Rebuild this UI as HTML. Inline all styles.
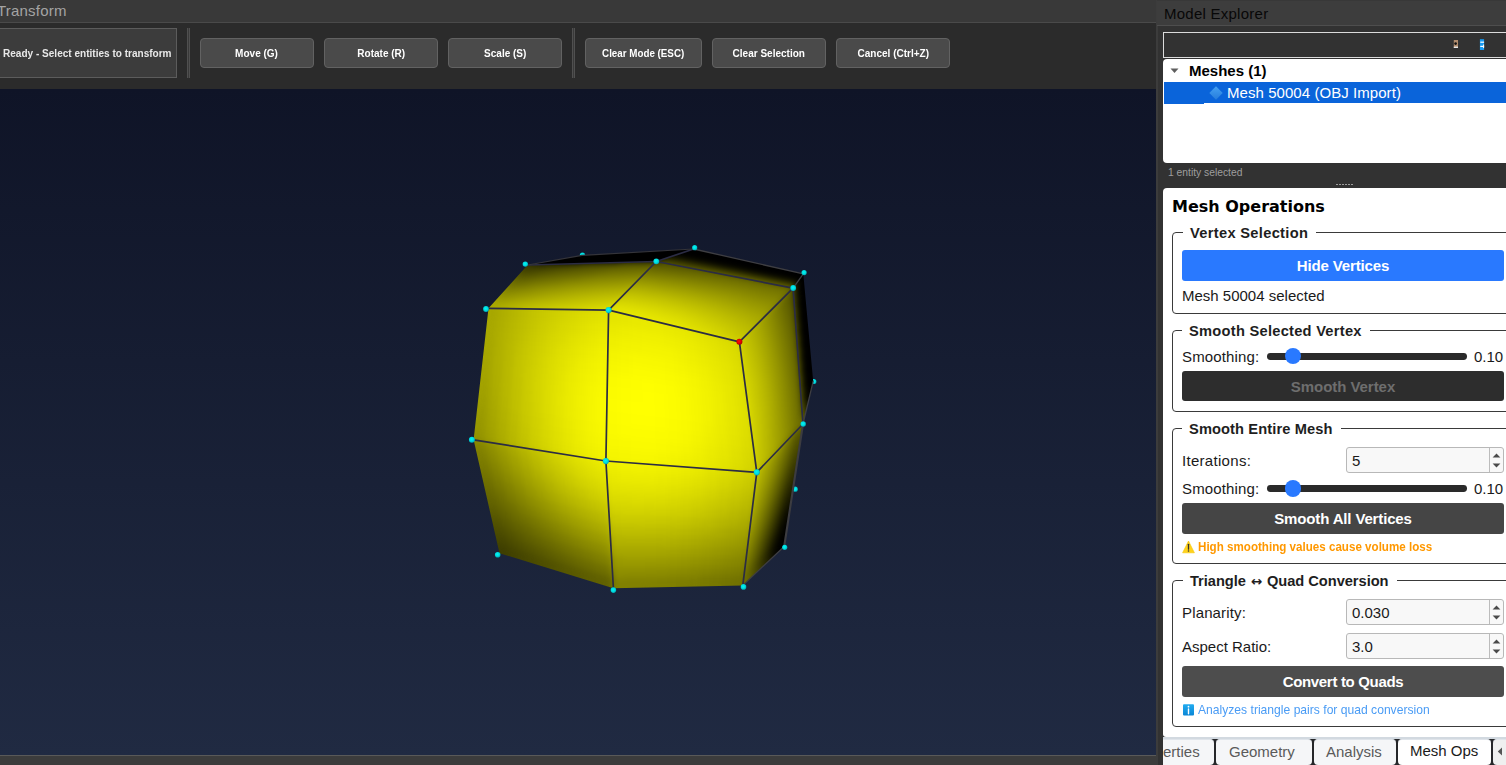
<!DOCTYPE html>
<html lang="en">
<head>
<meta charset="utf-8">
<title>Mesh Editor</title>
<style>
*{box-sizing:border-box;margin:0;padding:0}
html,body{width:1506px;height:765px;overflow:hidden;background:#3c3c3c;font-family:"Liberation Sans","DejaVu Sans",sans-serif}
.abs{position:absolute}
#app{position:relative;width:1506px;height:765px;overflow:hidden;background:#3c3c3c}
/* left title */
#ltitle{left:0;top:0;width:1156px;height:22px;background:#393939}
#ltitle span{position:absolute;left:-3px;top:2px;letter-spacing:.2px;font-size:15px;color:#a4a4a4;white-space:nowrap}
#lline{left:0;top:22px;width:1156px;height:1px;background:#4a4a4a}
#toolbar{left:0;top:23px;width:1156px;height:66px;background:#2b2b2b}
#status{left:-1px;top:28px;width:178px;height:50px;background:#3c3c3c;border:1px solid #5c5c5c}
#status span{position:absolute;left:3.3px;top:17px;font-size:11px;font-weight:bold;color:#e8e8e8;white-space:nowrap;transform:scaleX(.913);transform-origin:0 50%;line-height:14px}
.sep{top:28px;width:3px;height:50px;border:1px solid #505050;border-top:none;border-bottom:none;background:#3a3a3a}
.tbtn{top:38px;height:30px;background:#4a4a4a;border:1px solid #626262;border-radius:4px;color:#fff;font-size:11px;font-weight:bold;text-align:center;line-height:28px;white-space:nowrap}
.tbtn span{display:inline-block;transform:scaleX(.91)}
/* viewport */
#viewport{left:0;top:89px;width:1156px;height:666px;background:linear-gradient(#0f1427,#202a42)}
#bbar{left:0;top:755px;width:1156px;height:10px;background:#3c3c3c;border-top:1px solid #595959}
#vsplit{left:1156px;top:0;width:1.6px;height:765px;background:#3c3c3c}
/* dock */
#dock{left:1157.6px;top:0;width:349px;height:765px;background:#323232}
#dtitle{left:1157px;top:0;width:349px;height:26px;background:#3d3d3d;border-bottom:1px solid #4e4e4e;border-top:1px solid #383838}
#dtitle span{position:absolute;left:7px;top:4px;font-size:15px;letter-spacing:.25px;color:#080808;white-space:nowrap}
#hdr{left:1163px;top:32px;width:360px;height:26px;background:#323232;border:1px solid #dcdcdc}
#tree{left:1163px;top:59px;width:360px;height:104px;background:#fff;border-radius:4px 0 0 4px}
#row{left:1164px;top:82px;width:360px;height:20.8px;background:#0a64da}
#row2{left:1164px;top:102px;width:40px;height:1.8px;background:#0a64da}
#panel{left:1163px;top:187.6px;width:360px;height:549.6px;background:#fff;border-radius:4px 0 0 3px}
.grp{left:1172px;width:360px;border:1px solid #3a3a3a;border-radius:4px}
.gtitle{background:#fff;padding:0 8px 0 7px;font-weight:bold;font-size:14.67px;color:#1e1e1e;white-space:nowrap;line-height:18px;height:18px}
.lbl{font-size:15px;color:#1a1a1a;white-space:nowrap;line-height:18px}
.btn{left:1182px;width:322px;border-radius:3px;text-align:center;font-size:15px;font-weight:bold;color:#fff;white-space:nowrap;letter-spacing:-.15px}
.spin{left:1346px;width:158px;height:26px;background:#f8f8f8;border:1px solid #b8b8b8;border-radius:3px}
.spin span{position:absolute;left:5px;top:4px;font-size:15px;color:#1a1a1a;line-height:18px}
.spin i{position:absolute;left:142px;top:0;width:1px;height:24px;background:#bcbcbc}
.spin svg{position:absolute;left:145px;top:5px}
.track{left:1266.5px;width:200.5px;height:6.8px;border-radius:3.4px;background:#2a2a2a}
.knob{width:16.4px;height:16.4px;border-radius:8.2px;background:#2979ff}
#tabs{left:1163px;top:737px;width:343px;height:28px;background:#26272a;border-top:2px solid #d2d9e0}
.tabbg{top:738.5px;height:26.5px;background:#f5f6f8;border-radius:4px;border-top:1px solid #dfe4ea}
.tab{top:739px;height:26px;font-size:15px;color:#5a5a5a;white-space:nowrap;line-height:26px}
</style>
</head>
<body>
<div id="app">
  <div id="ltitle" class="abs"><span id="ttxt">Transform</span></div>
  <div id="lline" class="abs"></div>
  <div id="toolbar" class="abs"></div>
  <div id="status" class="abs"><span id="stxt">Ready - Select entities to transform</span></div>
  <div class="abs sep" style="left:187px"></div>
  <div class="abs tbtn" style="left:200px;width:114px" id="tb0"><span>Move (G)</span></div>
  <div class="abs tbtn" style="left:324px;width:114px" id="tb1"><span>Rotate (R)</span></div>
  <div class="abs tbtn" style="left:448px;width:114px" id="tb2"><span>Scale (S)</span></div>
  <div class="abs sep" style="left:572px"></div>
  <div class="abs tbtn" style="left:585px;width:117px" id="tb3"><span style="transform:scaleX(.89)">Clear Mode (ESC)</span></div>
  <div class="abs tbtn" style="left:712px;width:114px" id="tb4"><span>Clear Selection</span></div>
  <div class="abs tbtn" style="left:836px;width:114px" id="tb5"><span>Cancel (Ctrl+Z)</span></div>

  <div id="viewport" class="abs">
    <svg id="mesh" width="1156" height="666" viewBox="0 89 1156 666">
<defs><radialGradient id="cy" cx=".45" cy=".42" r=".6"><stop offset="0" stop-color="#00f6f6"/><stop offset=".55" stop-color="#00dde0"/><stop offset="1" stop-color="#00a4b0"/></radialGradient><radialGradient id="rd" cx=".45" cy=".42" r=".6"><stop offset="0" stop-color="#ff0a0a"/><stop offset=".6" stop-color="#e00000"/><stop offset="1" stop-color="#a00000"/></radialGradient><filter id="sm" filterUnits="userSpaceOnUse" x="440" y="220" width="420" height="400" color-interpolation-filters="sRGB"><feGaussianBlur stdDeviation="3"/><feComponentTransfer><feFuncA type="linear" slope="80"/></feComponentTransfer></filter>
<clipPath id="sil"><path d="M527.6 265.0L582.0 255.4L693.6 249.0L803.3 273.8L813.2 381.2L803.0 424.0L784.2 546.5L742.8 585.4L613.4 588.2L499.5 553.2L473.6 439.8L488.5 308.3z"/></clipPath></defs>
<g fill="url(#cy)"><circle cx="582.5" cy="255.3" r="2.7"/><circle cx="813.8" cy="381.5" r="2.6"/><circle cx="795.2" cy="489.2" r="2.6"/></g>
<g clip-path="url(#sil)"><g filter="url(#sm)" shape-rendering="crispEdges">
<path d="M527.6 265L532.1 264.2L542.7 263.9L538.3 264.7z" fill="#070700"/>
<path d="M538.3 264.7L542.7 263.9L553.3 263.6L549 264.4z" fill="#070700"/>
<path d="M549 264.4L553.3 263.6L564 263.3L559.8 264.1z" fill="#080800"/>
<path d="M559.8 264.1L564 263.3L574.6 263L570.5 263.8z" fill="#090900"/>
<path d="M570.5 263.8L574.6 263L585.2 262.6L581.2 263.5z" fill="#090900"/>
<path d="M581.2 263.5L585.2 262.6L595.8 262.3L592 263.2z" fill="#0a0a00"/>
<path d="M592 263.2L595.8 262.3L606.4 262L602.7 263z" fill="#0a0a00"/>
<path d="M602.7 263L606.4 262L617 261.7L613.4 262.7z" fill="#0a0a00"/>
<path d="M613.4 262.7L617 261.7L627.6 261.4L624.1 262.4z" fill="#0b0b00"/>
<path d="M624.1 262.4L627.6 261.4L638.2 261.1L634.8 262.1z" fill="#0b0b00"/>
<path d="M634.8 262.1L638.2 261.1L648.8 260.8L645.6 261.8z" fill="#0b0b00"/>
<path d="M645.6 261.8L648.8 260.8L659.4 260.5L656.3 261.5z" fill="#0b0b00"/>
<path d="M532.1 264.2L536.7 263.4L547.2 263.1L542.7 263.9z" fill="#000000"/>
<path d="M542.7 263.9L547.2 263.1L557.6 262.7L553.3 263.6z" fill="#000000"/>
<path d="M553.3 263.6L557.6 262.7L568.1 262.4L564 263.3z" fill="#000000"/>
<path d="M564 263.3L568.1 262.4L578.6 262.1L574.6 263z" fill="#010100"/>
<path d="M574.6 263L578.6 262.1L589.1 261.7L585.2 262.6z" fill="#010100"/>
<path d="M585.2 262.6L589.1 261.7L599.6 261.4L595.8 262.3z" fill="#020200"/>
<path d="M595.8 262.3L599.6 261.4L610.1 261.1L606.4 262z" fill="#020200"/>
<path d="M606.4 262L610.1 261.1L620.6 260.7L617 261.7z" fill="#020200"/>
<path d="M617 261.7L620.6 260.7L631.1 260.4L627.6 261.4z" fill="#030300"/>
<path d="M627.6 261.4L631.1 260.4L641.5 260.1L638.2 261.1z" fill="#030300"/>
<path d="M638.2 261.1L641.5 260.1L652 259.7L648.8 260.8z" fill="#030300"/>
<path d="M648.8 260.8L652 259.7L662.5 259.4L659.4 260.5z" fill="#040400"/>
<path d="M536.7 263.4L541.2 262.6L551.6 262.2L547.2 263.1z" fill="#000000"/>
<path d="M547.2 263.1L551.6 262.2L561.9 261.9L557.6 262.7z" fill="#000000"/>
<path d="M557.6 262.7L561.9 261.9L572.3 261.5L568.1 262.4z" fill="#000000"/>
<path d="M568.1 262.4L572.3 261.5L582.7 261.2L578.6 262.1z" fill="#000000"/>
<path d="M578.6 262.1L582.7 261.2L593 260.8L589.1 261.7z" fill="#000000"/>
<path d="M589.1 261.7L593 260.8L603.4 260.5L599.6 261.4z" fill="#000000"/>
<path d="M599.6 261.4L603.4 260.5L613.8 260.1L610.1 261.1z" fill="#000000"/>
<path d="M610.1 261.1L613.8 260.1L624.1 259.8L620.6 260.7z" fill="#000000"/>
<path d="M620.6 260.7L624.1 259.8L634.5 259.4L631.1 260.4z" fill="#000000"/>
<path d="M631.1 260.4L634.5 259.4L644.9 259.1L641.5 260.1z" fill="#000000"/>
<path d="M641.5 260.1L644.9 259.1L655.3 258.7L652 259.7z" fill="#000000"/>
<path d="M652 259.7L655.3 258.7L665.6 258.4L662.5 259.4z" fill="#000000"/>
<path d="M541.2 262.6L545.7 261.8L556 261.4L551.6 262.2z" fill="#000000"/>
<path d="M551.6 262.2L556 261.4L566.2 261.1L561.9 261.9z" fill="#000000"/>
<path d="M561.9 261.9L566.2 261.1L576.5 260.7L572.3 261.5z" fill="#000000"/>
<path d="M572.3 261.5L576.5 260.7L586.7 260.3L582.7 261.2z" fill="#000000"/>
<path d="M582.7 261.2L586.7 260.3L597 259.9L593 260.8z" fill="#000000"/>
<path d="M593 260.8L597 259.9L607.2 259.6L603.4 260.5z" fill="#000000"/>
<path d="M603.4 260.5L607.2 259.6L617.5 259.2L613.8 260.1z" fill="#000000"/>
<path d="M613.8 260.1L617.5 259.2L627.7 258.8L624.1 259.8z" fill="#000000"/>
<path d="M624.1 259.8L627.7 258.8L638 258.4L634.5 259.4z" fill="#000000"/>
<path d="M634.5 259.4L638 258.4L648.2 258.1L644.9 259.1z" fill="#000000"/>
<path d="M644.9 259.1L648.2 258.1L658.5 257.7L655.3 258.7z" fill="#000000"/>
<path d="M655.3 258.7L658.5 257.7L668.7 257.3L665.6 258.4z" fill="#000000"/>
<path d="M545.7 261.8L550.3 261L560.4 260.6L556 261.4z" fill="#000000"/>
<path d="M556 261.4L560.4 260.6L570.5 260.2L566.2 261.1z" fill="#000000"/>
<path d="M566.2 261.1L570.5 260.2L580.7 259.8L576.5 260.7z" fill="#000000"/>
<path d="M576.5 260.7L580.7 259.8L590.8 259.4L586.7 260.3z" fill="#000000"/>
<path d="M586.7 260.3L590.8 259.4L600.9 259L597 259.9z" fill="#000000"/>
<path d="M597 259.9L600.9 259L611.1 258.6L607.2 259.6z" fill="#000000"/>
<path d="M607.2 259.6L611.1 258.6L621.2 258.3L617.5 259.2z" fill="#000000"/>
<path d="M617.5 259.2L621.2 258.3L631.3 257.9L627.7 258.8z" fill="#000000"/>
<path d="M627.7 258.8L631.3 257.9L641.4 257.5L638 258.4z" fill="#000000"/>
<path d="M638 258.4L641.4 257.5L651.6 257.1L648.2 258.1z" fill="#000000"/>
<path d="M648.2 258.1L651.6 257.1L661.7 256.7L658.5 257.7z" fill="#000000"/>
<path d="M658.5 257.7L661.7 256.7L671.8 256.3L668.7 257.3z" fill="#000000"/>
<path d="M550.3 261L554.8 260.2L564.8 259.8L560.4 260.6z" fill="#000000"/>
<path d="M560.4 260.6L564.8 259.8L574.8 259.4L570.5 260.2z" fill="#000000"/>
<path d="M570.5 260.2L574.8 259.4L584.8 259L580.7 259.8z" fill="#000000"/>
<path d="M580.7 259.8L584.8 259L594.9 258.6L590.8 259.4z" fill="#000000"/>
<path d="M590.8 259.4L594.9 258.6L604.9 258.1L600.9 259z" fill="#000000"/>
<path d="M600.9 259L604.9 258.1L614.9 257.7L611.1 258.6z" fill="#000000"/>
<path d="M611.1 258.6L614.9 257.7L624.9 257.3L621.2 258.3z" fill="#000000"/>
<path d="M621.2 258.3L624.9 257.3L634.9 256.9L631.3 257.9z" fill="#000000"/>
<path d="M631.3 257.9L634.9 256.9L644.9 256.5L641.4 257.5z" fill="#000000"/>
<path d="M641.4 257.5L644.9 256.5L654.9 256.1L651.6 257.1z" fill="#000000"/>
<path d="M651.6 257.1L654.9 256.1L664.9 255.7L661.7 256.7z" fill="#000000"/>
<path d="M661.7 256.7L664.9 255.7L675 255.2L671.8 256.3z" fill="#000000"/>
<path d="M554.8 260.2L559.3 259.4L569.2 259L564.8 259.8z" fill="#000000"/>
<path d="M564.8 259.8L569.2 259L579.1 258.5L574.8 259.4z" fill="#000000"/>
<path d="M574.8 259.4L579.1 258.5L589 258.1L584.8 259z" fill="#000000"/>
<path d="M584.8 259L589 258.1L598.9 257.7L594.9 258.6z" fill="#000000"/>
<path d="M594.9 258.6L598.9 257.7L608.8 257.2L604.9 258.1z" fill="#000000"/>
<path d="M604.9 258.1L608.8 257.2L618.7 256.8L614.9 257.7z" fill="#000000"/>
<path d="M614.9 257.7L618.7 256.8L628.6 256.4L624.9 257.3z" fill="#000000"/>
<path d="M624.9 257.3L628.6 256.4L638.5 255.9L634.9 256.9z" fill="#000000"/>
<path d="M634.9 256.9L638.5 255.9L648.4 255.5L644.9 256.5z" fill="#000000"/>
<path d="M644.9 256.5L648.4 255.5L658.3 255.1L654.9 256.1z" fill="#000000"/>
<path d="M654.9 256.1L658.3 255.1L668.2 254.6L664.9 255.7z" fill="#000000"/>
<path d="M664.9 255.7L668.2 254.6L678.1 254.2L675 255.2z" fill="#000000"/>
<path d="M559.3 259.4L563.9 258.6L573.6 258.1L569.2 259z" fill="#000000"/>
<path d="M569.2 259L573.6 258.1L583.4 257.7L579.1 258.5z" fill="#000000"/>
<path d="M579.1 258.5L583.4 257.7L593.2 257.2L589 258.1z" fill="#000000"/>
<path d="M589 258.1L593.2 257.2L603 256.8L598.9 257.7z" fill="#000000"/>
<path d="M598.9 257.7L603 256.8L612.7 256.3L608.8 257.2z" fill="#000000"/>
<path d="M608.8 257.2L612.7 256.3L622.5 255.9L618.7 256.8z" fill="#000000"/>
<path d="M618.7 256.8L622.5 255.9L632.3 255.4L628.6 256.4z" fill="#000000"/>
<path d="M628.6 256.4L632.3 255.4L642.1 255L638.5 255.9z" fill="#000000"/>
<path d="M638.5 255.9L642.1 255L651.8 254.5L648.4 255.5z" fill="#000000"/>
<path d="M648.4 255.5L651.8 254.5L661.6 254.1L658.3 255.1z" fill="#000000"/>
<path d="M658.3 255.1L661.6 254.1L671.4 253.6L668.2 254.6z" fill="#000000"/>
<path d="M668.2 254.6L671.4 253.6L681.2 253.2L678.1 254.2z" fill="#000000"/>
<path d="M563.9 258.6L568.4 257.8L578.1 257.3L573.6 258.1z" fill="#000000"/>
<path d="M573.6 258.1L578.1 257.3L587.7 256.9L583.4 257.7z" fill="#000000"/>
<path d="M583.4 257.7L587.7 256.9L597.4 256.4L593.2 257.2z" fill="#000000"/>
<path d="M593.2 257.2L597.4 256.4L607 255.9L603 256.8z" fill="#000000"/>
<path d="M603 256.8L607 255.9L616.7 255.4L612.7 256.3z" fill="#000000"/>
<path d="M612.7 256.3L616.7 255.4L626.3 255L622.5 255.9z" fill="#000000"/>
<path d="M622.5 255.9L626.3 255L636 254.5L632.3 255.4z" fill="#000000"/>
<path d="M632.3 255.4L636 254.5L645.6 254L642.1 255z" fill="#000000"/>
<path d="M642.1 255L645.6 254L655.3 253.5L651.8 254.5z" fill="#000000"/>
<path d="M651.8 254.5L655.3 253.5L665 253.1L661.6 254.1z" fill="#000000"/>
<path d="M661.6 254.1L665 253.1L674.6 252.6L671.4 253.6z" fill="#000000"/>
<path d="M671.4 253.6L674.6 252.6L684.3 252.1L681.2 253.2z" fill="#000000"/>
<path d="M568.4 257.8L572.9 257L582.5 256.5L578.1 257.3z" fill="#000000"/>
<path d="M578.1 257.3L582.5 256.5L592 256L587.7 256.9z" fill="#000000"/>
<path d="M587.7 256.9L592 256L601.5 255.5L597.4 256.4z" fill="#000000"/>
<path d="M597.4 256.4L601.5 255.5L611.1 255L607 255.9z" fill="#000000"/>
<path d="M607 255.9L611.1 255L620.6 254.5L616.7 255.4z" fill="#000000"/>
<path d="M616.7 255.4L620.6 254.5L630.2 254L626.3 255z" fill="#000000"/>
<path d="M626.3 255L630.2 254L639.7 253.5L636 254.5z" fill="#000000"/>
<path d="M636 254.5L639.7 253.5L649.2 253.1L645.6 254z" fill="#000000"/>
<path d="M645.6 254L649.2 253.1L658.8 252.6L655.3 253.5z" fill="#000000"/>
<path d="M655.3 253.5L658.8 252.6L668.3 252.1L665 253.1z" fill="#000000"/>
<path d="M665 253.1L668.3 252.1L677.8 251.6L674.6 252.6z" fill="#000000"/>
<path d="M674.6 252.6L677.8 251.6L687.4 251.1L684.3 252.1z" fill="#000000"/>
<path d="M572.9 257L577.5 256.2L586.9 255.7L582.5 256.5z" fill="#000000"/>
<path d="M582.5 256.5L586.9 255.7L596.3 255.2L592 256z" fill="#000000"/>
<path d="M592 256L596.3 255.2L605.7 254.7L601.5 255.5z" fill="#000000"/>
<path d="M601.5 255.5L605.7 254.7L615.1 254.1L611.1 255z" fill="#000000"/>
<path d="M611.1 255L615.1 254.1L624.6 253.6L620.6 254.5z" fill="#000000"/>
<path d="M620.6 254.5L624.6 253.6L634 253.1L630.2 254z" fill="#000000"/>
<path d="M630.2 254L634 253.1L643.4 252.6L639.7 253.5z" fill="#000000"/>
<path d="M639.7 253.5L643.4 252.6L652.8 252.1L649.2 253.1z" fill="#000000"/>
<path d="M649.2 253.1L652.8 252.1L662.2 251.6L658.8 252.6z" fill="#000000"/>
<path d="M658.8 252.6L662.2 251.6L671.7 251.1L668.3 252.1z" fill="#000000"/>
<path d="M668.3 252.1L671.7 251.1L681.1 250.6L677.8 251.6z" fill="#000000"/>
<path d="M677.8 251.6L681.1 250.6L690.5 250L687.4 251.1z" fill="#000000"/>
<path d="M577.5 256.2L582 255.4L591.3 254.9L586.9 255.7z" fill="#000000"/>
<path d="M586.9 255.7L591.3 254.9L600.6 254.3L596.3 255.2z" fill="#000000"/>
<path d="M596.3 255.2L600.6 254.3L609.9 253.8L605.7 254.7z" fill="#000000"/>
<path d="M605.7 254.7L609.9 253.8L619.2 253.3L615.1 254.1z" fill="#000000"/>
<path d="M615.1 254.1L619.2 253.3L628.5 252.7L624.6 253.6z" fill="#000000"/>
<path d="M624.6 253.6L628.5 252.7L637.8 252.2L634 253.1z" fill="#000000"/>
<path d="M634 253.1L637.8 252.2L647.1 251.7L643.4 252.6z" fill="#000000"/>
<path d="M643.4 252.6L647.1 251.7L656.4 251.1L652.8 252.1z" fill="#000000"/>
<path d="M652.8 252.1L656.4 251.1L665.7 250.6L662.2 251.6z" fill="#000000"/>
<path d="M662.2 251.6L665.7 250.6L675 250.1L671.7 251.1z" fill="#000000"/>
<path d="M671.7 251.1L675 250.1L684.3 249.5L681.1 250.6z" fill="#000000"/>
<path d="M681.1 250.6L684.3 249.5L693.6 249L690.5 250z" fill="#000000"/>
<path d="M656.3 261.5L659.4 260.5L670.6 262.7L667.7 263.7z" fill="#4f4f00"/>
<path d="M667.7 263.7L670.6 262.7L681.8 264.9L679.1 265.9z" fill="#525200"/>
<path d="M679.1 265.9L681.8 264.9L693 267.1L690.5 268.1z" fill="#545400"/>
<path d="M690.5 268.1L693 267.1L704.3 269.3L701.9 270.4z" fill="#565600"/>
<path d="M701.9 270.4L704.3 269.3L715.5 271.5L713.3 272.6z" fill="#585800"/>
<path d="M713.3 272.6L715.5 271.5L726.7 273.7L724.7 274.8z" fill="#5a5a00"/>
<path d="M724.7 274.8L726.7 273.7L737.9 275.9L736.1 277z" fill="#5b5b00"/>
<path d="M736.1 277L737.9 275.9L749.1 278.1L747.5 279.2z" fill="#5c5c00"/>
<path d="M747.5 279.2L749.1 278.1L760.3 280.3L758.9 281.5z" fill="#5c5c00"/>
<path d="M758.9 281.5L760.3 280.3L771.5 282.5L770.3 283.7z" fill="#5c5c00"/>
<path d="M770.3 283.7L771.5 282.5L782.7 284.7L781.7 285.9z" fill="#5b5b00"/>
<path d="M781.7 285.9L782.7 284.7L794 286.9L793.1 288.1z" fill="#5b5b00"/>
<path d="M659.4 260.5L662.5 259.4L673.5 261.6L670.6 262.7z" fill="#414100"/>
<path d="M670.6 262.7L673.5 261.6L684.6 263.8L681.8 264.9z" fill="#444400"/>
<path d="M681.8 264.9L684.6 263.8L695.6 266L693 267.1z" fill="#464600"/>
<path d="M693 267.1L695.6 266L706.6 268.2L704.3 269.3z" fill="#484800"/>
<path d="M704.3 269.3L706.6 268.2L717.6 270.4L715.5 271.5z" fill="#4a4a00"/>
<path d="M715.5 271.5L717.6 270.4L728.7 272.6L726.7 273.7z" fill="#4b4b00"/>
<path d="M726.7 273.7L728.7 272.6L739.7 274.8L737.9 275.9z" fill="#4c4c00"/>
<path d="M737.9 275.9L739.7 274.8L750.7 277L749.1 278.1z" fill="#4d4d00"/>
<path d="M749.1 278.1L750.7 277L761.7 279.1L760.3 280.3z" fill="#4d4d00"/>
<path d="M760.3 280.3L761.7 279.1L772.8 281.3L771.5 282.5z" fill="#4d4d00"/>
<path d="M771.5 282.5L772.8 281.3L783.8 283.5L782.7 284.7z" fill="#4d4d00"/>
<path d="M782.7 284.7L783.8 283.5L794.8 285.7L794 286.9z" fill="#4c4c00"/>
<path d="M662.5 259.4L665.6 258.4L676.5 260.6L673.5 261.6z" fill="#333300"/>
<path d="M673.5 261.6L676.5 260.6L687.3 262.7L684.6 263.8z" fill="#353500"/>
<path d="M684.6 263.8L687.3 262.7L698.1 264.9L695.6 266z" fill="#373700"/>
<path d="M695.6 266L698.1 264.9L709 267.1L706.6 268.2z" fill="#393900"/>
<path d="M706.6 268.2L709 267.1L719.8 269.3L717.6 270.4z" fill="#3a3a00"/>
<path d="M717.6 270.4L719.8 269.3L730.6 271.5L728.7 272.6z" fill="#3b3b00"/>
<path d="M728.7 272.6L730.6 271.5L741.5 273.6L739.7 274.8z" fill="#3c3c00"/>
<path d="M739.7 274.8L741.5 273.6L752.3 275.8L750.7 277z" fill="#3d3d00"/>
<path d="M750.7 277L752.3 275.8L763.1 278L761.7 279.1z" fill="#3d3d00"/>
<path d="M761.7 279.1L763.1 278L774 280.2L772.8 281.3z" fill="#3d3d00"/>
<path d="M772.8 281.3L774 280.2L784.8 282.3L783.8 283.5z" fill="#3d3d00"/>
<path d="M783.8 283.5L784.8 282.3L795.6 284.5L794.8 285.7z" fill="#3d3d00"/>
<path d="M665.6 258.4L668.7 257.3L679.4 259.5L676.5 260.6z" fill="#242400"/>
<path d="M676.5 260.6L679.4 259.5L690 261.7L687.3 262.7z" fill="#262600"/>
<path d="M687.3 262.7L690 261.7L700.7 263.8L698.1 264.9z" fill="#272700"/>
<path d="M698.1 264.9L700.7 263.8L711.3 266L709 267.1z" fill="#292900"/>
<path d="M709 267.1L711.3 266L722 268.2L719.8 269.3z" fill="#2a2a00"/>
<path d="M719.8 269.3L722 268.2L732.6 270.3L730.6 271.5z" fill="#2b2b00"/>
<path d="M730.6 271.5L732.6 270.3L743.3 272.5L741.5 273.6z" fill="#2c2c00"/>
<path d="M741.5 273.6L743.3 272.5L753.9 274.7L752.3 275.8z" fill="#2c2c00"/>
<path d="M752.3 275.8L753.9 274.7L764.6 276.8L763.1 278z" fill="#2d2d00"/>
<path d="M763.1 278L764.6 276.8L775.2 279L774 280.2z" fill="#2d2d00"/>
<path d="M774 280.2L775.2 279L785.9 281.2L784.8 282.3z" fill="#2d2d00"/>
<path d="M784.8 282.3L785.9 281.2L796.5 283.3L795.6 284.5z" fill="#2d2d00"/>
<path d="M668.7 257.3L671.8 256.3L682.3 258.4L679.4 259.5z" fill="#151500"/>
<path d="M679.4 259.5L682.3 258.4L692.8 260.6L690 261.7z" fill="#161600"/>
<path d="M690 261.7L692.8 260.6L703.2 262.8L700.7 263.8z" fill="#171700"/>
<path d="M700.7 263.8L703.2 262.8L713.7 264.9L711.3 266z" fill="#181800"/>
<path d="M711.3 266L713.7 264.9L724.1 267.1L722 268.2z" fill="#191900"/>
<path d="M722 268.2L724.1 267.1L734.6 269.2L732.6 270.3z" fill="#1a1a00"/>
<path d="M732.6 270.3L734.6 269.2L745.1 271.4L743.3 272.5z" fill="#1b1b00"/>
<path d="M743.3 272.5L745.1 271.4L755.5 273.5L753.9 274.7z" fill="#1b1b00"/>
<path d="M753.9 274.7L755.5 273.5L766 275.7L764.6 276.8z" fill="#1c1c00"/>
<path d="M764.6 276.8L766 275.7L776.4 277.8L775.2 279z" fill="#1c1c00"/>
<path d="M775.2 279L776.4 277.8L786.9 280L785.9 281.2z" fill="#1d1d00"/>
<path d="M785.9 281.2L786.9 280L797.4 282.1L796.5 283.3z" fill="#1d1d00"/>
<path d="M671.8 256.3L675 255.2L685.2 257.4L682.3 258.4z" fill="#050500"/>
<path d="M682.3 258.4L685.2 257.4L695.5 259.5L692.8 260.6z" fill="#060600"/>
<path d="M692.8 260.6L695.5 259.5L705.8 261.7L703.2 262.8z" fill="#070700"/>
<path d="M703.2 262.8L705.8 261.7L716 263.8L713.7 264.9z" fill="#080800"/>
<path d="M713.7 264.9L716 263.8L726.3 266L724.1 267.1z" fill="#080800"/>
<path d="M724.1 267.1L726.3 266L736.6 268.1L734.6 269.2z" fill="#090900"/>
<path d="M734.6 269.2L736.6 268.1L746.8 270.2L745.1 271.4z" fill="#0a0a00"/>
<path d="M745.1 271.4L746.8 270.2L757.1 272.4L755.5 273.5z" fill="#0a0a00"/>
<path d="M755.5 273.5L757.1 272.4L767.4 274.5L766 275.7z" fill="#0b0b00"/>
<path d="M766 275.7L767.4 274.5L777.7 276.7L776.4 277.8z" fill="#0b0b00"/>
<path d="M776.4 277.8L777.7 276.7L787.9 278.8L786.9 280z" fill="#0c0c00"/>
<path d="M786.9 280L787.9 278.8L798.2 281L797.4 282.1z" fill="#0c0c00"/>
<path d="M675 255.2L678.1 254.2L688.1 256.3L685.2 257.4z" fill="#000000"/>
<path d="M685.2 257.4L688.1 256.3L698.2 258.5L695.5 259.5z" fill="#000000"/>
<path d="M695.5 259.5L698.2 258.5L708.3 260.6L705.8 261.7z" fill="#000000"/>
<path d="M705.8 261.7L708.3 260.6L718.4 262.7L716 263.8z" fill="#000000"/>
<path d="M716 263.8L718.4 262.7L728.5 264.9L726.3 266z" fill="#000000"/>
<path d="M726.3 266L728.5 264.9L738.6 267L736.6 268.1z" fill="#000000"/>
<path d="M736.6 268.1L738.6 267L748.6 269.1L746.8 270.2z" fill="#000000"/>
<path d="M746.8 270.2L748.6 269.1L758.7 271.2L757.1 272.4z" fill="#000000"/>
<path d="M757.1 272.4L758.7 271.2L768.8 273.4L767.4 274.5z" fill="#000000"/>
<path d="M767.4 274.5L768.8 273.4L778.9 275.5L777.7 276.7z" fill="#000000"/>
<path d="M777.7 276.7L778.9 275.5L789 277.6L787.9 278.8z" fill="#000000"/>
<path d="M787.9 278.8L789 277.6L799 279.8L798.2 281z" fill="#000000"/>
<path d="M678.1 254.2L681.2 253.2L691.1 255.3L688.1 256.3z" fill="#000000"/>
<path d="M688.1 256.3L691.1 255.3L701 257.4L698.2 258.5z" fill="#000000"/>
<path d="M698.2 258.5L701 257.4L710.8 259.5L708.3 260.6z" fill="#000000"/>
<path d="M708.3 260.6L710.8 259.5L720.7 261.6L718.4 262.7z" fill="#000000"/>
<path d="M718.4 262.7L720.7 261.6L730.6 263.8L728.5 264.9z" fill="#000000"/>
<path d="M728.5 264.9L730.6 263.8L740.5 265.9L738.6 267z" fill="#000000"/>
<path d="M738.6 267L740.5 265.9L750.4 268L748.6 269.1z" fill="#000000"/>
<path d="M748.6 269.1L750.4 268L760.3 270.1L758.7 271.2z" fill="#000000"/>
<path d="M758.7 271.2L760.3 270.1L770.2 272.2L768.8 273.4z" fill="#000000"/>
<path d="M768.8 273.4L770.2 272.2L780.1 274.3L778.9 275.5z" fill="#000000"/>
<path d="M778.9 275.5L780.1 274.3L790 276.4L789 277.6z" fill="#000000"/>
<path d="M789 277.6L790 276.4L799.9 278.6L799 279.8z" fill="#000000"/>
<path d="M681.2 253.2L684.3 252.1L694 254.2L691.1 255.3z" fill="#000000"/>
<path d="M691.1 255.3L694 254.2L703.7 256.3L701 257.4z" fill="#000000"/>
<path d="M701 257.4L703.7 256.3L713.4 258.4L710.8 259.5z" fill="#000000"/>
<path d="M710.8 259.5L713.4 258.4L723.1 260.5L720.7 261.6z" fill="#000000"/>
<path d="M720.7 261.6L723.1 260.5L732.8 262.6L730.6 263.8z" fill="#000000"/>
<path d="M730.6 263.8L732.8 262.6L742.5 264.8L740.5 265.9z" fill="#000000"/>
<path d="M740.5 265.9L742.5 264.8L752.2 266.9L750.4 268z" fill="#000000"/>
<path d="M750.4 268L752.2 266.9L761.9 269L760.3 270.1z" fill="#000000"/>
<path d="M760.3 270.1L761.9 269L771.6 271.1L770.2 272.2z" fill="#000000"/>
<path d="M770.2 272.2L771.6 271.1L781.3 273.2L780.1 274.3z" fill="#000000"/>
<path d="M780.1 274.3L781.3 273.2L791 275.3L790 276.4z" fill="#000000"/>
<path d="M790 276.4L791 275.3L800.8 277.4L799.9 278.6z" fill="#000000"/>
<path d="M684.3 252.1L687.4 251.1L696.9 253.2L694 254.2z" fill="#000000"/>
<path d="M694 254.2L696.9 253.2L706.4 255.3L703.7 256.3z" fill="#000000"/>
<path d="M703.7 256.3L706.4 255.3L715.9 257.4L713.4 258.4z" fill="#000000"/>
<path d="M713.4 258.4L715.9 257.4L725.5 259.4L723.1 260.5z" fill="#000000"/>
<path d="M723.1 260.5L725.5 259.4L735 261.5L732.8 262.6z" fill="#000000"/>
<path d="M732.8 262.6L735 261.5L744.5 263.6L742.5 264.8z" fill="#000000"/>
<path d="M742.5 264.8L744.5 263.6L754 265.7L752.2 266.9z" fill="#000000"/>
<path d="M752.2 266.9L754 265.7L763.5 267.8L761.9 269z" fill="#000000"/>
<path d="M761.9 269L763.5 267.8L773 269.9L771.6 271.1z" fill="#000000"/>
<path d="M771.6 271.1L773 269.9L782.6 272L781.3 273.2z" fill="#000000"/>
<path d="M781.3 273.2L782.6 272L792.1 274.1L791 275.3z" fill="#000000"/>
<path d="M791 275.3L792.1 274.1L801.6 276.2L800.8 277.4z" fill="#000000"/>
<path d="M687.4 251.1L690.5 250L699.8 252.1L696.9 253.2z" fill="#000000"/>
<path d="M696.9 253.2L699.8 252.1L709.2 254.2L706.4 255.3z" fill="#000000"/>
<path d="M706.4 255.3L709.2 254.2L718.5 256.3L715.9 257.4z" fill="#000000"/>
<path d="M715.9 257.4L718.5 256.3L727.8 258.4L725.5 259.4z" fill="#000000"/>
<path d="M725.5 259.4L727.8 258.4L737.1 260.4L735 261.5z" fill="#000000"/>
<path d="M735 261.5L737.1 260.4L746.5 262.5L744.5 263.6z" fill="#000000"/>
<path d="M744.5 263.6L746.5 262.5L755.8 264.6L754 265.7z" fill="#000000"/>
<path d="M754 265.7L755.8 264.6L765.1 266.7L763.5 267.8z" fill="#000000"/>
<path d="M763.5 267.8L765.1 266.7L774.5 268.8L773 269.9z" fill="#000000"/>
<path d="M773 269.9L774.5 268.8L783.8 270.8L782.6 272z" fill="#000000"/>
<path d="M782.6 272L783.8 270.8L793.1 272.9L792.1 274.1z" fill="#000000"/>
<path d="M792.1 274.1L793.1 272.9L802.4 275L801.6 276.2z" fill="#000000"/>
<path d="M690.5 250L693.6 249L702.7 251.1L699.8 252.1z" fill="#000000"/>
<path d="M699.8 252.1L702.7 251.1L711.9 253.1L709.2 254.2z" fill="#000000"/>
<path d="M709.2 254.2L711.9 253.1L721 255.2L718.5 256.3z" fill="#000000"/>
<path d="M718.5 256.3L721 255.2L730.2 257.3L727.8 258.4z" fill="#000000"/>
<path d="M727.8 258.4L730.2 257.3L739.3 259.3L737.1 260.4z" fill="#000000"/>
<path d="M737.1 260.4L739.3 259.3L748.5 261.4L746.5 262.5z" fill="#000000"/>
<path d="M746.5 262.5L748.5 261.4L757.6 263.5L755.8 264.6z" fill="#000000"/>
<path d="M755.8 264.6L757.6 263.5L766.7 265.5L765.1 266.7z" fill="#000000"/>
<path d="M765.1 266.7L766.7 265.5L775.9 267.6L774.5 268.8z" fill="#000000"/>
<path d="M774.5 268.8L775.9 267.6L785 269.7L783.8 270.8z" fill="#000000"/>
<path d="M783.8 270.8L785 269.7L794.2 271.7L793.1 272.9z" fill="#000000"/>
<path d="M793.1 272.9L794.2 271.7L803.3 273.8L802.4 275z" fill="#000000"/>
<path d="M793.1 288.1L794 286.9L794.8 298L793.9 299.4z" fill="#464600"/>
<path d="M793.9 299.4L794.8 298L795.6 309.2L794.8 310.8z" fill="#474700"/>
<path d="M794.8 310.8L795.6 309.2L796.4 320.3L795.6 322.1z" fill="#484800"/>
<path d="M795.6 322.1L796.4 320.3L797.2 331.4L796.4 333.4z" fill="#494900"/>
<path d="M796.4 333.4L797.2 331.4L798.1 342.5L797.2 344.7z" fill="#494900"/>
<path d="M797.2 344.7L798.1 342.5L798.9 353.7L798 356.1z" fill="#4a4a00"/>
<path d="M798 356.1L798.9 353.7L799.7 364.8L798.9 367.4z" fill="#4a4a00"/>
<path d="M798.9 367.4L799.7 364.8L800.6 375.9L799.7 378.7z" fill="#494900"/>
<path d="M799.7 378.7L800.6 375.9L801.4 387.1L800.5 390z" fill="#494900"/>
<path d="M800.5 390L801.4 387.1L802.2 398.2L801.4 401.4z" fill="#484800"/>
<path d="M801.4 401.4L802.2 398.2L803 409.3L802.2 412.7z" fill="#464600"/>
<path d="M802.2 412.7L803 409.3L803.9 420.4L803 424z" fill="#454500"/>
<path d="M794 286.9L794.8 285.7L795.6 296.6L794.8 298z" fill="#353500"/>
<path d="M794.8 298L795.6 296.6L796.4 307.6L795.6 309.2z" fill="#363600"/>
<path d="M795.6 309.2L796.4 307.6L797.3 318.5L796.4 320.3z" fill="#373700"/>
<path d="M796.4 320.3L797.3 318.5L798.1 329.4L797.2 331.4z" fill="#373700"/>
<path d="M797.2 331.4L798.1 329.4L798.9 340.4L798.1 342.5z" fill="#383800"/>
<path d="M798.1 342.5L798.9 340.4L799.8 351.3L798.9 353.7z" fill="#383800"/>
<path d="M798.9 353.7L799.8 351.3L800.6 362.2L799.7 364.8z" fill="#373700"/>
<path d="M799.7 364.8L800.6 362.2L801.4 373.1L800.6 375.9z" fill="#373700"/>
<path d="M800.6 375.9L801.4 373.1L802.2 384.1L801.4 387.1z" fill="#363600"/>
<path d="M801.4 387.1L802.2 384.1L803.1 395L802.2 398.2z" fill="#353500"/>
<path d="M802.2 398.2L803.1 395L803.9 405.9L803 409.3z" fill="#343400"/>
<path d="M803 409.3L803.9 405.9L804.7 416.9L803.9 420.4z" fill="#333300"/>
<path d="M794.8 285.7L795.6 284.5L796.5 295.3L795.6 296.6z" fill="#242400"/>
<path d="M795.6 296.6L796.5 295.3L797.3 306L796.4 307.6z" fill="#242400"/>
<path d="M796.4 307.6L797.3 306L798.1 316.7L797.3 318.5z" fill="#252500"/>
<path d="M797.3 318.5L798.1 316.7L798.9 327.5L798.1 329.4z" fill="#252500"/>
<path d="M798.1 329.4L798.9 327.5L799.8 338.2L798.9 340.4z" fill="#242400"/>
<path d="M798.9 340.4L799.8 338.2L800.6 348.9L799.8 351.3z" fill="#242400"/>
<path d="M799.8 351.3L800.6 348.9L801.4 359.6L800.6 362.2z" fill="#242400"/>
<path d="M800.6 362.2L801.4 359.6L802.2 370.4L801.4 373.1z" fill="#232300"/>
<path d="M801.4 373.1L802.2 370.4L803.1 381.1L802.2 384.1z" fill="#222200"/>
<path d="M802.2 384.1L803.1 381.1L803.9 391.8L803.1 395z" fill="#222200"/>
<path d="M803.1 395L803.9 391.8L804.7 402.6L803.9 405.9z" fill="#212100"/>
<path d="M803.9 405.9L804.7 402.6L805.5 413.3L804.7 416.9z" fill="#202000"/>
<path d="M795.6 284.5L796.5 283.3L797.3 293.9L796.5 295.3z" fill="#121200"/>
<path d="M796.5 295.3L797.3 293.9L798.1 304.4L797.3 306z" fill="#121200"/>
<path d="M797.3 306L798.1 304.4L799 314.9L798.1 316.7z" fill="#111100"/>
<path d="M798.1 316.7L799 314.9L799.8 325.5L798.9 327.5z" fill="#111100"/>
<path d="M798.9 327.5L799.8 325.5L800.6 336L799.8 338.2z" fill="#101000"/>
<path d="M799.8 338.2L800.6 336L801.5 346.5L800.6 348.9z" fill="#101000"/>
<path d="M800.6 348.9L801.5 346.5L802.3 357.1L801.4 359.6z" fill="#0f0f00"/>
<path d="M801.4 359.6L802.3 357.1L803.1 367.6L802.2 370.4z" fill="#0e0e00"/>
<path d="M802.2 370.4L803.1 367.6L803.9 378.1L803.1 381.1z" fill="#0e0e00"/>
<path d="M803.1 381.1L803.9 378.1L804.8 388.7L803.9 391.8z" fill="#0d0d00"/>
<path d="M803.9 391.8L804.8 388.7L805.6 399.2L804.7 402.6z" fill="#0c0c00"/>
<path d="M804.7 402.6L805.6 399.2L806.4 409.7L805.5 413.3z" fill="#0b0b00"/>
<path d="M796.5 283.3L797.4 282.1L798.2 292.5L797.3 293.9z" fill="#000000"/>
<path d="M797.3 293.9L798.2 292.5L799 302.8L798.1 304.4z" fill="#000000"/>
<path d="M798.1 304.4L799 302.8L799.8 313.1L799 314.9z" fill="#000000"/>
<path d="M799 314.9L799.8 313.1L800.6 323.5L799.8 325.5z" fill="#000000"/>
<path d="M799.8 325.5L800.6 323.5L801.5 333.8L800.6 336z" fill="#000000"/>
<path d="M800.6 336L801.5 333.8L802.3 344.2L801.5 346.5z" fill="#000000"/>
<path d="M801.5 346.5L802.3 344.2L803.1 354.5L802.3 357.1z" fill="#000000"/>
<path d="M802.3 357.1L803.1 354.5L804 364.8L803.1 367.6z" fill="#000000"/>
<path d="M803.1 367.6L804 364.8L804.8 375.2L803.9 378.1z" fill="#000000"/>
<path d="M803.9 378.1L804.8 375.2L805.6 385.5L804.8 388.7z" fill="#000000"/>
<path d="M804.8 388.7L805.6 385.5L806.4 395.8L805.6 399.2z" fill="#000000"/>
<path d="M805.6 399.2L806.4 395.8L807.2 406.2L806.4 409.7z" fill="#000000"/>
<path d="M797.4 282.1L798.2 281L799 291.1L798.2 292.5z" fill="#000000"/>
<path d="M798.2 292.5L799 291.1L799.9 301.2L799 302.8z" fill="#000000"/>
<path d="M799 302.8L799.9 301.2L800.7 311.4L799.8 313.1z" fill="#000000"/>
<path d="M799.8 313.1L800.7 311.4L801.5 321.5L800.6 323.5z" fill="#000000"/>
<path d="M800.6 323.5L801.5 321.5L802.3 331.6L801.5 333.8z" fill="#000000"/>
<path d="M801.5 333.8L802.3 331.6L803.2 341.8L802.3 344.2z" fill="#000000"/>
<path d="M802.3 344.2L803.2 341.8L804 351.9L803.1 354.5z" fill="#000000"/>
<path d="M803.1 354.5L804 351.9L804.8 362.1L804 364.8z" fill="#000000"/>
<path d="M804 364.8L804.8 362.1L805.6 372.2L804.8 375.2z" fill="#000000"/>
<path d="M804.8 375.2L805.6 372.2L806.5 382.3L805.6 385.5z" fill="#000000"/>
<path d="M805.6 385.5L806.5 382.3L807.3 392.5L806.4 395.8z" fill="#000000"/>
<path d="M806.4 395.8L807.3 392.5L808.1 402.6L807.2 406.2z" fill="#000000"/>
<path d="M798.2 281L799 279.8L799.9 289.7L799 291.1z" fill="#000000"/>
<path d="M799 291.1L799.9 289.7L800.7 299.6L799.9 301.2z" fill="#000000"/>
<path d="M799.9 301.2L800.7 299.6L801.5 309.6L800.7 311.4z" fill="#000000"/>
<path d="M800.7 311.4L801.5 309.6L802.4 319.5L801.5 321.5z" fill="#000000"/>
<path d="M801.5 321.5L802.4 319.5L803.2 329.5L802.3 331.6z" fill="#000000"/>
<path d="M802.3 331.6L803.2 329.5L804 339.4L803.2 341.8z" fill="#000000"/>
<path d="M803.2 341.8L804 339.4L804.8 349.3L804 351.9z" fill="#000000"/>
<path d="M804 351.9L804.8 349.3L805.6 359.3L804.8 362.1z" fill="#000000"/>
<path d="M804.8 362.1L805.6 359.3L806.5 369.2L805.6 372.2z" fill="#000000"/>
<path d="M805.6 372.2L806.5 369.2L807.3 379.2L806.5 382.3z" fill="#000000"/>
<path d="M806.5 382.3L807.3 379.2L808.1 389.1L807.3 392.5z" fill="#000000"/>
<path d="M807.3 392.5L808.1 389.1L809 399L808.1 402.6z" fill="#000000"/>
<path d="M799 279.8L799.9 278.6L800.7 288.3L799.9 289.7z" fill="#000000"/>
<path d="M799.9 289.7L800.7 288.3L801.5 298.1L800.7 299.6z" fill="#000000"/>
<path d="M800.7 299.6L801.5 298.1L802.4 307.8L801.5 309.6z" fill="#000000"/>
<path d="M801.5 309.6L802.4 307.8L803.2 317.5L802.4 319.5z" fill="#000000"/>
<path d="M802.4 319.5L803.2 317.5L804 327.3L803.2 329.5z" fill="#000000"/>
<path d="M803.2 329.5L804 327.3L804.9 337L804 339.4z" fill="#000000"/>
<path d="M804 339.4L804.9 337L805.7 346.8L804.8 349.3z" fill="#000000"/>
<path d="M804.8 349.3L805.7 346.8L806.5 356.5L805.6 359.3z" fill="#000000"/>
<path d="M805.6 359.3L806.5 356.5L807.3 366.2L806.5 369.2z" fill="#000000"/>
<path d="M806.5 369.2L807.3 366.2L808.2 376L807.3 379.2z" fill="#000000"/>
<path d="M807.3 379.2L808.2 376L809 385.7L808.1 389.1z" fill="#000000"/>
<path d="M808.1 389.1L809 385.7L809.8 395.5L809 399z" fill="#000000"/>
<path d="M799.9 278.6L800.8 277.4L801.6 286.9L800.7 288.3z" fill="#000000"/>
<path d="M800.7 288.3L801.6 286.9L802.4 296.5L801.5 298.1z" fill="#000000"/>
<path d="M801.5 298.1L802.4 296.5L803.2 306L802.4 307.8z" fill="#000000"/>
<path d="M802.4 307.8L803.2 306L804.1 315.6L803.2 317.5z" fill="#000000"/>
<path d="M803.2 317.5L804.1 315.6L804.9 325.1L804 327.3z" fill="#000000"/>
<path d="M804 327.3L804.9 325.1L805.7 334.6L804.9 337z" fill="#000000"/>
<path d="M804.9 337L805.7 334.6L806.5 344.2L805.7 346.8z" fill="#000000"/>
<path d="M805.7 346.8L806.5 344.2L807.4 353.7L806.5 356.5z" fill="#000000"/>
<path d="M806.5 356.5L807.4 353.7L808.2 363.3L807.3 366.2z" fill="#000000"/>
<path d="M807.3 366.2L808.2 363.3L809 372.8L808.2 376z" fill="#000000"/>
<path d="M808.2 376L809 372.8L809.8 382.4L809 385.7z" fill="#000000"/>
<path d="M809 385.7L809.8 382.4L810.7 391.9L809.8 395.5z" fill="#000000"/>
<path d="M800.8 277.4L801.6 276.2L802.4 285.5L801.6 286.9z" fill="#000000"/>
<path d="M801.6 286.9L802.4 285.5L803.2 294.9L802.4 296.5z" fill="#000000"/>
<path d="M802.4 296.5L803.2 294.9L804.1 304.2L803.2 306z" fill="#000000"/>
<path d="M803.2 306L804.1 304.2L804.9 313.6L804.1 315.6z" fill="#000000"/>
<path d="M804.1 315.6L804.9 313.6L805.7 322.9L804.9 325.1z" fill="#000000"/>
<path d="M804.9 325.1L805.7 322.9L806.5 332.3L805.7 334.6z" fill="#000000"/>
<path d="M805.7 334.6L806.5 332.3L807.4 341.6L806.5 344.2z" fill="#000000"/>
<path d="M806.5 344.2L807.4 341.6L808.2 350.9L807.4 353.7z" fill="#000000"/>
<path d="M807.4 353.7L808.2 350.9L809 360.3L808.2 363.3z" fill="#000000"/>
<path d="M808.2 363.3L809 360.3L809.9 369.6L809 372.8z" fill="#000000"/>
<path d="M809 372.8L809.9 369.6L810.7 379L809.8 382.4z" fill="#000000"/>
<path d="M809.8 382.4L810.7 379L811.5 388.3L810.7 391.9z" fill="#000000"/>
<path d="M801.6 276.2L802.4 275L803.3 284.1L802.4 285.5z" fill="#000000"/>
<path d="M802.4 285.5L803.3 284.1L804.1 293.3L803.2 294.9z" fill="#000000"/>
<path d="M803.2 294.9L804.1 293.3L804.9 302.4L804.1 304.2z" fill="#000000"/>
<path d="M804.1 304.2L804.9 302.4L805.8 311.6L804.9 313.6z" fill="#000000"/>
<path d="M804.9 313.6L805.8 311.6L806.6 320.7L805.7 322.9z" fill="#000000"/>
<path d="M805.7 322.9L806.6 320.7L807.4 329.9L806.5 332.3z" fill="#000000"/>
<path d="M806.5 332.3L807.4 329.9L808.2 339L807.4 341.6z" fill="#000000"/>
<path d="M807.4 341.6L808.2 339L809 348.2L808.2 350.9z" fill="#000000"/>
<path d="M808.2 350.9L809 348.2L809.9 357.3L809 360.3z" fill="#000000"/>
<path d="M809 360.3L809.9 357.3L810.7 366.5L809.9 369.6z" fill="#000000"/>
<path d="M809.9 369.6L810.7 366.5L811.5 375.6L810.7 379z" fill="#000000"/>
<path d="M810.7 379L811.5 375.6L812.4 384.8L811.5 388.3z" fill="#000000"/>
<path d="M802.4 275L803.3 273.8L804.1 282.8L803.3 284.1z" fill="#000000"/>
<path d="M803.3 284.1L804.1 282.8L804.9 291.7L804.1 293.3z" fill="#000000"/>
<path d="M804.1 293.3L804.9 291.7L805.8 300.6L804.9 302.4z" fill="#000000"/>
<path d="M804.9 302.4L805.8 300.6L806.6 309.6L805.8 311.6z" fill="#000000"/>
<path d="M805.8 311.6L806.6 309.6L807.4 318.6L806.6 320.7z" fill="#000000"/>
<path d="M806.6 320.7L807.4 318.6L808.2 327.5L807.4 329.9z" fill="#000000"/>
<path d="M807.4 329.9L808.2 327.5L809.1 336.4L808.2 339z" fill="#000000"/>
<path d="M808.2 339L809.1 336.4L809.9 345.4L809 348.2z" fill="#000000"/>
<path d="M809 348.2L809.9 345.4L810.7 354.4L809.9 357.3z" fill="#000000"/>
<path d="M809.9 357.3L810.7 354.4L811.6 363.3L810.7 366.5z" fill="#000000"/>
<path d="M810.7 366.5L811.6 363.3L812.4 372.2L811.5 375.6z" fill="#000000"/>
<path d="M811.5 375.6L812.4 372.2L813.2 381.2L812.4 384.8z" fill="#000000"/>
<path d="M527.6 265L538.3 264.7L535 268.4L524.3 268.6z" fill="#363600"/>
<path d="M524.3 268.6L535 268.4L531.7 272L521.1 272.2z" fill="#414100"/>
<path d="M521.1 272.2L531.7 272L528.4 275.6L517.8 275.8z" fill="#4d4d00"/>
<path d="M517.8 275.8L528.4 275.6L525.1 279.3L514.6 279.4z" fill="#595900"/>
<path d="M514.6 279.4L525.1 279.3L521.7 282.9L511.3 283z" fill="#656500"/>
<path d="M511.3 283L521.7 282.9L518.4 286.6L508.1 286.6z" fill="#717100"/>
<path d="M508.1 286.6L518.4 286.6L515.1 290.2L504.8 290.3z" fill="#7c7c00"/>
<path d="M504.8 290.3L515.1 290.2L511.8 293.9L501.5 293.9z" fill="#878700"/>
<path d="M501.5 293.9L511.8 293.9L508.5 297.5L498.3 297.5z" fill="#919100"/>
<path d="M498.3 297.5L508.5 297.5L505.1 301.2L495 301.1z" fill="#9b9b00"/>
<path d="M495 301.1L505.1 301.2L501.8 304.8L491.8 304.7z" fill="#a4a400"/>
<path d="M491.8 304.7L501.8 304.8L498.5 308.4L488.5 308.3z" fill="#acac00"/>
<path d="M538.3 264.7L549 264.4L545.7 268.1L535 268.4z" fill="#3a3a00"/>
<path d="M535 268.4L545.7 268.1L542.3 271.8L531.7 272z" fill="#464600"/>
<path d="M531.7 272L542.3 271.8L538.9 275.5L528.4 275.6z" fill="#525200"/>
<path d="M528.4 275.6L538.9 275.5L535.5 279.1L525.1 279.3z" fill="#5e5e00"/>
<path d="M525.1 279.3L535.5 279.1L532.2 282.8L521.7 282.9z" fill="#6a6a00"/>
<path d="M521.7 282.9L532.2 282.8L528.8 286.5L518.4 286.6z" fill="#767600"/>
<path d="M518.4 286.6L528.8 286.5L525.4 290.2L515.1 290.2z" fill="#828200"/>
<path d="M515.1 290.2L525.4 290.2L522 293.9L511.8 293.9z" fill="#8d8d00"/>
<path d="M511.8 293.9L522 293.9L518.6 297.6L508.5 297.5z" fill="#979700"/>
<path d="M508.5 297.5L518.6 297.6L515.3 301.2L505.1 301.2z" fill="#a0a000"/>
<path d="M505.1 301.2L515.3 301.2L511.9 304.9L501.8 304.8z" fill="#a9a900"/>
<path d="M501.8 304.8L511.9 304.9L508.5 308.6L498.5 308.4z" fill="#b2b200"/>
<path d="M549 264.4L559.8 264.1L556.3 267.8L545.7 268.1z" fill="#3e3e00"/>
<path d="M545.7 268.1L556.3 267.8L552.9 271.6L542.3 271.8z" fill="#4b4b00"/>
<path d="M542.3 271.8L552.9 271.6L549.5 275.3L538.9 275.5z" fill="#575700"/>
<path d="M538.9 275.5L549.5 275.3L546 279L535.5 279.1z" fill="#646400"/>
<path d="M535.5 279.1L546 279L542.6 282.7L532.2 282.8z" fill="#707000"/>
<path d="M532.2 282.8L542.6 282.7L539.1 286.4L528.8 286.5z" fill="#7c7c00"/>
<path d="M528.8 286.5L539.1 286.4L535.7 290.2L525.4 290.2z" fill="#878700"/>
<path d="M525.4 290.2L535.7 290.2L532.3 293.9L522 293.9z" fill="#929200"/>
<path d="M522 293.9L532.3 293.9L528.8 297.6L518.6 297.6z" fill="#9c9c00"/>
<path d="M518.6 297.6L528.8 297.6L525.4 301.3L515.3 301.2z" fill="#a6a600"/>
<path d="M515.3 301.2L525.4 301.3L522 305L511.9 304.9z" fill="#afaf00"/>
<path d="M511.9 304.9L522 305L518.5 308.8L508.5 308.6z" fill="#b7b700"/>
<path d="M559.8 264.1L570.5 263.8L567 267.6L556.3 267.8z" fill="#424200"/>
<path d="M556.3 267.8L567 267.6L563.5 271.3L552.9 271.6z" fill="#4f4f00"/>
<path d="M552.9 271.6L563.5 271.3L560 275.1L549.5 275.3z" fill="#5c5c00"/>
<path d="M549.5 275.3L560 275.1L556.5 278.9L546 279z" fill="#686800"/>
<path d="M546 279L556.5 278.9L553 282.6L542.6 282.7z" fill="#757500"/>
<path d="M542.6 282.7L553 282.6L549.5 286.4L539.1 286.4z" fill="#818100"/>
<path d="M539.1 286.4L549.5 286.4L546 290.1L535.7 290.2z" fill="#8d8d00"/>
<path d="M535.7 290.2L546 290.1L542.5 293.9L532.3 293.9z" fill="#989800"/>
<path d="M532.3 293.9L542.5 293.9L539 297.6L528.8 297.6z" fill="#a2a200"/>
<path d="M528.8 297.6L539 297.6L535.5 301.4L525.4 301.3z" fill="#abab00"/>
<path d="M525.4 301.3L535.5 301.4L532 305.1L522 305z" fill="#b4b400"/>
<path d="M522 305L532 305.1L528.5 308.9L518.5 308.8z" fill="#bcbc00"/>
<path d="M570.5 263.8L581.2 263.5L577.7 267.3L567 267.6z" fill="#464600"/>
<path d="M567 267.6L577.7 267.3L574.1 271.1L563.5 271.3z" fill="#535300"/>
<path d="M563.5 271.3L574.1 271.1L570.6 274.9L560 275.1z" fill="#606000"/>
<path d="M560 275.1L570.6 274.9L567 278.7L556.5 278.9z" fill="#6d6d00"/>
<path d="M556.5 278.9L567 278.7L563.4 282.5L553 282.6z" fill="#7a7a00"/>
<path d="M553 282.6L563.4 282.5L559.9 286.3L549.5 286.4z" fill="#868600"/>
<path d="M549.5 286.4L559.9 286.3L556.3 290.1L546 290.1z" fill="#929200"/>
<path d="M546 290.1L556.3 290.1L552.8 293.9L542.5 293.9z" fill="#9d9d00"/>
<path d="M542.5 293.9L552.8 293.9L549.2 297.7L539 297.6z" fill="#a7a700"/>
<path d="M539 297.6L549.2 297.7L545.7 301.5L535.5 301.4z" fill="#b0b000"/>
<path d="M535.5 301.4L545.7 301.5L542.1 305.3L532 305.1z" fill="#b9b900"/>
<path d="M532 305.1L542.1 305.3L538.5 309.1L528.5 308.9z" fill="#c1c100"/>
<path d="M581.2 263.5L592 263.2L588.3 267.1L577.7 267.3z" fill="#4a4a00"/>
<path d="M577.7 267.3L588.3 267.1L584.7 270.9L574.1 271.1z" fill="#575700"/>
<path d="M574.1 271.1L584.7 270.9L581.1 274.7L570.6 274.9z" fill="#646400"/>
<path d="M570.6 274.9L581.1 274.7L577.5 278.6L567 278.7z" fill="#717100"/>
<path d="M567 278.7L577.5 278.6L573.9 282.4L563.4 282.5z" fill="#7e7e00"/>
<path d="M563.4 282.5L573.9 282.4L570.2 286.2L559.9 286.3z" fill="#8b8b00"/>
<path d="M559.9 286.3L570.2 286.2L566.6 290.1L556.3 290.1z" fill="#969600"/>
<path d="M556.3 290.1L566.6 290.1L563 293.9L552.8 293.9z" fill="#a1a100"/>
<path d="M552.8 293.9L563 293.9L559.4 297.7L549.2 297.7z" fill="#acac00"/>
<path d="M549.2 297.7L559.4 297.7L555.8 301.5L545.7 301.5z" fill="#b5b500"/>
<path d="M545.7 301.5L555.8 301.5L552.2 305.4L542.1 305.3z" fill="#bdbd00"/>
<path d="M542.1 305.3L552.2 305.4L548.5 309.2L538.5 309.1z" fill="#c5c500"/>
<path d="M592 263.2L602.7 263L599 266.8L588.3 267.1z" fill="#4d4d00"/>
<path d="M588.3 267.1L599 266.8L595.3 270.7L584.7 270.9z" fill="#5a5a00"/>
<path d="M584.7 270.9L595.3 270.7L591.6 274.6L581.1 274.7z" fill="#686800"/>
<path d="M581.1 274.7L591.6 274.6L588 278.4L577.5 278.6z" fill="#757500"/>
<path d="M577.5 278.6L588 278.4L584.3 282.3L573.9 282.4z" fill="#828200"/>
<path d="M573.9 282.4L584.3 282.3L580.6 286.2L570.2 286.2z" fill="#8f8f00"/>
<path d="M570.2 286.2L580.6 286.2L576.9 290L566.6 290.1z" fill="#9b9b00"/>
<path d="M566.6 290.1L576.9 290L573.3 293.9L563 293.9z" fill="#a6a600"/>
<path d="M563 293.9L573.3 293.9L569.6 297.8L559.4 297.7z" fill="#b0b000"/>
<path d="M559.4 297.7L569.6 297.8L565.9 301.6L555.8 301.5z" fill="#b9b900"/>
<path d="M555.8 301.5L565.9 301.6L562.2 305.5L552.2 305.4z" fill="#c2c200"/>
<path d="M552.2 305.4L562.2 305.5L558.6 309.4L548.5 309.2z" fill="#c9c900"/>
<path d="M602.7 263L613.4 262.7L609.7 266.6L599 266.8z" fill="#505000"/>
<path d="M599 266.8L609.7 266.6L605.9 270.5L595.3 270.7z" fill="#5d5d00"/>
<path d="M595.3 270.7L605.9 270.5L602.2 274.4L591.6 274.6z" fill="#6b6b00"/>
<path d="M591.6 274.6L602.2 274.4L598.5 278.3L588 278.4z" fill="#797900"/>
<path d="M588 278.4L598.5 278.3L594.7 282.2L584.3 282.3z" fill="#868600"/>
<path d="M584.3 282.3L594.7 282.2L591 286.1L580.6 286.2z" fill="#929200"/>
<path d="M580.6 286.2L591 286.1L587.2 290L576.9 290z" fill="#9e9e00"/>
<path d="M576.9 290L587.2 290L583.5 293.9L573.3 293.9z" fill="#aaaa00"/>
<path d="M573.3 293.9L583.5 293.9L579.8 297.8L569.6 297.8z" fill="#b4b400"/>
<path d="M569.6 297.8L579.8 297.8L576 301.7L565.9 301.6z" fill="#bdbd00"/>
<path d="M565.9 301.6L576 301.7L572.3 305.6L562.2 305.5z" fill="#c5c500"/>
<path d="M562.2 305.5L572.3 305.6L568.6 309.5L558.6 309.4z" fill="#cdcd00"/>
<path d="M613.4 262.7L624.1 262.4L620.3 266.3L609.7 266.6z" fill="#525200"/>
<path d="M609.7 266.6L620.3 266.3L616.5 270.3L605.9 270.5z" fill="#606000"/>
<path d="M605.9 270.5L616.5 270.3L612.7 274.2L602.2 274.4z" fill="#6e6e00"/>
<path d="M602.2 274.4L612.7 274.2L608.9 278.1L598.5 278.3z" fill="#7b7b00"/>
<path d="M598.5 278.3L608.9 278.1L605.1 282.1L594.7 282.2z" fill="#898900"/>
<path d="M594.7 282.2L605.1 282.1L601.4 286L591 286.1z" fill="#969600"/>
<path d="M591 286.1L601.4 286L597.6 290L587.2 290z" fill="#a2a200"/>
<path d="M587.2 290L597.6 290L593.8 293.9L583.5 293.9z" fill="#adad00"/>
<path d="M583.5 293.9L593.8 293.9L590 297.8L579.8 297.8z" fill="#b7b700"/>
<path d="M579.8 297.8L590 297.8L586.2 301.8L576 301.7z" fill="#c0c000"/>
<path d="M576 301.7L586.2 301.8L582.4 305.7L572.3 305.6z" fill="#c9c900"/>
<path d="M572.3 305.6L582.4 305.7L578.6 309.7L568.6 309.5z" fill="#d0d000"/>
<path d="M624.1 262.4L634.8 262.1L631 266.1L620.3 266.3z" fill="#555500"/>
<path d="M620.3 266.3L631 266.1L627.1 270L616.5 270.3z" fill="#626200"/>
<path d="M616.5 270.3L627.1 270L623.3 274L612.7 274.2z" fill="#707000"/>
<path d="M612.7 274.2L623.3 274L619.4 278L608.9 278.1z" fill="#7e7e00"/>
<path d="M608.9 278.1L619.4 278L615.6 282L605.1 282.1z" fill="#8b8b00"/>
<path d="M605.1 282.1L615.6 282L611.7 285.9L601.4 286z" fill="#989800"/>
<path d="M601.4 286L611.7 285.9L607.9 289.9L597.6 290z" fill="#a4a400"/>
<path d="M597.6 290L607.9 289.9L604 293.9L593.8 293.9z" fill="#b0b000"/>
<path d="M593.8 293.9L604 293.9L600.1 297.9L590 297.8z" fill="#baba00"/>
<path d="M590 297.8L600.1 297.9L596.3 301.8L586.2 301.8z" fill="#c3c300"/>
<path d="M586.2 301.8L596.3 301.8L592.4 305.8L582.4 305.7z" fill="#cccc00"/>
<path d="M582.4 305.7L592.4 305.8L588.6 309.8L578.6 309.7z" fill="#d3d300"/>
<path d="M634.8 262.1L645.6 261.8L641.7 265.8L631 266.1z" fill="#565600"/>
<path d="M631 266.1L641.7 265.8L637.7 269.8L627.1 270z" fill="#646400"/>
<path d="M627.1 270L637.7 269.8L633.8 273.8L623.3 274z" fill="#727200"/>
<path d="M623.3 274L633.8 273.8L629.9 277.8L619.4 278z" fill="#808000"/>
<path d="M619.4 278L629.9 277.8L626 281.9L615.6 282z" fill="#8d8d00"/>
<path d="M615.6 282L626 281.9L622.1 285.9L611.7 285.9z" fill="#9a9a00"/>
<path d="M611.7 285.9L622.1 285.9L618.2 289.9L607.9 289.9z" fill="#a6a600"/>
<path d="M607.9 289.9L618.2 289.9L614.3 293.9L604 293.9z" fill="#b2b200"/>
<path d="M604 293.9L614.3 293.9L610.3 297.9L600.1 297.9z" fill="#bcbc00"/>
<path d="M600.1 297.9L610.3 297.9L606.4 301.9L596.3 301.8z" fill="#c6c600"/>
<path d="M596.3 301.8L606.4 301.9L602.5 305.9L592.4 305.8z" fill="#cece00"/>
<path d="M592.4 305.8L602.5 305.9L598.6 310L588.6 309.8z" fill="#d5d500"/>
<path d="M645.6 261.8L656.3 261.5L652.3 265.6L641.7 265.8z" fill="#585800"/>
<path d="M641.7 265.8L652.3 265.6L648.3 269.6L637.7 269.8z" fill="#666600"/>
<path d="M637.7 269.8L648.3 269.6L644.4 273.6L633.8 273.8z" fill="#737300"/>
<path d="M633.8 273.8L644.4 273.6L640.4 277.7L629.9 277.8z" fill="#818100"/>
<path d="M629.9 277.8L640.4 277.7L636.4 281.8L626 281.9z" fill="#8f8f00"/>
<path d="M626 281.9L636.4 281.8L632.5 285.8L622.1 285.9z" fill="#9c9c00"/>
<path d="M622.1 285.9L632.5 285.8L628.5 289.9L618.2 289.9z" fill="#a8a800"/>
<path d="M618.2 289.9L628.5 289.9L624.5 293.9L614.3 293.9z" fill="#b4b400"/>
<path d="M614.3 293.9L624.5 293.9L620.5 298L610.3 297.9z" fill="#bebe00"/>
<path d="M610.3 297.9L620.5 298L616.5 302L606.4 301.9z" fill="#c8c800"/>
<path d="M606.4 301.9L616.5 302L612.6 306.1L602.5 305.9z" fill="#d0d000"/>
<path d="M602.5 305.9L612.6 306.1L608.6 310.1L598.6 310z" fill="#d7d700"/>
<path d="M656.3 261.5L667.7 263.7L663.7 267.8L652.3 265.6z" fill="#565600"/>
<path d="M652.3 265.6L663.7 267.8L659.7 271.9L648.3 269.6z" fill="#666600"/>
<path d="M648.3 269.6L659.7 271.9L655.6 276L644.4 273.6z" fill="#757500"/>
<path d="M644.4 273.6L655.6 276L651.6 280.1L640.4 277.7z" fill="#858500"/>
<path d="M640.4 277.7L651.6 280.1L647.6 284.1L636.4 281.8z" fill="#949400"/>
<path d="M636.4 281.8L647.6 284.1L643.6 288.2L632.5 285.8z" fill="#a3a300"/>
<path d="M632.5 285.8L643.6 288.2L639.6 292.3L628.5 289.9z" fill="#b1b100"/>
<path d="M628.5 289.9L639.6 292.3L635.6 296.4L624.5 293.9z" fill="#bebe00"/>
<path d="M624.5 293.9L635.6 296.4L631.5 300.5L620.5 298z" fill="#c9c900"/>
<path d="M620.5 298L631.5 300.5L627.5 304.6L616.5 302z" fill="#d3d300"/>
<path d="M616.5 302L627.5 304.6L623.5 308.7L612.6 306.1z" fill="#dcdc00"/>
<path d="M612.6 306.1L623.5 308.7L619.5 312.7L608.6 310.1z" fill="#e3e300"/>
<path d="M667.7 263.7L679.1 265.9L675 270.1L663.7 267.8z" fill="#5a5a00"/>
<path d="M663.7 267.8L675 270.1L671 274.2L659.7 271.9z" fill="#6a6a00"/>
<path d="M659.7 271.9L671 274.2L666.9 278.3L655.6 276z" fill="#797900"/>
<path d="M655.6 276L666.9 278.3L662.9 282.4L651.6 280.1z" fill="#898900"/>
<path d="M651.6 280.1L662.9 282.4L658.8 286.5L647.6 284.1z" fill="#989800"/>
<path d="M647.6 284.1L658.8 286.5L654.8 290.7L643.6 288.2z" fill="#a6a600"/>
<path d="M643.6 288.2L654.8 290.7L650.7 294.8L639.6 292.3z" fill="#b4b400"/>
<path d="M639.6 292.3L650.7 294.8L646.6 298.9L635.6 296.4z" fill="#c0c000"/>
<path d="M635.6 296.4L646.6 298.9L642.6 303L631.5 300.5z" fill="#cbcb00"/>
<path d="M631.5 300.5L642.6 303L638.5 307.1L627.5 304.6z" fill="#d5d500"/>
<path d="M627.5 304.6L638.5 307.1L634.5 311.3L623.5 308.7z" fill="#dede00"/>
<path d="M623.5 308.7L634.5 311.3L630.4 315.4L619.5 312.7z" fill="#e5e500"/>
<path d="M679.1 265.9L690.5 268.1L686.4 272.3L675 270.1z" fill="#5e5e00"/>
<path d="M675 270.1L686.4 272.3L682.3 276.5L671 274.2z" fill="#6d6d00"/>
<path d="M671 274.2L682.3 276.5L678.2 280.6L666.9 278.3z" fill="#7d7d00"/>
<path d="M666.9 278.3L678.2 280.6L674.1 284.8L662.9 282.4z" fill="#8c8c00"/>
<path d="M662.9 282.4L674.1 284.8L670 288.9L658.8 286.5z" fill="#9a9a00"/>
<path d="M658.8 286.5L670 288.9L665.9 293.1L654.8 290.7z" fill="#a8a800"/>
<path d="M654.8 290.7L665.9 293.1L661.8 297.2L650.7 294.8z" fill="#b6b600"/>
<path d="M650.7 294.8L661.8 297.2L657.7 301.4L646.6 298.9z" fill="#c2c200"/>
<path d="M646.6 298.9L657.7 301.4L653.6 305.6L642.6 303z" fill="#cdcd00"/>
<path d="M642.6 303L653.6 305.6L649.5 309.7L638.5 307.1z" fill="#d6d600"/>
<path d="M638.5 307.1L649.5 309.7L645.4 313.9L634.5 311.3z" fill="#dfdf00"/>
<path d="M634.5 311.3L645.4 313.9L641.3 318L630.4 315.4z" fill="#e6e600"/>
<path d="M690.5 268.1L701.9 270.4L697.8 274.6L686.4 272.3z" fill="#626200"/>
<path d="M686.4 272.3L697.8 274.6L693.6 278.8L682.3 276.5z" fill="#717100"/>
<path d="M682.3 276.5L693.6 278.8L689.5 282.9L678.2 280.6z" fill="#808000"/>
<path d="M678.2 280.6L689.5 282.9L685.3 287.1L674.1 284.8z" fill="#8e8e00"/>
<path d="M674.1 284.8L685.3 287.1L681.2 291.3L670 288.9z" fill="#9c9c00"/>
<path d="M670 288.9L681.2 291.3L677 295.5L665.9 293.1z" fill="#aaaa00"/>
<path d="M665.9 293.1L677 295.5L672.9 299.7L661.8 297.2z" fill="#b7b700"/>
<path d="M661.8 297.2L672.9 299.7L668.8 303.9L657.7 301.4z" fill="#c3c300"/>
<path d="M657.7 301.4L668.8 303.9L664.6 308.1L653.6 305.6z" fill="#cdcd00"/>
<path d="M653.6 305.6L664.6 308.1L660.5 312.3L649.5 309.7z" fill="#d7d700"/>
<path d="M649.5 309.7L660.5 312.3L656.3 316.5L645.4 313.9z" fill="#dfdf00"/>
<path d="M645.4 313.9L656.3 316.5L652.2 320.7L641.3 318z" fill="#e6e600"/>
<path d="M701.9 270.4L713.3 272.6L709.1 276.8L697.8 274.6z" fill="#666600"/>
<path d="M697.8 274.6L709.1 276.8L704.9 281L693.6 278.8z" fill="#747400"/>
<path d="M693.6 278.8L704.9 281L700.8 285.3L689.5 282.9z" fill="#828200"/>
<path d="M689.5 282.9L700.8 285.3L696.6 289.5L685.3 287.1z" fill="#909000"/>
<path d="M685.3 287.1L696.6 289.5L692.4 293.7L681.2 291.3z" fill="#9e9e00"/>
<path d="M681.2 291.3L692.4 293.7L688.2 297.9L677 295.5z" fill="#abab00"/>
<path d="M677 295.5L688.2 297.9L684 302.2L672.9 299.7z" fill="#b7b700"/>
<path d="M672.9 299.7L684 302.2L679.8 306.4L668.8 303.9z" fill="#c3c300"/>
<path d="M668.8 303.9L679.8 306.4L675.6 310.6L664.6 308.1z" fill="#cdcd00"/>
<path d="M664.6 308.1L675.6 310.6L671.5 314.9L660.5 312.3z" fill="#d6d600"/>
<path d="M660.5 312.3L671.5 314.9L667.3 319.1L656.3 316.5z" fill="#dede00"/>
<path d="M656.3 316.5L667.3 319.1L663.1 323.3L652.2 320.7z" fill="#e5e500"/>
<path d="M713.3 272.6L724.7 274.8L720.5 279.1L709.1 276.8z" fill="#686800"/>
<path d="M709.1 276.8L720.5 279.1L716.2 283.3L704.9 281z" fill="#767600"/>
<path d="M704.9 281L716.2 283.3L712 287.6L700.8 285.3z" fill="#848400"/>
<path d="M700.8 285.3L712 287.6L707.8 291.9L696.6 289.5z" fill="#919100"/>
<path d="M696.6 289.5L707.8 291.9L703.6 296.1L692.4 293.7z" fill="#9e9e00"/>
<path d="M692.4 293.7L703.6 296.1L699.4 300.4L688.2 297.9z" fill="#abab00"/>
<path d="M688.2 297.9L699.4 300.4L695.1 304.6L684 302.2z" fill="#b7b700"/>
<path d="M684 302.2L695.1 304.6L690.9 308.9L679.8 306.4z" fill="#c2c200"/>
<path d="M679.8 306.4L690.9 308.9L686.7 313.2L675.6 310.6z" fill="#cccc00"/>
<path d="M675.6 310.6L686.7 313.2L682.5 317.4L671.5 314.9z" fill="#d5d500"/>
<path d="M671.5 314.9L682.5 317.4L678.2 321.7L667.3 319.1z" fill="#dddd00"/>
<path d="M667.3 319.1L678.2 321.7L674 326L663.1 323.3z" fill="#e4e400"/>
<path d="M724.7 274.8L736.1 277L731.8 281.3L720.5 279.1z" fill="#6b6b00"/>
<path d="M720.5 279.1L731.8 281.3L727.6 285.6L716.2 283.3z" fill="#787800"/>
<path d="M716.2 283.3L727.6 285.6L723.3 289.9L712 287.6z" fill="#858500"/>
<path d="M712 287.6L723.3 289.9L719 294.2L707.8 291.9z" fill="#929200"/>
<path d="M707.8 291.9L719 294.2L714.8 298.5L703.6 296.1z" fill="#9e9e00"/>
<path d="M703.6 296.1L714.8 298.5L710.5 302.8L699.4 300.4z" fill="#aaaa00"/>
<path d="M699.4 300.4L710.5 302.8L706.2 307.1L695.1 304.6z" fill="#b6b600"/>
<path d="M695.1 304.6L706.2 307.1L702 311.4L690.9 308.9z" fill="#c0c000"/>
<path d="M690.9 308.9L702 311.4L697.7 315.7L686.7 313.2z" fill="#caca00"/>
<path d="M686.7 313.2L697.7 315.7L693.4 320L682.5 317.4z" fill="#d3d300"/>
<path d="M682.5 317.4L693.4 320L689.2 324.3L678.2 321.7z" fill="#dbdb00"/>
<path d="M678.2 321.7L689.2 324.3L684.9 328.6L674 326z" fill="#e2e200"/>
<path d="M736.1 277L747.5 279.2L743.2 283.6L731.8 281.3z" fill="#6d6d00"/>
<path d="M731.8 281.3L743.2 283.6L738.9 287.9L727.6 285.6z" fill="#797900"/>
<path d="M727.6 285.6L738.9 287.9L734.6 292.2L723.3 289.9z" fill="#868600"/>
<path d="M723.3 289.9L734.6 292.2L730.3 296.6L719 294.2z" fill="#929200"/>
<path d="M719 294.2L730.3 296.6L726 300.9L714.8 298.5z" fill="#9e9e00"/>
<path d="M714.8 298.5L726 300.9L721.6 305.2L710.5 302.8z" fill="#a9a900"/>
<path d="M710.5 302.8L721.6 305.2L717.3 309.6L706.2 307.1z" fill="#b4b400"/>
<path d="M706.2 307.1L717.3 309.6L713 313.9L702 311.4z" fill="#bebe00"/>
<path d="M702 311.4L713 313.9L708.7 318.2L697.7 315.7z" fill="#c7c700"/>
<path d="M697.7 315.7L708.7 318.2L704.4 322.6L693.4 320z" fill="#d0d000"/>
<path d="M693.4 320L704.4 322.6L700.1 326.9L689.2 324.3z" fill="#d8d800"/>
<path d="M689.2 324.3L700.1 326.9L695.8 331.2L684.9 328.6z" fill="#dede00"/>
<path d="M747.5 279.2L758.9 281.5L754.5 285.8L743.2 283.6z" fill="#6e6e00"/>
<path d="M743.2 283.6L754.5 285.8L750.2 290.2L738.9 287.9z" fill="#7a7a00"/>
<path d="M738.9 287.9L750.2 290.2L745.9 294.6L734.6 292.2z" fill="#868600"/>
<path d="M734.6 292.2L745.9 294.6L741.5 298.9L730.3 296.6z" fill="#919100"/>
<path d="M730.3 296.6L741.5 298.9L737.1 303.3L726 300.9z" fill="#9c9c00"/>
<path d="M726 300.9L737.1 303.3L732.8 307.7L721.6 305.2z" fill="#a7a700"/>
<path d="M721.6 305.2L732.8 307.7L728.5 312L717.3 309.6z" fill="#b1b100"/>
<path d="M717.3 309.6L728.5 312L724.1 316.4L713 313.9z" fill="#bbbb00"/>
<path d="M713 313.9L724.1 316.4L719.8 320.8L708.7 318.2z" fill="#c4c400"/>
<path d="M708.7 318.2L719.8 320.8L715.4 325.1L704.4 322.6z" fill="#cccc00"/>
<path d="M704.4 322.6L715.4 325.1L711.1 329.5L700.1 326.9z" fill="#d4d400"/>
<path d="M700.1 326.9L711.1 329.5L706.7 333.9L695.8 331.2z" fill="#dbdb00"/>
<path d="M758.9 281.5L770.3 283.7L765.9 288.1L754.5 285.8z" fill="#6f6f00"/>
<path d="M754.5 285.8L765.9 288.1L761.5 292.5L750.2 290.2z" fill="#7a7a00"/>
<path d="M750.2 290.2L761.5 292.5L757.1 296.9L745.9 294.6z" fill="#858500"/>
<path d="M745.9 294.6L757.1 296.9L752.7 301.3L741.5 298.9z" fill="#909000"/>
<path d="M741.5 298.9L752.7 301.3L748.3 305.7L737.1 303.3z" fill="#9a9a00"/>
<path d="M737.1 303.3L748.3 305.7L744 310.1L732.8 307.7z" fill="#a4a400"/>
<path d="M732.8 307.7L744 310.1L739.6 314.5L728.5 312z" fill="#aeae00"/>
<path d="M728.5 312L739.6 314.5L735.2 318.9L724.1 316.4z" fill="#b7b700"/>
<path d="M724.1 316.4L735.2 318.9L730.8 323.3L719.8 320.8z" fill="#c0c000"/>
<path d="M719.8 320.8L730.8 323.3L726.4 327.7L715.4 325.1z" fill="#c8c800"/>
<path d="M715.4 325.1L726.4 327.7L722 332.1L711.1 329.5z" fill="#d0d000"/>
<path d="M711.1 329.5L722 332.1L717.6 336.5L706.7 333.9z" fill="#d6d600"/>
<path d="M770.3 283.7L781.7 285.9L777.3 290.3L765.9 288.1z" fill="#707000"/>
<path d="M765.9 288.1L777.3 290.3L772.8 294.8L761.5 292.5z" fill="#7a7a00"/>
<path d="M761.5 292.5L772.8 294.8L768.4 299.2L757.1 296.9z" fill="#848400"/>
<path d="M757.1 296.9L768.4 299.2L764 303.6L752.7 301.3z" fill="#8e8e00"/>
<path d="M752.7 301.3L764 303.6L759.5 308.1L748.3 305.7z" fill="#989800"/>
<path d="M748.3 305.7L759.5 308.1L755.1 312.5L744 310.1z" fill="#a1a100"/>
<path d="M744 310.1L755.1 312.5L750.7 317L739.6 314.5z" fill="#abab00"/>
<path d="M739.6 314.5L750.7 317L746.2 321.4L735.2 318.9z" fill="#b3b300"/>
<path d="M735.2 318.9L746.2 321.4L741.8 325.8L730.8 323.3z" fill="#bcbc00"/>
<path d="M730.8 323.3L741.8 325.8L737.4 330.3L726.4 327.7z" fill="#c3c300"/>
<path d="M726.4 327.7L737.4 330.3L732.9 334.7L722 332.1z" fill="#cbcb00"/>
<path d="M722 332.1L732.9 334.7L728.5 339.2L717.6 336.5z" fill="#d1d100"/>
<path d="M781.7 285.9L793.1 288.1L788.6 292.6L777.3 290.3z" fill="#707000"/>
<path d="M777.3 290.3L788.6 292.6L784.1 297.1L772.8 294.8z" fill="#797900"/>
<path d="M772.8 294.8L784.1 297.1L779.7 301.5L768.4 299.2z" fill="#838300"/>
<path d="M768.4 299.2L779.7 301.5L775.2 306L764 303.6z" fill="#8c8c00"/>
<path d="M764 303.6L775.2 306L770.7 310.5L759.5 308.1z" fill="#959500"/>
<path d="M759.5 308.1L770.7 310.5L766.2 315L755.1 312.5z" fill="#9e9e00"/>
<path d="M755.1 312.5L766.2 315L761.8 319.4L750.7 317z" fill="#a7a700"/>
<path d="M750.7 317L761.8 319.4L757.3 323.9L746.2 321.4z" fill="#afaf00"/>
<path d="M746.2 321.4L757.3 323.9L752.8 328.4L741.8 325.8z" fill="#b7b700"/>
<path d="M741.8 325.8L752.8 328.4L748.4 332.9L737.4 330.3z" fill="#bebe00"/>
<path d="M737.4 330.3L748.4 332.9L743.9 337.3L732.9 334.7z" fill="#c5c500"/>
<path d="M732.9 334.7L743.9 337.3L739.4 341.8L728.5 339.2z" fill="#cccc00"/>
<path d="M488.5 308.3L498.5 308.4L497.4 319.5L487.3 319.3z" fill="#a7a700"/>
<path d="M487.3 319.3L497.4 319.5L496.2 330.6L486 330.2z" fill="#a8a800"/>
<path d="M486 330.2L496.2 330.6L495 341.7L484.8 341.2z" fill="#a8a800"/>
<path d="M484.8 341.2L495 341.7L493.9 352.8L483.5 352.1z" fill="#a7a700"/>
<path d="M483.5 352.1L493.9 352.8L492.7 363.9L482.3 363.1z" fill="#a6a600"/>
<path d="M482.3 363.1L492.7 363.9L491.6 375L481.1 374.1z" fill="#a5a500"/>
<path d="M481.1 374.1L491.6 375L490.4 386.1L479.8 385z" fill="#a3a300"/>
<path d="M479.8 385L490.4 386.1L489.3 397.2L478.6 396z" fill="#a1a100"/>
<path d="M478.6 396L489.3 397.2L488.1 408.3L477.3 406.9z" fill="#9e9e00"/>
<path d="M477.3 406.9L488.1 408.3L486.9 419.4L476.1 417.9z" fill="#9b9b00"/>
<path d="M476.1 417.9L486.9 419.4L485.8 430.5L474.8 428.8z" fill="#989800"/>
<path d="M474.8 428.8L485.8 430.5L484.6 441.6L473.6 439.8z" fill="#949400"/>
<path d="M498.5 308.4L508.5 308.6L507.4 319.8L497.4 319.5z" fill="#aeae00"/>
<path d="M497.4 319.5L507.4 319.8L506.4 331.1L496.2 330.6z" fill="#afaf00"/>
<path d="M496.2 330.6L506.4 331.1L505.3 342.3L495 341.7z" fill="#b0b000"/>
<path d="M495 341.7L505.3 342.3L504.2 353.5L493.9 352.8z" fill="#b0b000"/>
<path d="M493.9 352.8L504.2 353.5L503.2 364.7L492.7 363.9z" fill="#b0b000"/>
<path d="M492.7 363.9L503.2 364.7L502.1 376L491.6 375z" fill="#afaf00"/>
<path d="M491.6 375L502.1 376L501 387.2L490.4 386.1z" fill="#aeae00"/>
<path d="M490.4 386.1L501 387.2L499.9 398.4L489.3 397.2z" fill="#acac00"/>
<path d="M489.3 397.2L499.9 398.4L498.9 409.7L488.1 408.3z" fill="#aaaa00"/>
<path d="M488.1 408.3L498.9 409.7L497.8 420.9L486.9 419.4z" fill="#a7a700"/>
<path d="M486.9 419.4L497.8 420.9L496.7 432.1L485.8 430.5z" fill="#a4a400"/>
<path d="M485.8 430.5L496.7 432.1L495.7 443.3L484.6 441.6z" fill="#a0a000"/>
<path d="M508.5 308.6L518.5 308.8L517.5 320.1L507.4 319.8z" fill="#b5b500"/>
<path d="M507.4 319.8L517.5 320.1L516.5 331.5L506.4 331.1z" fill="#b7b700"/>
<path d="M506.4 331.1L516.5 331.5L515.6 342.8L505.3 342.3z" fill="#b8b800"/>
<path d="M505.3 342.3L515.6 342.8L514.6 354.2L504.2 353.5z" fill="#b9b900"/>
<path d="M504.2 353.5L514.6 354.2L513.6 365.6L503.2 364.7z" fill="#b9b900"/>
<path d="M503.2 364.7L513.6 365.6L512.6 376.9L502.1 376z" fill="#b9b900"/>
<path d="M502.1 376L512.6 376.9L511.6 388.3L501 387.2z" fill="#b8b800"/>
<path d="M501 387.2L511.6 388.3L510.6 399.6L499.9 398.4z" fill="#b7b700"/>
<path d="M499.9 398.4L510.6 399.6L509.6 411L498.9 409.7z" fill="#b5b500"/>
<path d="M498.9 409.7L509.6 411L508.6 422.4L497.8 420.9z" fill="#b2b200"/>
<path d="M497.8 420.9L508.6 422.4L507.7 433.7L496.7 432.1z" fill="#afaf00"/>
<path d="M496.7 432.1L507.7 433.7L506.7 445.1L495.7 443.3z" fill="#acac00"/>
<path d="M518.5 308.8L528.5 308.9L527.6 320.4L517.5 320.1z" fill="#bcbc00"/>
<path d="M517.5 320.1L527.6 320.4L526.7 331.9L516.5 331.5z" fill="#bebe00"/>
<path d="M516.5 331.5L526.7 331.9L525.8 343.4L515.6 342.8z" fill="#c0c000"/>
<path d="M515.6 342.8L525.8 343.4L524.9 354.9L514.6 354.2z" fill="#c2c200"/>
<path d="M514.6 354.2L524.9 354.9L524 366.4L513.6 365.6z" fill="#c3c300"/>
<path d="M513.6 365.6L524 366.4L523.1 377.9L512.6 376.9z" fill="#c3c300"/>
<path d="M512.6 376.9L523.1 377.9L522.2 389.4L511.6 388.3z" fill="#c2c200"/>
<path d="M511.6 388.3L522.2 389.4L521.3 400.9L510.6 399.6z" fill="#c1c100"/>
<path d="M510.6 399.6L521.3 400.9L520.4 412.4L509.6 411z" fill="#c0c000"/>
<path d="M509.6 411L520.4 412.4L519.5 423.9L508.6 422.4z" fill="#bdbd00"/>
<path d="M508.6 422.4L519.5 423.9L518.6 435.4L507.7 433.7z" fill="#baba00"/>
<path d="M507.7 433.7L518.6 435.4L517.7 446.9L506.7 445.1z" fill="#b7b700"/>
<path d="M528.5 308.9L538.5 309.1L537.7 320.7L527.6 320.4z" fill="#c3c300"/>
<path d="M527.6 320.4L537.7 320.7L536.9 332.3L526.7 331.9z" fill="#c5c500"/>
<path d="M526.7 331.9L536.9 332.3L536.1 343.9L525.8 343.4z" fill="#c8c800"/>
<path d="M525.8 343.4L536.1 343.9L535.3 355.6L524.9 354.9z" fill="#caca00"/>
<path d="M524.9 354.9L535.3 355.6L534.5 367.2L524 366.4z" fill="#cbcb00"/>
<path d="M524 366.4L534.5 367.2L533.6 378.8L523.1 377.9z" fill="#cccc00"/>
<path d="M523.1 377.9L533.6 378.8L532.8 390.5L522.2 389.4z" fill="#cccc00"/>
<path d="M522.2 389.4L532.8 390.5L532 402.1L521.3 400.9z" fill="#cbcb00"/>
<path d="M521.3 400.9L532 402.1L531.2 413.7L520.4 412.4z" fill="#caca00"/>
<path d="M520.4 412.4L531.2 413.7L530.4 425.4L519.5 423.9z" fill="#c8c800"/>
<path d="M519.5 423.9L530.4 425.4L529.5 437L518.6 435.4z" fill="#c5c500"/>
<path d="M518.6 435.4L529.5 437L528.7 448.6L517.7 446.9z" fill="#c2c200"/>
<path d="M538.5 309.1L548.5 309.2L547.8 321L537.7 320.7z" fill="#c9c900"/>
<path d="M537.7 320.7L547.8 321L547.1 332.7L536.9 332.3z" fill="#cccc00"/>
<path d="M536.9 332.3L547.1 332.7L546.3 344.5L536.1 343.9z" fill="#cfcf00"/>
<path d="M536.1 343.9L546.3 344.5L545.6 356.3L535.3 355.6z" fill="#d1d100"/>
<path d="M535.3 355.6L545.6 356.3L544.9 368L534.5 367.2z" fill="#d3d300"/>
<path d="M534.5 367.2L544.9 368L544.1 379.8L533.6 378.8z" fill="#d4d400"/>
<path d="M533.6 378.8L544.1 379.8L543.4 391.6L532.8 390.5z" fill="#d5d500"/>
<path d="M532.8 390.5L543.4 391.6L542.7 403.3L532 402.1z" fill="#d4d400"/>
<path d="M532 402.1L542.7 403.3L542 415.1L531.2 413.7z" fill="#d3d300"/>
<path d="M531.2 413.7L542 415.1L541.2 426.9L530.4 425.4z" fill="#d1d100"/>
<path d="M530.4 425.4L541.2 426.9L540.5 438.6L529.5 437z" fill="#cfcf00"/>
<path d="M529.5 437L540.5 438.6L539.8 450.4L528.7 448.6z" fill="#cccc00"/>
<path d="M548.5 309.2L558.6 309.4L557.9 321.3L547.8 321z" fill="#cece00"/>
<path d="M547.8 321L557.9 321.3L557.3 333.2L547.1 332.7z" fill="#d2d200"/>
<path d="M547.1 332.7L557.3 333.2L556.6 345.1L546.3 344.5z" fill="#d6d600"/>
<path d="M546.3 344.5L556.6 345.1L556 357L545.6 356.3z" fill="#d8d800"/>
<path d="M545.6 356.3L556 357L555.3 368.9L544.9 368z" fill="#dbdb00"/>
<path d="M544.9 368L555.3 368.9L554.7 380.8L544.1 379.8z" fill="#dcdc00"/>
<path d="M544.1 379.8L554.7 380.8L554 392.7L543.4 391.6z" fill="#dddd00"/>
<path d="M543.4 391.6L554 392.7L553.4 404.6L542.7 403.3z" fill="#dddd00"/>
<path d="M542.7 403.3L553.4 404.6L552.7 416.5L542 415.1z" fill="#dcdc00"/>
<path d="M542 415.1L552.7 416.5L552.1 428.4L541.2 426.9z" fill="#dada00"/>
<path d="M541.2 426.9L552.1 428.4L551.4 440.3L540.5 438.6z" fill="#d8d800"/>
<path d="M540.5 438.6L551.4 440.3L550.8 452.2L539.8 450.4z" fill="#d5d500"/>
<path d="M558.6 309.4L568.6 309.5L568 321.5L557.9 321.3z" fill="#d3d300"/>
<path d="M557.9 321.3L568 321.5L567.4 333.6L557.3 333.2z" fill="#d8d800"/>
<path d="M557.3 333.2L567.4 333.6L566.9 345.6L556.6 345.1z" fill="#dbdb00"/>
<path d="M556.6 345.1L566.9 345.6L566.3 357.6L556 357z" fill="#dfdf00"/>
<path d="M556 357L566.3 357.6L565.7 369.7L555.3 368.9z" fill="#e1e100"/>
<path d="M555.3 368.9L565.7 369.7L565.2 381.7L554.7 380.8z" fill="#e3e300"/>
<path d="M554.7 380.8L565.2 381.7L564.6 393.8L554 392.7z" fill="#e4e400"/>
<path d="M554 392.7L564.6 393.8L564.1 405.8L553.4 404.6z" fill="#e5e500"/>
<path d="M553.4 404.6L564.1 405.8L563.5 417.8L552.7 416.5z" fill="#e4e400"/>
<path d="M552.7 416.5L563.5 417.8L562.9 429.9L552.1 428.4z" fill="#e2e200"/>
<path d="M552.1 428.4L562.9 429.9L562.4 441.9L551.4 440.3z" fill="#e0e000"/>
<path d="M551.4 440.3L562.4 441.9L561.8 453.9L550.8 452.2z" fill="#dddd00"/>
<path d="M568.6 309.5L578.6 309.7L578.1 321.8L568 321.5z" fill="#d8d800"/>
<path d="M568 321.5L578.1 321.8L577.6 334L567.4 333.6z" fill="#dcdc00"/>
<path d="M567.4 333.6L577.6 334L577.1 346.2L566.9 345.6z" fill="#e1e100"/>
<path d="M566.9 345.6L577.1 346.2L576.7 358.3L566.3 357.6z" fill="#e4e400"/>
<path d="M566.3 357.6L576.7 358.3L576.2 370.5L565.7 369.7z" fill="#e7e700"/>
<path d="M565.7 369.7L576.2 370.5L575.7 382.7L565.2 381.7z" fill="#eaea00"/>
<path d="M565.2 381.7L575.7 382.7L575.2 394.8L564.6 393.8z" fill="#ebeb00"/>
<path d="M564.6 393.8L575.2 394.8L574.7 407L564.1 405.8z" fill="#ebeb00"/>
<path d="M564.1 405.8L574.7 407L574.3 419.2L563.5 417.8z" fill="#ebeb00"/>
<path d="M563.5 417.8L574.3 419.2L573.8 431.4L562.9 429.9z" fill="#e9e900"/>
<path d="M562.9 429.9L573.8 431.4L573.3 443.5L562.4 441.9z" fill="#e7e700"/>
<path d="M562.4 441.9L573.3 443.5L572.8 455.7L561.8 453.9z" fill="#e4e400"/>
<path d="M578.6 309.7L588.6 309.8L588.2 322.1L578.1 321.8z" fill="#dcdc00"/>
<path d="M578.1 321.8L588.2 322.1L587.8 334.4L577.6 334z" fill="#e1e100"/>
<path d="M577.6 334L587.8 334.4L587.4 346.7L577.1 346.2z" fill="#e5e500"/>
<path d="M577.1 346.2L587.4 346.7L587 359L576.7 358.3z" fill="#e9e900"/>
<path d="M576.7 358.3L587 359L586.6 371.3L576.2 370.5z" fill="#eded00"/>
<path d="M576.2 370.5L586.6 371.3L586.2 383.6L575.7 382.7z" fill="#efef00"/>
<path d="M575.7 382.7L586.2 383.6L585.8 395.9L575.2 394.8z" fill="#f0f000"/>
<path d="M575.2 394.8L585.8 395.9L585.4 408.2L574.7 407z" fill="#f1f100"/>
<path d="M574.7 407L585.4 408.2L585 420.6L574.3 419.2z" fill="#f0f000"/>
<path d="M574.3 419.2L585 420.6L584.6 432.9L573.8 431.4z" fill="#efef00"/>
<path d="M573.8 431.4L584.6 432.9L584.2 445.2L573.3 443.5z" fill="#eded00"/>
<path d="M573.3 443.5L584.2 445.2L583.9 457.5L572.8 455.7z" fill="#eaea00"/>
<path d="M588.6 309.8L598.6 310L598.3 322.4L588.2 322.1z" fill="#dfdf00"/>
<path d="M588.2 322.1L598.3 322.4L598 334.8L587.8 334.4z" fill="#e5e500"/>
<path d="M587.8 334.4L598 334.8L597.7 347.3L587.4 346.7z" fill="#e9e900"/>
<path d="M587.4 346.7L597.7 347.3L597.4 359.7L587 359z" fill="#eded00"/>
<path d="M587 359L597.4 359.7L597 372.2L586.6 371.3z" fill="#f1f100"/>
<path d="M586.6 371.3L597 372.2L596.7 384.6L586.2 383.6z" fill="#f3f300"/>
<path d="M586.2 383.6L596.7 384.6L596.4 397L585.8 395.9z" fill="#f5f500"/>
<path d="M585.8 395.9L596.4 397L596.1 409.5L585.4 408.2z" fill="#f5f500"/>
<path d="M585.4 408.2L596.1 409.5L595.8 421.9L585 420.6z" fill="#f5f500"/>
<path d="M585 420.6L595.8 421.9L595.5 434.4L584.6 432.9z" fill="#f4f400"/>
<path d="M584.6 432.9L595.5 434.4L595.2 446.8L584.2 445.2z" fill="#f2f200"/>
<path d="M584.2 445.2L595.2 446.8L594.9 459.2L583.9 457.5z" fill="#efef00"/>
<path d="M598.6 310L608.6 310.1L608.4 322.7L598.3 322.4z" fill="#e2e200"/>
<path d="M598.3 322.4L608.4 322.7L608.1 335.2L598 334.8z" fill="#e8e800"/>
<path d="M598 334.8L608.1 335.2L607.9 347.8L597.7 347.3z" fill="#eded00"/>
<path d="M597.7 347.3L607.9 347.8L607.7 360.4L597.4 359.7z" fill="#f1f100"/>
<path d="M597.4 359.7L607.7 360.4L607.5 373L597 372.2z" fill="#f4f400"/>
<path d="M597 372.2L607.5 373L607.2 385.6L596.7 384.6z" fill="#f7f700"/>
<path d="M596.7 384.6L607.2 385.6L607 398.1L596.4 397z" fill="#f8f800"/>
<path d="M596.4 397L607 398.1L606.8 410.7L596.1 409.5z" fill="#f9f900"/>
<path d="M596.1 409.5L606.8 410.7L606.6 423.3L595.8 421.9z" fill="#f9f900"/>
<path d="M595.8 421.9L606.6 423.3L606.4 435.9L595.5 434.4z" fill="#f7f700"/>
<path d="M595.5 434.4L606.4 435.9L606.1 448.4L595.2 446.8z" fill="#f5f500"/>
<path d="M595.2 446.8L606.1 448.4L605.9 461L594.9 459.2z" fill="#f2f200"/>
<path d="M608.6 310.1L619.5 312.7L619.4 325.2L608.4 322.7z" fill="#e5e500"/>
<path d="M608.4 322.7L619.4 325.2L619.3 337.6L608.1 335.2z" fill="#eaea00"/>
<path d="M608.1 335.2L619.3 337.6L619.2 350L607.9 347.8z" fill="#efef00"/>
<path d="M607.9 347.8L619.2 350L619.2 362.5L607.7 360.4z" fill="#f4f400"/>
<path d="M607.7 360.4L619.2 362.5L619.1 374.9L607.5 373z" fill="#f7f700"/>
<path d="M607.5 373L619.1 374.9L619 387.3L607.2 385.6z" fill="#fafa00"/>
<path d="M607.2 385.6L619 387.3L618.9 399.8L607 398.1z" fill="#fbfb00"/>
<path d="M607 398.1L618.9 399.8L618.8 412.2L606.8 410.7z" fill="#fcfc00"/>
<path d="M606.8 410.7L618.8 412.2L618.7 424.6L606.6 423.3z" fill="#fbfb00"/>
<path d="M606.6 423.3L618.7 424.6L618.6 437.1L606.4 435.9z" fill="#fafa00"/>
<path d="M606.4 435.9L618.6 437.1L618.6 449.5L606.1 448.4z" fill="#f8f800"/>
<path d="M606.1 448.4L618.6 449.5L618.5 461.9L605.9 461z" fill="#f5f500"/>
<path d="M619.5 312.7L630.4 315.4L630.5 327.7L619.4 325.2z" fill="#e7e700"/>
<path d="M619.4 325.2L630.5 327.7L630.5 340L619.3 337.6z" fill="#eded00"/>
<path d="M619.3 337.6L630.5 340L630.6 352.3L619.2 350z" fill="#f2f200"/>
<path d="M619.2 350L630.6 352.3L630.6 364.6L619.2 362.5z" fill="#f6f600"/>
<path d="M619.2 362.5L630.6 364.6L630.7 376.8L619.1 374.9z" fill="#f9f900"/>
<path d="M619.1 374.9L630.7 376.8L630.7 389.1L619 387.3z" fill="#fcfc00"/>
<path d="M619 387.3L630.7 389.1L630.8 401.4L618.9 399.8z" fill="#fdfd00"/>
<path d="M618.9 399.8L630.8 401.4L630.8 413.7L618.8 412.2z" fill="#fefe00"/>
<path d="M618.8 412.2L630.8 413.7L630.9 426L618.7 424.6z" fill="#fdfd00"/>
<path d="M618.7 424.6L630.9 426L630.9 438.3L618.6 437.1z" fill="#fcfc00"/>
<path d="M618.6 437.1L630.9 438.3L631 450.6L618.6 449.5z" fill="#f9f900"/>
<path d="M618.6 449.5L631 450.6L631 462.9L618.5 461.9z" fill="#f6f600"/>
<path d="M630.4 315.4L641.3 318L641.5 330.2L630.5 327.7z" fill="#e9e900"/>
<path d="M630.5 327.7L641.5 330.2L641.7 342.3L630.5 340z" fill="#efef00"/>
<path d="M630.5 340L641.7 342.3L641.9 354.5L630.6 352.3z" fill="#f3f300"/>
<path d="M630.6 352.3L641.9 354.5L642.1 366.6L630.6 364.6z" fill="#f8f800"/>
<path d="M630.6 364.6L642.1 366.6L642.3 378.8L630.7 376.8z" fill="#fbfb00"/>
<path d="M630.7 376.8L642.3 378.8L642.5 390.9L630.7 389.1z" fill="#fdfd00"/>
<path d="M630.7 389.1L642.5 390.9L642.7 403.1L630.8 401.4z" fill="#fefe00"/>
<path d="M630.8 401.4L642.7 403.1L642.9 415.2L630.8 413.7z" fill="#ffff00"/>
<path d="M630.8 413.7L642.9 415.2L643 427.4L630.9 426z" fill="#fefe00"/>
<path d="M630.9 426L643 427.4L643.2 439.5L630.9 438.3z" fill="#fcfc00"/>
<path d="M630.9 438.3L643.2 439.5L643.4 451.7L631 450.6z" fill="#fafa00"/>
<path d="M631 450.6L643.4 451.7L643.6 463.8L631 462.9z" fill="#f7f700"/>
<path d="M641.3 318L652.2 320.7L652.5 332.7L641.5 330.2z" fill="#eaea00"/>
<path d="M641.5 330.2L652.5 332.7L652.9 344.7L641.7 342.3z" fill="#f0f000"/>
<path d="M641.7 342.3L652.9 344.7L653.2 356.7L641.9 354.5z" fill="#f4f400"/>
<path d="M641.9 354.5L653.2 356.7L653.5 368.7L642.1 366.6z" fill="#f8f800"/>
<path d="M642.1 366.6L653.5 368.7L653.9 380.7L642.3 378.8z" fill="#fbfb00"/>
<path d="M642.3 378.8L653.9 380.7L654.2 392.7L642.5 390.9z" fill="#fefe00"/>
<path d="M642.5 390.9L654.2 392.7L654.5 404.7L642.7 403.1z" fill="#ffff00"/>
<path d="M642.7 403.1L654.5 404.7L654.9 416.7L642.9 415.2z" fill="#ffff00"/>
<path d="M642.9 415.2L654.9 416.7L655.2 428.7L643 427.4z" fill="#fefe00"/>
<path d="M643 427.4L655.2 428.7L655.5 440.8L643.2 439.5z" fill="#fcfc00"/>
<path d="M643.2 439.5L655.5 440.8L655.9 452.8L643.4 451.7z" fill="#fafa00"/>
<path d="M643.4 451.7L655.9 452.8L656.2 464.8L643.6 463.8z" fill="#f7f700"/>
<path d="M652.2 320.7L663.1 323.3L663.6 335.2L652.5 332.7z" fill="#ebeb00"/>
<path d="M652.5 332.7L663.6 335.2L664 347L652.9 344.7z" fill="#f0f000"/>
<path d="M652.9 344.7L664 347L664.5 358.9L653.2 356.7z" fill="#f4f400"/>
<path d="M653.2 356.7L664.5 358.9L665 370.8L653.5 368.7z" fill="#f8f800"/>
<path d="M653.5 368.7L665 370.8L665.5 382.6L653.9 380.7z" fill="#fbfb00"/>
<path d="M653.9 380.7L665.5 382.6L665.9 394.5L654.2 392.7z" fill="#fdfd00"/>
<path d="M654.2 392.7L665.9 394.5L666.4 406.4L654.5 404.7z" fill="#fefe00"/>
<path d="M654.5 404.7L666.4 406.4L666.9 418.2L654.9 416.7z" fill="#fefe00"/>
<path d="M654.9 416.7L666.9 418.2L667.4 430.1L655.2 428.7z" fill="#fdfd00"/>
<path d="M655.2 428.7L667.4 430.1L667.8 442L655.5 440.8z" fill="#fbfb00"/>
<path d="M655.5 440.8L667.8 442L668.3 453.8L655.9 452.8z" fill="#f9f900"/>
<path d="M655.9 452.8L668.3 453.8L668.8 465.7L656.2 464.8z" fill="#f5f500"/>
<path d="M663.1 323.3L674 326L674.6 337.7L663.6 335.2z" fill="#eaea00"/>
<path d="M663.6 335.2L674.6 337.7L675.2 349.4L664 347z" fill="#efef00"/>
<path d="M664 347L675.2 349.4L675.8 361.1L664.5 358.9z" fill="#f4f400"/>
<path d="M664.5 358.9L675.8 361.1L676.4 372.9L665 370.8z" fill="#f7f700"/>
<path d="M665 370.8L676.4 372.9L677.1 384.6L665.5 382.6z" fill="#fafa00"/>
<path d="M665.5 382.6L677.1 384.6L677.7 396.3L665.9 394.5z" fill="#fcfc00"/>
<path d="M665.9 394.5L677.7 396.3L678.3 408L666.4 406.4z" fill="#fcfc00"/>
<path d="M666.4 406.4L678.3 408L678.9 419.8L666.9 418.2z" fill="#fcfc00"/>
<path d="M666.9 418.2L678.9 419.8L679.5 431.5L667.4 430.1z" fill="#fbfb00"/>
<path d="M667.4 430.1L679.5 431.5L680.1 443.2L667.8 442z" fill="#fafa00"/>
<path d="M667.8 442L680.1 443.2L680.7 454.9L668.3 453.8z" fill="#f7f700"/>
<path d="M668.3 453.8L680.7 454.9L681.3 466.6L668.8 465.7z" fill="#f3f300"/>
<path d="M674 326L684.9 328.6L685.7 340.2L674.6 337.7z" fill="#e9e900"/>
<path d="M674.6 337.7L685.7 340.2L686.4 351.8L675.2 349.4z" fill="#eeee00"/>
<path d="M675.2 349.4L686.4 351.8L687.2 363.3L675.8 361.1z" fill="#f2f200"/>
<path d="M675.8 361.1L687.2 363.3L687.9 374.9L676.4 372.9z" fill="#f5f500"/>
<path d="M676.4 372.9L687.9 374.9L688.7 386.5L677.1 384.6z" fill="#f8f800"/>
<path d="M677.1 384.6L688.7 386.5L689.4 398.1L677.7 396.3z" fill="#f9f900"/>
<path d="M677.7 396.3L689.4 398.1L690.2 409.7L678.3 408z" fill="#fafa00"/>
<path d="M678.3 408L690.2 409.7L690.9 421.3L678.9 419.8z" fill="#fafa00"/>
<path d="M678.9 419.8L690.9 421.3L691.7 432.8L679.5 431.5z" fill="#f9f900"/>
<path d="M679.5 431.5L691.7 432.8L692.4 444.4L680.1 443.2z" fill="#f7f700"/>
<path d="M680.1 443.2L692.4 444.4L693.2 456L680.7 454.9z" fill="#f4f400"/>
<path d="M680.7 454.9L693.2 456L693.9 467.6L681.3 466.6z" fill="#f0f000"/>
<path d="M684.9 328.6L695.8 331.2L696.7 342.7L685.7 340.2z" fill="#e8e800"/>
<path d="M685.7 340.2L696.7 342.7L697.6 354.1L686.4 351.8z" fill="#ecec00"/>
<path d="M686.4 351.8L697.6 354.1L698.5 365.6L687.2 363.3z" fill="#efef00"/>
<path d="M687.2 363.3L698.5 365.6L699.4 377L687.9 374.9z" fill="#f2f200"/>
<path d="M687.9 374.9L699.4 377L700.3 388.4L688.7 386.5z" fill="#f5f500"/>
<path d="M688.7 386.5L700.3 388.4L701.1 399.9L689.4 398.1z" fill="#f6f600"/>
<path d="M689.4 398.1L701.1 399.9L702 411.3L690.2 409.7z" fill="#f6f600"/>
<path d="M690.2 409.7L702 411.3L702.9 422.8L690.9 421.3z" fill="#f6f600"/>
<path d="M690.9 421.3L702.9 422.8L703.8 434.2L691.7 432.8z" fill="#f5f500"/>
<path d="M691.7 432.8L703.8 434.2L704.7 445.7L692.4 444.4z" fill="#f3f300"/>
<path d="M692.4 444.4L704.7 445.7L705.6 457.1L693.2 456z" fill="#f0f000"/>
<path d="M693.2 456L705.6 457.1L706.5 468.5L693.9 467.6z" fill="#eded00"/>
<path d="M695.8 331.2L706.7 333.9L707.7 345.2L696.7 342.7z" fill="#e5e500"/>
<path d="M696.7 342.7L707.7 345.2L708.8 356.5L697.6 354.1z" fill="#e9e900"/>
<path d="M697.6 354.1L708.8 356.5L709.8 367.8L698.5 365.6z" fill="#ecec00"/>
<path d="M698.5 365.6L709.8 367.8L710.8 379.1L699.4 377z" fill="#efef00"/>
<path d="M699.4 377L710.8 379.1L711.9 390.4L700.3 388.4z" fill="#f1f100"/>
<path d="M700.3 388.4L711.9 390.4L712.9 401.7L701.1 399.9z" fill="#f2f200"/>
<path d="M701.1 399.9L712.9 401.7L713.9 413L702 411.3z" fill="#f2f200"/>
<path d="M702 411.3L713.9 413L714.9 424.3L702.9 422.8z" fill="#f2f200"/>
<path d="M702.9 422.8L714.9 424.3L716 435.6L703.8 434.2z" fill="#f0f000"/>
<path d="M703.8 434.2L716 435.6L717 446.9L704.7 445.7z" fill="#eeee00"/>
<path d="M704.7 445.7L717 446.9L718 458.2L705.6 457.1z" fill="#ebeb00"/>
<path d="M705.6 457.1L718 458.2L719.1 469.5L706.5 468.5z" fill="#e8e800"/>
<path d="M706.7 333.9L717.6 336.5L718.8 347.7L707.7 345.2z" fill="#e2e200"/>
<path d="M707.7 345.2L718.8 347.7L719.9 358.8L708.8 356.5z" fill="#e5e500"/>
<path d="M708.8 356.5L719.9 358.8L721.1 370L709.8 367.8z" fill="#e8e800"/>
<path d="M709.8 367.8L721.1 370L722.3 381.1L710.8 379.1z" fill="#eaea00"/>
<path d="M710.8 379.1L722.3 381.1L723.5 392.3L711.9 390.4z" fill="#ecec00"/>
<path d="M711.9 390.4L723.5 392.3L724.6 403.5L712.9 401.7z" fill="#eded00"/>
<path d="M712.9 401.7L724.6 403.5L725.8 414.6L713.9 413z" fill="#eded00"/>
<path d="M713.9 413L725.8 414.6L727 425.8L714.9 424.3z" fill="#ecec00"/>
<path d="M714.9 424.3L727 425.8L728.1 436.9L716 435.6z" fill="#ebeb00"/>
<path d="M716 435.6L728.1 436.9L729.3 448.1L717 446.9z" fill="#e9e900"/>
<path d="M717 446.9L729.3 448.1L730.5 459.3L718 458.2z" fill="#e6e600"/>
<path d="M718 458.2L730.5 459.3L731.6 470.4L719.1 469.5z" fill="#e3e300"/>
<path d="M717.6 336.5L728.5 339.2L729.8 350.2L718.8 347.7z" fill="#dede00"/>
<path d="M718.8 347.7L729.8 350.2L731.1 361.2L719.9 358.8z" fill="#e1e100"/>
<path d="M719.9 358.8L731.1 361.2L732.4 372.2L721.1 370z" fill="#e4e400"/>
<path d="M721.1 370L732.4 372.2L733.7 383.2L722.3 381.1z" fill="#e5e500"/>
<path d="M722.3 381.1L733.7 383.2L735.1 394.2L723.5 392.3z" fill="#e7e700"/>
<path d="M723.5 392.3L735.1 394.2L736.4 405.3L724.6 403.5z" fill="#e7e700"/>
<path d="M724.6 403.5L736.4 405.3L737.7 416.3L725.8 414.6z" fill="#e7e700"/>
<path d="M725.8 414.6L737.7 416.3L739 427.3L727 425.8z" fill="#e6e600"/>
<path d="M727 425.8L739 427.3L740.3 438.3L728.1 436.9z" fill="#e5e500"/>
<path d="M728.1 436.9L740.3 438.3L741.6 449.3L729.3 448.1z" fill="#e3e300"/>
<path d="M729.3 448.1L741.6 449.3L742.9 460.3L730.5 459.3z" fill="#e0e000"/>
<path d="M730.5 459.3L742.9 460.3L744.2 471.4L731.6 470.4z" fill="#dddd00"/>
<path d="M728.5 339.2L739.4 341.8L740.9 352.7L729.8 350.2z" fill="#dada00"/>
<path d="M729.8 350.2L740.9 352.7L742.3 363.6L731.1 361.2z" fill="#dcdc00"/>
<path d="M731.1 361.2L742.3 363.6L743.8 374.4L732.4 372.2z" fill="#dede00"/>
<path d="M732.4 372.2L743.8 374.4L745.2 385.3L733.7 383.2z" fill="#e0e000"/>
<path d="M733.7 383.2L745.2 385.3L746.6 396.2L735.1 394.2z" fill="#e1e100"/>
<path d="M735.1 394.2L746.6 396.2L748.1 407.1L736.4 405.3z" fill="#e1e100"/>
<path d="M736.4 405.3L748.1 407.1L749.5 417.9L737.7 416.3z" fill="#e1e100"/>
<path d="M737.7 416.3L749.5 417.9L751 428.8L739 427.3z" fill="#e0e000"/>
<path d="M739 427.3L751 428.8L752.4 439.7L740.3 438.3z" fill="#dede00"/>
<path d="M740.3 438.3L752.4 439.7L753.9 450.6L741.6 449.3z" fill="#dcdc00"/>
<path d="M741.6 449.3L753.9 450.6L755.3 461.4L742.9 460.3z" fill="#d9d900"/>
<path d="M742.9 460.3L755.3 461.4L756.8 472.3L744.2 471.4z" fill="#d6d600"/>
<path d="M739.4 341.8L743.9 337.3L745.3 348.2L740.9 352.7z" fill="#caca00"/>
<path d="M740.9 352.7L745.3 348.2L746.7 359.1L742.3 363.6z" fill="#cdcd00"/>
<path d="M742.3 363.6L746.7 359.1L748.1 370.1L743.8 374.4z" fill="#cfcf00"/>
<path d="M743.8 374.4L748.1 370.1L749.5 381L745.2 385.3z" fill="#d1d100"/>
<path d="M745.2 385.3L749.5 381L750.9 391.9L746.6 396.2z" fill="#d2d200"/>
<path d="M746.6 396.2L750.9 391.9L752.3 402.8L748.1 407.1z" fill="#d2d200"/>
<path d="M748.1 407.1L752.3 402.8L753.7 413.7L749.5 417.9z" fill="#d2d200"/>
<path d="M749.5 417.9L753.7 413.7L755.1 424.6L751 428.8z" fill="#d1d100"/>
<path d="M751 428.8L755.1 424.6L756.5 435.5L752.4 439.7z" fill="#cfcf00"/>
<path d="M752.4 439.7L756.5 435.5L757.9 446.5L753.9 450.6z" fill="#cdcd00"/>
<path d="M753.9 450.6L757.9 446.5L759.3 457.4L755.3 461.4z" fill="#caca00"/>
<path d="M755.3 461.4L759.3 457.4L760.6 468.3L756.8 472.3z" fill="#c6c600"/>
<path d="M743.9 337.3L748.4 332.9L749.7 343.8L745.3 348.2z" fill="#c2c200"/>
<path d="M745.3 348.2L749.7 343.8L751 354.8L746.7 359.1z" fill="#c5c500"/>
<path d="M746.7 359.1L751 354.8L752.4 365.7L748.1 370.1z" fill="#c7c700"/>
<path d="M748.1 370.1L752.4 365.7L753.7 376.7L749.5 381z" fill="#c9c900"/>
<path d="M749.5 381L753.7 376.7L755.1 387.6L750.9 391.9z" fill="#cbcb00"/>
<path d="M750.9 391.9L755.1 387.6L756.4 398.6L752.3 402.8z" fill="#cbcb00"/>
<path d="M752.3 402.8L756.4 398.6L757.8 409.5L753.7 413.7z" fill="#cbcb00"/>
<path d="M753.7 413.7L757.8 409.5L759.1 420.4L755.1 424.6z" fill="#caca00"/>
<path d="M755.1 424.6L759.1 420.4L760.5 431.4L756.5 435.5z" fill="#c9c900"/>
<path d="M756.5 435.5L760.5 431.4L761.8 442.4L757.9 446.5z" fill="#c6c600"/>
<path d="M757.9 446.5L761.8 442.4L763.2 453.3L759.3 457.4z" fill="#c3c300"/>
<path d="M759.3 457.4L763.2 453.3L764.5 464.2L760.6 468.3z" fill="#c0c000"/>
<path d="M748.4 332.9L752.8 328.4L754.1 339.4L749.7 343.8z" fill="#b9b900"/>
<path d="M749.7 343.8L754.1 339.4L755.4 350.4L751 354.8z" fill="#bcbc00"/>
<path d="M751 354.8L755.4 350.4L756.7 361.3L752.4 365.7z" fill="#bfbf00"/>
<path d="M752.4 365.7L756.7 361.3L758 372.3L753.7 376.7z" fill="#c1c100"/>
<path d="M753.7 376.7L758 372.3L759.3 383.3L755.1 387.6z" fill="#c3c300"/>
<path d="M755.1 387.6L759.3 383.3L760.6 394.3L756.4 398.6z" fill="#c3c300"/>
<path d="M756.4 398.6L760.6 394.3L761.9 405.3L757.8 409.5z" fill="#c3c300"/>
<path d="M757.8 409.5L761.9 405.3L763.2 416.3L759.1 420.4z" fill="#c3c300"/>
<path d="M759.1 420.4L763.2 416.3L764.5 427.3L760.5 431.4z" fill="#c1c100"/>
<path d="M760.5 431.4L764.5 427.3L765.8 438.2L761.8 442.4z" fill="#bfbf00"/>
<path d="M761.8 442.4L765.8 438.2L767.1 449.2L763.2 453.3z" fill="#bdbd00"/>
<path d="M763.2 453.3L767.1 449.2L768.3 460.2L764.5 464.2z" fill="#baba00"/>
<path d="M752.8 328.4L757.3 323.9L758.5 334.9L754.1 339.4z" fill="#b0b000"/>
<path d="M754.1 339.4L758.5 334.9L759.8 346L755.4 350.4z" fill="#b3b300"/>
<path d="M755.4 350.4L759.8 346L761 357L756.7 361.3z" fill="#b6b600"/>
<path d="M756.7 361.3L761 357L762.3 368L758 372.3z" fill="#b8b800"/>
<path d="M758 372.3L762.3 368L763.5 379L759.3 383.3z" fill="#baba00"/>
<path d="M759.3 383.3L763.5 379L764.8 390.1L760.6 394.3z" fill="#bbbb00"/>
<path d="M760.6 394.3L764.8 390.1L766 401.1L761.9 405.3z" fill="#bbbb00"/>
<path d="M761.9 405.3L766 401.1L767.2 412.1L763.2 416.3z" fill="#bbbb00"/>
<path d="M763.2 416.3L767.2 412.1L768.5 423.1L764.5 427.3z" fill="#b9b900"/>
<path d="M764.5 427.3L768.5 423.1L769.7 434.1L765.8 438.2z" fill="#b8b800"/>
<path d="M765.8 438.2L769.7 434.1L771 445.2L767.1 449.2z" fill="#b5b500"/>
<path d="M767.1 449.2L771 445.2L772.2 456.2L768.3 460.2z" fill="#b2b200"/>
<path d="M757.3 323.9L761.8 319.4L763 330.5L758.5 334.9z" fill="#a6a600"/>
<path d="M758.5 334.9L763 330.5L764.2 341.6L759.8 346z" fill="#a9a900"/>
<path d="M759.8 346L764.2 341.6L765.3 352.6L761 357z" fill="#acac00"/>
<path d="M761 357L765.3 352.6L766.5 363.7L762.3 368z" fill="#afaf00"/>
<path d="M762.3 368L766.5 363.7L767.7 374.7L763.5 379z" fill="#b0b000"/>
<path d="M763.5 379L767.7 374.7L768.9 385.8L764.8 390.1z" fill="#b2b200"/>
<path d="M764.8 390.1L768.9 385.8L770.1 396.9L766 401.1z" fill="#b2b200"/>
<path d="M766 401.1L770.1 396.9L771.3 407.9L767.2 412.1z" fill="#b2b200"/>
<path d="M767.2 412.1L771.3 407.9L772.5 419L768.5 423.1z" fill="#b1b100"/>
<path d="M768.5 423.1L772.5 419L773.7 430.1L769.7 434.1z" fill="#afaf00"/>
<path d="M769.7 434.1L773.7 430.1L774.9 441.1L771 445.2z" fill="#adad00"/>
<path d="M771 445.2L774.9 441.1L776 452.2L772.2 456.2z" fill="#abab00"/>
<path d="M761.8 319.4L766.2 315L767.4 326.1L763 330.5z" fill="#9b9b00"/>
<path d="M763 330.5L767.4 326.1L768.5 337.2L764.2 341.6z" fill="#9f9f00"/>
<path d="M764.2 341.6L768.5 337.2L769.7 348.2L765.3 352.6z" fill="#a2a200"/>
<path d="M765.3 352.6L769.7 348.2L770.8 359.4L766.5 363.7z" fill="#a4a400"/>
<path d="M766.5 363.7L770.8 359.4L771.9 370.5L767.7 374.7z" fill="#a6a600"/>
<path d="M767.7 374.7L771.9 370.5L773.1 381.6L768.9 385.8z" fill="#a8a800"/>
<path d="M768.9 385.8L773.1 381.6L774.2 392.6L770.1 396.9z" fill="#a9a900"/>
<path d="M770.1 396.9L774.2 392.6L775.4 403.8L771.3 407.9z" fill="#a9a900"/>
<path d="M771.3 407.9L775.4 403.8L776.5 414.9L772.5 419z" fill="#a8a800"/>
<path d="M772.5 419L776.5 414.9L777.6 425.9L773.7 430.1z" fill="#a7a700"/>
<path d="M773.7 430.1L777.6 425.9L778.8 437L774.9 441.1z" fill="#a5a500"/>
<path d="M774.9 441.1L778.8 437L779.9 448.1L776 452.2z" fill="#a3a300"/>
<path d="M766.2 315L770.7 310.5L771.8 321.6L767.4 326.1z" fill="#909000"/>
<path d="M767.4 326.1L771.8 321.6L772.9 332.8L768.5 337.2z" fill="#939300"/>
<path d="M768.5 337.2L772.9 332.8L774 343.9L769.7 348.2z" fill="#979700"/>
<path d="M769.7 348.2L774 343.9L775.1 355L770.8 359.4z" fill="#9a9a00"/>
<path d="M770.8 359.4L775.1 355L776.2 366.2L771.9 370.5z" fill="#9c9c00"/>
<path d="M771.9 370.5L776.2 366.2L777.2 377.3L773.1 381.6z" fill="#9d9d00"/>
<path d="M773.1 381.6L777.2 377.3L778.3 388.4L774.2 392.6z" fill="#9e9e00"/>
<path d="M774.2 392.6L778.3 388.4L779.4 399.6L775.4 403.8z" fill="#9f9f00"/>
<path d="M775.4 403.8L779.4 399.6L780.5 410.7L776.5 414.9z" fill="#9e9e00"/>
<path d="M776.5 414.9L780.5 410.7L781.6 421.9L777.6 425.9z" fill="#9d9d00"/>
<path d="M777.6 425.9L781.6 421.9L782.7 433L778.8 437z" fill="#9c9c00"/>
<path d="M778.8 437L782.7 433L783.8 444.1L779.9 448.1z" fill="#9a9a00"/>
<path d="M770.7 310.5L775.2 306L776.2 317.2L771.8 321.6z" fill="#848400"/>
<path d="M771.8 321.6L776.2 317.2L777.3 328.4L772.9 332.8z" fill="#888800"/>
<path d="M772.9 332.8L777.3 328.4L778.3 339.5L774 343.9z" fill="#8b8b00"/>
<path d="M774 343.9L778.3 339.5L779.3 350.7L775.1 355z" fill="#8e8e00"/>
<path d="M775.1 355L779.3 350.7L780.4 361.9L776.2 366.2z" fill="#919100"/>
<path d="M776.2 366.2L780.4 361.9L781.4 373.1L777.2 377.3z" fill="#939300"/>
<path d="M777.2 377.3L781.4 373.1L782.4 384.2L778.3 388.4z" fill="#949400"/>
<path d="M778.3 388.4L782.4 384.2L783.5 395.4L779.4 399.6z" fill="#949400"/>
<path d="M779.4 399.6L783.5 395.4L784.5 406.6L780.5 410.7z" fill="#949400"/>
<path d="M780.5 410.7L784.5 406.6L785.5 417.8L781.6 421.9z" fill="#949400"/>
<path d="M781.6 421.9L785.5 417.8L786.6 428.9L782.7 433z" fill="#939300"/>
<path d="M782.7 433L786.6 428.9L787.6 440.1L783.8 444.1z" fill="#919100"/>
<path d="M775.2 306L779.7 301.5L780.7 312.7L776.2 317.2z" fill="#787800"/>
<path d="M776.2 317.2L780.7 312.7L781.6 324L777.3 328.4z" fill="#7c7c00"/>
<path d="M777.3 328.4L781.6 324L782.6 335.2L778.3 339.5z" fill="#808000"/>
<path d="M778.3 339.5L782.6 335.2L783.6 346.4L779.3 350.7z" fill="#838300"/>
<path d="M779.3 350.7L783.6 346.4L784.6 357.6L780.4 361.9z" fill="#858500"/>
<path d="M780.4 361.9L784.6 357.6L785.6 368.8L781.4 373.1z" fill="#878700"/>
<path d="M781.4 373.1L785.6 368.8L786.5 380L782.4 384.2z" fill="#898900"/>
<path d="M782.4 384.2L786.5 380L787.5 391.2L783.5 395.4z" fill="#8a8a00"/>
<path d="M783.5 395.4L787.5 391.2L788.5 402.4L784.5 406.6z" fill="#8a8a00"/>
<path d="M784.5 406.6L788.5 402.4L789.5 413.6L785.5 417.8z" fill="#8a8a00"/>
<path d="M785.5 417.8L789.5 413.6L790.5 424.9L786.6 428.9z" fill="#898900"/>
<path d="M786.6 428.9L790.5 424.9L791.5 436.1L787.6 440.1z" fill="#888800"/>
<path d="M779.7 301.5L784.1 297.1L785.1 308.3L780.7 312.7z" fill="#6c6c00"/>
<path d="M780.7 312.7L785.1 308.3L786 319.6L781.6 324z" fill="#707000"/>
<path d="M781.6 324L786 319.6L786.9 330.8L782.6 335.2z" fill="#747400"/>
<path d="M782.6 335.2L786.9 330.8L787.9 342.1L783.6 346.4z" fill="#777700"/>
<path d="M783.6 346.4L787.9 342.1L788.8 353.3L784.6 357.6z" fill="#7a7a00"/>
<path d="M784.6 357.6L788.8 353.3L789.7 364.6L785.6 368.8z" fill="#7c7c00"/>
<path d="M785.6 368.8L789.7 364.6L790.7 375.8L786.5 380z" fill="#7d7d00"/>
<path d="M786.5 380L790.7 375.8L791.6 387.1L787.5 391.2z" fill="#7f7f00"/>
<path d="M787.5 391.2L791.6 387.1L792.5 398.3L788.5 402.4z" fill="#7f7f00"/>
<path d="M788.5 402.4L792.5 398.3L793.4 409.6L789.5 413.6z" fill="#7f7f00"/>
<path d="M789.5 413.6L793.4 409.6L794.4 420.8L790.5 424.9z" fill="#7f7f00"/>
<path d="M790.5 424.9L794.4 420.8L795.3 432.1L791.5 436.1z" fill="#7e7e00"/>
<path d="M784.1 297.1L788.6 292.6L789.5 303.9L785.1 308.3z" fill="#606000"/>
<path d="M785.1 308.3L789.5 303.9L790.4 315.2L786 319.6z" fill="#646400"/>
<path d="M786 319.6L790.4 315.2L791.3 326.4L786.9 330.8z" fill="#686800"/>
<path d="M786.9 330.8L791.3 326.4L792.1 337.7L787.9 342.1z" fill="#6b6b00"/>
<path d="M787.9 342.1L792.1 337.7L793 349L788.8 353.3z" fill="#6e6e00"/>
<path d="M788.8 353.3L793 349L793.9 360.3L789.7 364.6z" fill="#707000"/>
<path d="M789.7 364.6L793.9 360.3L794.8 371.6L790.7 375.8z" fill="#727200"/>
<path d="M790.7 375.8L794.8 371.6L795.6 382.9L791.6 387.1z" fill="#737300"/>
<path d="M791.6 387.1L795.6 382.9L796.5 394.2L792.5 398.3z" fill="#747400"/>
<path d="M792.5 398.3L796.5 394.2L797.4 405.4L793.4 409.6z" fill="#757500"/>
<path d="M793.4 409.6L797.4 405.4L798.3 416.7L794.4 420.8z" fill="#757500"/>
<path d="M794.4 420.8L798.3 416.7L799.1 428L795.3 432.1z" fill="#757500"/>
<path d="M788.6 292.6L793.1 288.1L793.9 299.4L789.5 303.9z" fill="#545400"/>
<path d="M789.5 303.9L793.9 299.4L794.8 310.8L790.4 315.2z" fill="#585800"/>
<path d="M790.4 315.2L794.8 310.8L795.6 322.1L791.3 326.4z" fill="#5c5c00"/>
<path d="M791.3 326.4L795.6 322.1L796.4 333.4L792.1 337.7z" fill="#5f5f00"/>
<path d="M792.1 337.7L796.4 333.4L797.2 344.7L793 349z" fill="#626200"/>
<path d="M793 349L797.2 344.7L798 356.1L793.9 360.3z" fill="#646400"/>
<path d="M793.9 360.3L798 356.1L798.9 367.4L794.8 371.6z" fill="#676700"/>
<path d="M794.8 371.6L798.9 367.4L799.7 378.7L795.6 382.9z" fill="#686800"/>
<path d="M795.6 382.9L799.7 378.7L800.5 390L796.5 394.2z" fill="#6a6a00"/>
<path d="M796.5 394.2L800.5 390L801.4 401.4L797.4 405.4z" fill="#6a6a00"/>
<path d="M797.4 405.4L801.4 401.4L802.2 412.7L798.3 416.7z" fill="#6b6b00"/>
<path d="M798.3 416.7L802.2 412.7L803 424L799.1 428z" fill="#6b6b00"/>
<path d="M473.6 439.8L484.6 441.6L486.7 451.1L475.8 449.2z" fill="#848400"/>
<path d="M475.8 449.2L486.7 451.1L488.7 460.7L477.9 458.7z" fill="#7f7f00"/>
<path d="M477.9 458.7L488.7 460.7L490.7 470.2L480.1 468.2z" fill="#7a7a00"/>
<path d="M480.1 468.2L490.7 470.2L492.7 479.8L482.2 477.6z" fill="#747400"/>
<path d="M482.2 477.6L492.7 479.8L494.8 489.3L484.4 487.1z" fill="#6e6e00"/>
<path d="M484.4 487.1L494.8 489.3L496.8 498.8L486.6 496.5z" fill="#686800"/>
<path d="M486.6 496.5L496.8 498.8L498.8 508.4L488.7 506z" fill="#626200"/>
<path d="M488.7 506L498.8 508.4L500.9 517.9L490.9 515.4z" fill="#5b5b00"/>
<path d="M490.9 515.4L500.9 517.9L502.9 527.5L493 524.9z" fill="#535300"/>
<path d="M493 524.9L502.9 527.5L504.9 537L495.2 534.3z" fill="#4c4c00"/>
<path d="M495.2 534.3L504.9 537L507 546.6L497.3 543.8z" fill="#454500"/>
<path d="M497.3 543.8L507 546.6L509 556.1L499.5 553.2z" fill="#3e3e00"/>
<path d="M484.6 441.6L495.7 443.3L497.6 453L486.7 451.1z" fill="#909000"/>
<path d="M486.7 451.1L497.6 453L499.5 462.6L488.7 460.7z" fill="#8b8b00"/>
<path d="M488.7 460.7L499.5 462.6L501.4 472.3L490.7 470.2z" fill="#858500"/>
<path d="M490.7 470.2L501.4 472.3L503.3 481.9L492.7 479.8z" fill="#7f7f00"/>
<path d="M492.7 479.8L503.3 481.9L505.2 491.5L494.8 489.3z" fill="#787800"/>
<path d="M494.8 489.3L505.2 491.5L507.1 501.2L496.8 498.8z" fill="#717100"/>
<path d="M496.8 498.8L507.1 501.2L509 510.8L498.8 508.4z" fill="#6a6a00"/>
<path d="M498.8 508.4L509 510.8L510.9 520.5L500.9 517.9z" fill="#626200"/>
<path d="M500.9 517.9L510.9 520.5L512.8 530.1L502.9 527.5z" fill="#5a5a00"/>
<path d="M502.9 527.5L512.8 530.1L514.7 539.8L504.9 537z" fill="#525200"/>
<path d="M504.9 537L514.7 539.8L516.6 549.4L507 546.6z" fill="#4a4a00"/>
<path d="M507 546.6L516.6 549.4L518.5 559L509 556.1z" fill="#424200"/>
<path d="M495.7 443.3L506.7 445.1L508.4 454.8L497.6 453z" fill="#9c9c00"/>
<path d="M497.6 453L508.4 454.8L510.2 464.6L499.5 462.6z" fill="#979700"/>
<path d="M499.5 462.6L510.2 464.6L512 474.3L501.4 472.3z" fill="#919100"/>
<path d="M501.4 472.3L512 474.3L513.8 484.1L503.3 481.9z" fill="#8a8a00"/>
<path d="M503.3 481.9L513.8 484.1L515.6 493.8L505.2 491.5z" fill="#828200"/>
<path d="M505.2 491.5L515.6 493.8L517.3 503.5L507.1 501.2z" fill="#7b7b00"/>
<path d="M507.1 501.2L517.3 503.5L519.1 513.3L509 510.8z" fill="#727200"/>
<path d="M509 510.8L519.1 513.3L520.9 523L510.9 520.5z" fill="#6a6a00"/>
<path d="M510.9 520.5L520.9 523L522.6 532.7L512.8 530.1z" fill="#616100"/>
<path d="M512.8 530.1L522.6 532.7L524.4 542.5L514.7 539.8z" fill="#585800"/>
<path d="M514.7 539.8L524.4 542.5L526.2 552.2L516.6 549.4z" fill="#4f4f00"/>
<path d="M516.6 549.4L526.2 552.2L528 562L518.5 559z" fill="#464600"/>
<path d="M506.7 445.1L517.7 446.9L519.3 456.7L508.4 454.8z" fill="#a8a800"/>
<path d="M508.4 454.8L519.3 456.7L521 466.5L510.2 464.6z" fill="#a2a200"/>
<path d="M510.2 464.6L521 466.5L522.6 476.4L512 474.3z" fill="#9c9c00"/>
<path d="M512 474.3L522.6 476.4L524.3 486.2L513.8 484.1z" fill="#949400"/>
<path d="M513.8 484.1L524.3 486.2L525.9 496L515.6 493.8z" fill="#8c8c00"/>
<path d="M515.6 493.8L525.9 496L527.6 505.9L517.3 503.5z" fill="#848400"/>
<path d="M517.3 503.5L527.6 505.9L529.2 515.7L519.1 513.3z" fill="#7b7b00"/>
<path d="M519.1 513.3L529.2 515.7L530.9 525.5L520.9 523z" fill="#717100"/>
<path d="M520.9 523L530.9 525.5L532.5 535.4L522.6 532.7z" fill="#676700"/>
<path d="M522.6 532.7L532.5 535.4L534.2 545.2L524.4 542.5z" fill="#5e5e00"/>
<path d="M524.4 542.5L534.2 545.2L535.8 555L526.2 552.2z" fill="#545400"/>
<path d="M526.2 552.2L535.8 555L537.5 564.9L528 562z" fill="#4a4a00"/>
<path d="M517.7 446.9L528.7 448.6L530.2 458.6L519.3 456.7z" fill="#b3b300"/>
<path d="M519.3 456.7L530.2 458.6L531.8 468.5L521 466.5z" fill="#adad00"/>
<path d="M521 466.5L531.8 468.5L533.3 478.4L522.6 476.4z" fill="#a6a600"/>
<path d="M522.6 476.4L533.3 478.4L534.8 488.4L524.3 486.2z" fill="#9f9f00"/>
<path d="M524.3 486.2L534.8 488.4L536.3 498.3L525.9 496z" fill="#969600"/>
<path d="M525.9 496L536.3 498.3L537.8 508.2L527.6 505.9z" fill="#8d8d00"/>
<path d="M527.6 505.9L537.8 508.2L539.4 518.1L529.2 515.7z" fill="#838300"/>
<path d="M529.2 515.7L539.4 518.1L540.9 528.1L530.9 525.5z" fill="#787800"/>
<path d="M530.9 525.5L540.9 528.1L542.4 538L532.5 535.4z" fill="#6e6e00"/>
<path d="M532.5 535.4L542.4 538L543.9 547.9L534.2 545.2z" fill="#636300"/>
<path d="M534.2 545.2L543.9 547.9L545.4 557.9L535.8 555z" fill="#585800"/>
<path d="M535.8 555L545.4 557.9L547 567.8L537.5 564.9z" fill="#4e4e00"/>
<path d="M528.7 448.6L539.8 450.4L541.1 460.4L530.2 458.6z" fill="#bebe00"/>
<path d="M530.2 458.6L541.1 460.4L542.5 470.4L531.8 468.5z" fill="#b8b800"/>
<path d="M531.8 468.5L542.5 470.4L543.9 480.5L533.3 478.4z" fill="#b1b100"/>
<path d="M533.3 478.4L543.9 480.5L545.3 490.5L534.8 488.4z" fill="#a8a800"/>
<path d="M534.8 488.4L545.3 490.5L546.7 500.5L536.3 498.3z" fill="#9f9f00"/>
<path d="M536.3 498.3L546.7 500.5L548.1 510.6L537.8 508.2z" fill="#959500"/>
<path d="M537.8 508.2L548.1 510.6L549.5 520.6L539.4 518.1z" fill="#8b8b00"/>
<path d="M539.4 518.1L549.5 520.6L550.9 530.6L540.9 528.1z" fill="#7f7f00"/>
<path d="M540.9 528.1L550.9 530.6L552.3 540.6L542.4 538z" fill="#747400"/>
<path d="M542.4 538L552.3 540.6L553.7 550.7L543.9 547.9z" fill="#686800"/>
<path d="M543.9 547.9L553.7 550.7L555.1 560.7L545.4 557.9z" fill="#5d5d00"/>
<path d="M545.4 557.9L555.1 560.7L556.5 570.7L547 567.8z" fill="#515100"/>
<path d="M539.8 450.4L550.8 452.2L552 462.3L541.1 460.4z" fill="#c8c800"/>
<path d="M541.1 460.4L552 462.3L553.3 472.4L542.5 470.4z" fill="#c2c200"/>
<path d="M542.5 470.4L553.3 472.4L554.6 482.5L543.9 480.5z" fill="#baba00"/>
<path d="M543.9 480.5L554.6 482.5L555.8 492.7L545.3 490.5z" fill="#b1b100"/>
<path d="M545.3 490.5L555.8 492.7L557.1 502.8L546.7 500.5z" fill="#a8a800"/>
<path d="M546.7 500.5L557.1 502.8L558.4 512.9L548.1 510.6z" fill="#9d9d00"/>
<path d="M548.1 510.6L558.4 512.9L559.6 523L549.5 520.6z" fill="#929200"/>
<path d="M549.5 520.6L559.6 523L560.9 533.1L550.9 530.6z" fill="#868600"/>
<path d="M550.9 530.6L560.9 533.1L562.1 543.3L552.3 540.6z" fill="#7a7a00"/>
<path d="M552.3 540.6L562.1 543.3L563.4 553.4L553.7 550.7z" fill="#6d6d00"/>
<path d="M553.7 550.7L563.4 553.4L564.7 563.5L555.1 560.7z" fill="#616100"/>
<path d="M555.1 560.7L564.7 563.5L565.9 573.6L556.5 570.7z" fill="#555500"/>
<path d="M550.8 452.2L561.8 453.9L562.9 464.2L552 462.3z" fill="#d1d100"/>
<path d="M552 462.3L562.9 464.2L564.1 474.4L553.3 472.4z" fill="#caca00"/>
<path d="M553.3 472.4L564.1 474.4L565.2 484.6L554.6 482.5z" fill="#c3c300"/>
<path d="M554.6 482.5L565.2 484.6L566.3 494.8L555.8 492.7z" fill="#baba00"/>
<path d="M555.8 492.7L566.3 494.8L567.5 505L557.1 502.8z" fill="#b0b000"/>
<path d="M557.1 502.8L567.5 505L568.6 515.2L558.4 512.9z" fill="#a5a500"/>
<path d="M558.4 512.9L568.6 515.2L569.8 525.5L559.6 523z" fill="#999900"/>
<path d="M559.6 523L569.8 525.5L570.9 535.7L560.9 533.1z" fill="#8c8c00"/>
<path d="M560.9 533.1L570.9 535.7L572 545.9L562.1 543.3z" fill="#7f7f00"/>
<path d="M562.1 543.3L572 545.9L573.2 556.1L563.4 553.4z" fill="#727200"/>
<path d="M563.4 553.4L573.2 556.1L574.3 566.3L564.7 563.5z" fill="#656500"/>
<path d="M564.7 563.5L574.3 566.3L575.4 576.5L565.9 573.6z" fill="#585800"/>
<path d="M561.8 453.9L572.8 455.7L573.8 466L562.9 464.2z" fill="#d9d900"/>
<path d="M562.9 464.2L573.8 466L574.8 476.3L564.1 474.4z" fill="#d2d200"/>
<path d="M564.1 474.4L574.8 476.3L575.9 486.6L565.2 484.6z" fill="#caca00"/>
<path d="M565.2 484.6L575.9 486.6L576.9 496.9L566.3 494.8z" fill="#c1c100"/>
<path d="M566.3 494.8L576.9 496.9L577.9 507.3L567.5 505z" fill="#b7b700"/>
<path d="M567.5 505L577.9 507.3L578.9 517.6L568.6 515.2z" fill="#abab00"/>
<path d="M568.6 515.2L578.9 517.6L579.9 527.9L569.8 525.5z" fill="#9f9f00"/>
<path d="M569.8 525.5L579.9 527.9L580.9 538.2L570.9 535.7z" fill="#929200"/>
<path d="M570.9 535.7L580.9 538.2L581.9 548.5L572 545.9z" fill="#848400"/>
<path d="M572 545.9L581.9 548.5L582.9 558.8L573.2 556.1z" fill="#767600"/>
<path d="M573.2 556.1L582.9 558.8L583.9 569.1L574.3 566.3z" fill="#696900"/>
<path d="M574.3 566.3L583.9 569.1L584.9 579.5L575.4 576.5z" fill="#5b5b00"/>
<path d="M572.8 455.7L583.9 457.5L584.7 467.9L573.8 466z" fill="#dfdf00"/>
<path d="M573.8 466L584.7 467.9L585.6 478.3L574.8 476.3z" fill="#d9d900"/>
<path d="M574.8 476.3L585.6 478.3L586.5 488.7L575.9 486.6z" fill="#d1d100"/>
<path d="M575.9 486.6L586.5 488.7L587.4 499.1L576.9 496.9z" fill="#c7c700"/>
<path d="M576.9 496.9L587.4 499.1L588.3 509.5L577.9 507.3z" fill="#bdbd00"/>
<path d="M577.9 507.3L588.3 509.5L589.1 519.9L578.9 517.6z" fill="#b1b100"/>
<path d="M578.9 517.6L589.1 519.9L590 530.3L579.9 527.9z" fill="#a4a400"/>
<path d="M579.9 527.9L590 530.3L590.9 540.7L580.9 538.2z" fill="#979700"/>
<path d="M580.9 538.2L590.9 540.7L591.8 551.1L581.9 548.5z" fill="#898900"/>
<path d="M581.9 548.5L591.8 551.1L592.7 561.5L582.9 558.8z" fill="#7a7a00"/>
<path d="M582.9 558.8L592.7 561.5L593.5 572L583.9 569.1z" fill="#6c6c00"/>
<path d="M583.9 569.1L593.5 572L594.4 582.4L584.9 579.5z" fill="#5e5e00"/>
<path d="M583.9 457.5L594.9 459.2L595.6 469.7L584.7 467.9z" fill="#e4e400"/>
<path d="M584.7 467.9L595.6 469.7L596.4 480.2L585.6 478.3z" fill="#dede00"/>
<path d="M585.6 478.3L596.4 480.2L597.1 490.7L586.5 488.7z" fill="#d6d600"/>
<path d="M586.5 488.7L597.1 490.7L597.9 501.3L587.4 499.1z" fill="#cdcd00"/>
<path d="M587.4 499.1L597.9 501.3L598.6 511.8L588.3 509.5z" fill="#c2c200"/>
<path d="M588.3 509.5L598.6 511.8L599.4 522.3L589.1 519.9z" fill="#b6b600"/>
<path d="M589.1 519.9L599.4 522.3L600.1 532.8L590 530.3z" fill="#a9a900"/>
<path d="M590 530.3L600.1 532.8L600.9 543.3L590.9 540.7z" fill="#9b9b00"/>
<path d="M590.9 540.7L600.9 543.3L601.6 553.8L591.8 551.1z" fill="#8c8c00"/>
<path d="M591.8 551.1L601.6 553.8L602.4 564.3L592.7 561.5z" fill="#7e7e00"/>
<path d="M592.7 561.5L602.4 564.3L603.2 574.8L593.5 572z" fill="#6f6f00"/>
<path d="M593.5 572L603.2 574.8L603.9 585.3L594.4 582.4z" fill="#606000"/>
<path d="M594.9 459.2L605.9 461L606.5 471.6L595.6 469.7z" fill="#e9e900"/>
<path d="M595.6 469.7L606.5 471.6L607.1 482.2L596.4 480.2z" fill="#e2e200"/>
<path d="M596.4 480.2L607.1 482.2L607.8 492.8L597.1 490.7z" fill="#dada00"/>
<path d="M597.1 490.7L607.8 492.8L608.4 503.4L597.9 501.3z" fill="#d1d100"/>
<path d="M597.9 501.3L608.4 503.4L609 514L598.6 511.8z" fill="#c6c600"/>
<path d="M598.6 511.8L609 514L609.6 524.6L599.4 522.3z" fill="#baba00"/>
<path d="M599.4 522.3L609.6 524.6L610.3 535.2L600.1 532.8z" fill="#adad00"/>
<path d="M600.1 532.8L610.3 535.2L610.9 545.8L600.9 543.3z" fill="#9f9f00"/>
<path d="M600.9 543.3L610.9 545.8L611.5 556.4L601.6 553.8z" fill="#909000"/>
<path d="M601.6 553.8L611.5 556.4L612.1 567L602.4 564.3z" fill="#818100"/>
<path d="M602.4 564.3L612.1 567L612.8 577.6L603.2 574.8z" fill="#717100"/>
<path d="M603.2 574.8L612.8 577.6L613.4 588.2L603.9 585.3z" fill="#626200"/>
<path d="M605.9 461L618.5 461.9L619 472.4L606.5 471.6z" fill="#eeee00"/>
<path d="M606.5 471.6L619 472.4L619.4 482.9L607.1 482.2z" fill="#e9e900"/>
<path d="M607.1 482.2L619.4 482.9L619.9 493.4L607.8 492.8z" fill="#e3e300"/>
<path d="M607.8 492.8L619.9 493.4L620.4 503.9L608.4 503.4z" fill="#dbdb00"/>
<path d="M608.4 503.4L620.4 503.9L620.9 514.5L609 514z" fill="#d3d300"/>
<path d="M609 514L620.9 514.5L621.3 525L609.6 524.6z" fill="#c9c900"/>
<path d="M609.6 524.6L621.3 525L621.8 535.5L610.3 535.2z" fill="#bebe00"/>
<path d="M610.3 535.2L621.8 535.5L622.3 546L610.9 545.8z" fill="#b3b300"/>
<path d="M610.9 545.8L622.3 546L622.8 556.5L611.5 556.4z" fill="#a7a700"/>
<path d="M611.5 556.4L622.8 556.5L623.2 567L612.1 567z" fill="#9a9a00"/>
<path d="M612.1 567L623.2 567L623.7 577.5L612.8 577.6z" fill="#8e8e00"/>
<path d="M612.8 577.6L623.7 577.5L624.2 588L613.4 588.2z" fill="#818100"/>
<path d="M618.5 461.9L631 462.9L631.4 473.3L619 472.4z" fill="#f0f000"/>
<path d="M619 472.4L631.4 473.3L631.7 483.7L619.4 482.9z" fill="#ebeb00"/>
<path d="M619.4 482.9L631.7 483.7L632 494.1L619.9 493.4z" fill="#e4e400"/>
<path d="M619.9 493.4L632 494.1L632.4 504.5L620.4 503.9z" fill="#dcdc00"/>
<path d="M620.4 503.9L632.4 504.5L632.7 514.9L620.9 514.5z" fill="#d4d400"/>
<path d="M620.9 514.5L632.7 514.9L633 525.3L621.3 525z" fill="#caca00"/>
<path d="M621.3 525L633 525.3L633.3 535.7L621.8 535.5z" fill="#bfbf00"/>
<path d="M621.8 535.5L633.3 535.7L633.7 546.1L622.3 546z" fill="#b3b300"/>
<path d="M622.3 546L633.7 546.1L634 556.5L622.8 556.5z" fill="#a7a700"/>
<path d="M622.8 556.5L634 556.5L634.3 566.9L623.2 567z" fill="#9b9b00"/>
<path d="M623.2 567L634.3 566.9L634.6 577.3L623.7 577.5z" fill="#8e8e00"/>
<path d="M623.7 577.5L634.6 577.3L635 587.7L624.2 588z" fill="#818100"/>
<path d="M631 462.9L643.6 463.8L643.8 474.1L631.4 473.3z" fill="#f1f100"/>
<path d="M631.4 473.3L643.8 474.1L644 484.4L631.7 483.7z" fill="#ebeb00"/>
<path d="M631.7 483.7L644 484.4L644.2 494.7L632 494.1z" fill="#e4e400"/>
<path d="M632 494.1L644.2 494.7L644.3 505.1L632.4 504.5z" fill="#dddd00"/>
<path d="M632.4 504.5L644.3 505.1L644.5 515.4L632.7 514.9z" fill="#d4d400"/>
<path d="M632.7 514.9L644.5 515.4L644.7 525.7L633 525.3z" fill="#caca00"/>
<path d="M633 525.3L644.7 525.7L644.9 536L633.3 535.7z" fill="#bfbf00"/>
<path d="M633.3 535.7L644.9 536L645 546.3L633.7 546.1z" fill="#b3b300"/>
<path d="M633.7 546.1L645 546.3L645.2 556.6L634 556.5z" fill="#a7a700"/>
<path d="M634 556.5L645.2 556.6L645.4 566.9L634.3 566.9z" fill="#9b9b00"/>
<path d="M634.3 566.9L645.4 566.9L645.6 577.2L634.6 577.3z" fill="#8e8e00"/>
<path d="M634.6 577.3L645.6 577.2L645.8 587.5L635 587.7z" fill="#818100"/>
<path d="M643.6 463.8L656.2 464.8L656.2 475L643.8 474.1z" fill="#f0f000"/>
<path d="M643.8 474.1L656.2 475L656.3 485.2L644 484.4z" fill="#ebeb00"/>
<path d="M644 484.4L656.3 485.2L656.3 495.4L644.2 494.7z" fill="#e4e400"/>
<path d="M644.2 494.7L656.3 495.4L656.3 505.6L644.3 505.1z" fill="#dcdc00"/>
<path d="M644.3 505.1L656.3 505.6L656.3 515.8L644.5 515.4z" fill="#d3d300"/>
<path d="M644.5 515.4L656.3 515.8L656.4 526L644.7 525.7z" fill="#c9c900"/>
<path d="M644.7 525.7L656.4 526L656.4 536.2L644.9 536z" fill="#bebe00"/>
<path d="M644.9 536L656.4 536.2L656.4 546.4L645 546.3z" fill="#b3b300"/>
<path d="M645 546.3L656.4 546.4L656.4 556.6L645.2 556.6z" fill="#a7a700"/>
<path d="M645.2 556.6L656.4 556.6L656.5 566.9L645.4 566.9z" fill="#9a9a00"/>
<path d="M645.4 566.9L656.5 566.9L656.5 577.1L645.6 577.2z" fill="#8d8d00"/>
<path d="M645.6 577.2L656.5 577.1L656.5 587.3L645.8 587.5z" fill="#818100"/>
<path d="M656.2 464.8L668.8 465.7L668.7 475.8L656.2 475z" fill="#efef00"/>
<path d="M656.2 475L668.7 475.8L668.5 485.9L656.3 485.2z" fill="#e9e900"/>
<path d="M656.3 485.2L668.5 485.9L668.4 496L656.3 495.4z" fill="#e3e300"/>
<path d="M656.3 495.4L668.4 496L668.3 506.1L656.3 505.6z" fill="#dbdb00"/>
<path d="M656.3 505.6L668.3 506.1L668.2 516.3L656.3 515.8z" fill="#d2d200"/>
<path d="M656.3 515.8L668.2 516.3L668 526.4L656.4 526z" fill="#c8c800"/>
<path d="M656.4 526L668 526.4L667.9 536.5L656.4 536.2z" fill="#bdbd00"/>
<path d="M656.4 536.2L667.9 536.5L667.8 546.6L656.4 546.4z" fill="#b2b200"/>
<path d="M656.4 546.4L667.8 546.6L667.7 556.7L656.4 556.6z" fill="#a6a600"/>
<path d="M656.4 556.6L667.7 556.7L667.6 566.8L656.5 566.9z" fill="#999900"/>
<path d="M656.5 566.9L667.6 566.8L667.4 576.9L656.5 577.1z" fill="#8d8d00"/>
<path d="M656.5 577.1L667.4 576.9L667.3 587L656.5 587.3z" fill="#808000"/>
<path d="M668.8 465.7L681.3 466.6L681.1 476.7L668.7 475.8z" fill="#eded00"/>
<path d="M668.7 475.8L681.1 476.7L680.8 486.7L668.5 485.9z" fill="#e7e700"/>
<path d="M668.5 485.9L680.8 486.7L680.5 496.7L668.4 496z" fill="#e0e000"/>
<path d="M668.4 496L680.5 496.7L680.3 506.7L668.3 506.1z" fill="#d8d800"/>
<path d="M668.3 506.1L680.3 506.7L680 516.7L668.2 516.3z" fill="#d0d000"/>
<path d="M668.2 516.3L680 516.7L679.7 526.7L668 526.4z" fill="#c6c600"/>
<path d="M668 526.4L679.7 526.7L679.5 536.7L667.9 536.5z" fill="#bbbb00"/>
<path d="M667.9 536.5L679.5 536.7L679.2 546.8L667.8 546.6z" fill="#b0b000"/>
<path d="M667.8 546.6L679.2 546.8L678.9 556.8L667.7 556.7z" fill="#a4a400"/>
<path d="M667.7 556.7L678.9 556.8L678.6 566.8L667.6 566.8z" fill="#989800"/>
<path d="M667.6 566.8L678.6 566.8L678.4 576.8L667.4 576.9z" fill="#8b8b00"/>
<path d="M667.4 576.9L678.4 576.8L678.1 586.8L667.3 587z" fill="#7f7f00"/>
<path d="M681.3 466.6L693.9 467.6L693.5 477.5L681.1 476.7z" fill="#eaea00"/>
<path d="M681.1 476.7L693.5 477.5L693.1 487.4L680.8 486.7z" fill="#e4e400"/>
<path d="M680.8 486.7L693.1 487.4L692.7 497.3L680.5 496.7z" fill="#dddd00"/>
<path d="M680.5 496.7L692.7 497.3L692.2 507.3L680.3 506.7z" fill="#d5d500"/>
<path d="M680.3 506.7L692.2 507.3L691.8 517.2L680 516.7z" fill="#cdcd00"/>
<path d="M680 516.7L691.8 517.2L691.4 527.1L679.7 526.7z" fill="#c3c300"/>
<path d="M679.7 526.7L691.4 527.1L691 537L679.5 536.7z" fill="#b8b800"/>
<path d="M679.5 536.7L691 537L690.6 546.9L679.2 546.8z" fill="#adad00"/>
<path d="M679.2 546.8L690.6 546.9L690.1 556.8L678.9 556.8z" fill="#a2a200"/>
<path d="M678.9 556.8L690.1 556.8L689.7 566.7L678.6 566.8z" fill="#969600"/>
<path d="M678.6 566.8L689.7 566.7L689.3 576.7L678.4 576.8z" fill="#898900"/>
<path d="M678.4 576.8L689.3 576.7L688.9 586.6L678.1 586.8z" fill="#7d7d00"/>
<path d="M693.9 467.6L706.5 468.5L705.9 478.4L693.5 477.5z" fill="#e6e600"/>
<path d="M693.5 477.5L705.9 478.4L705.4 488.2L693.1 487.4z" fill="#e0e000"/>
<path d="M693.1 487.4L705.4 488.2L704.8 498L692.7 497.3z" fill="#d9d900"/>
<path d="M692.7 497.3L704.8 498L704.2 507.8L692.2 507.3z" fill="#d1d100"/>
<path d="M692.2 507.3L704.2 507.8L703.7 517.6L691.8 517.2z" fill="#c9c900"/>
<path d="M691.8 517.2L703.7 517.6L703.1 527.4L691.4 527.1z" fill="#bfbf00"/>
<path d="M691.4 527.1L703.1 527.4L702.5 537.2L691 537z" fill="#b5b500"/>
<path d="M691 537L702.5 537.2L701.9 547.1L690.6 546.9z" fill="#aaaa00"/>
<path d="M690.6 546.9L701.9 547.1L701.4 556.9L690.1 556.8z" fill="#9f9f00"/>
<path d="M690.1 556.8L701.4 556.9L700.8 566.7L689.7 566.7z" fill="#939300"/>
<path d="M689.7 566.7L700.8 566.7L700.2 576.5L689.3 576.7z" fill="#878700"/>
<path d="M689.3 576.7L700.2 576.5L699.7 586.3L688.9 586.6z" fill="#7c7c00"/>
<path d="M706.5 468.5L719.1 469.5L718.4 479.2L705.9 478.4z" fill="#e0e000"/>
<path d="M705.9 478.4L718.4 479.2L717.6 488.9L705.4 488.2z" fill="#dbdb00"/>
<path d="M705.4 488.2L717.6 488.9L716.9 498.6L704.8 498z" fill="#d4d400"/>
<path d="M704.8 498L716.9 498.6L716.2 508.4L704.2 507.8z" fill="#cccc00"/>
<path d="M704.2 507.8L716.2 508.4L715.5 518.1L703.7 517.6z" fill="#c4c400"/>
<path d="M703.7 517.6L715.5 518.1L714.8 527.8L703.1 527.4z" fill="#bbbb00"/>
<path d="M703.1 527.4L714.8 527.8L714 537.5L702.5 537.2z" fill="#b1b100"/>
<path d="M702.5 537.2L714 537.5L713.3 547.2L701.9 547.1z" fill="#a6a600"/>
<path d="M701.9 547.1L713.3 547.2L712.6 556.9L701.4 556.9z" fill="#9c9c00"/>
<path d="M701.4 556.9L712.6 556.9L711.9 566.7L700.8 566.7z" fill="#909000"/>
<path d="M700.8 566.7L711.9 566.7L711.2 576.4L700.2 576.5z" fill="#858500"/>
<path d="M700.2 576.5L711.2 576.4L710.4 586.1L699.7 586.3z" fill="#797900"/>
<path d="M719.1 469.5L731.6 470.4L730.8 480L718.4 479.2z" fill="#dbdb00"/>
<path d="M718.4 479.2L730.8 480L729.9 489.7L717.6 488.9z" fill="#d5d500"/>
<path d="M717.6 488.9L729.9 489.7L729 499.3L716.9 498.6z" fill="#cece00"/>
<path d="M716.9 498.6L729 499.3L728.2 508.9L716.2 508.4z" fill="#c7c700"/>
<path d="M716.2 508.4L728.2 508.9L727.3 518.5L715.5 518.1z" fill="#bfbf00"/>
<path d="M715.5 518.1L727.3 518.5L726.4 528.1L714.8 527.8z" fill="#b6b600"/>
<path d="M714.8 527.8L726.4 528.1L725.6 537.8L714 537.5z" fill="#acac00"/>
<path d="M714 537.5L725.6 537.8L724.7 547.4L713.3 547.2z" fill="#a2a200"/>
<path d="M713.3 547.2L724.7 547.4L723.8 557L712.6 556.9z" fill="#989800"/>
<path d="M712.6 556.9L723.8 557L723 566.6L711.9 566.7z" fill="#8d8d00"/>
<path d="M711.9 566.7L723 566.6L722.1 576.2L711.2 576.4z" fill="#828200"/>
<path d="M711.2 576.4L722.1 576.2L721.2 585.9L710.4 586.1z" fill="#777700"/>
<path d="M731.6 470.4L744.2 471.4L743.2 480.9L730.8 480z" fill="#d4d400"/>
<path d="M730.8 480L743.2 480.9L742.2 490.4L729.9 489.7z" fill="#cfcf00"/>
<path d="M729.9 489.7L742.2 490.4L741.2 499.9L729 499.3z" fill="#c8c800"/>
<path d="M729 499.3L741.2 499.9L740.2 509.4L728.2 508.9z" fill="#c1c100"/>
<path d="M728.2 508.9L740.2 509.4L739.1 519L727.3 518.5z" fill="#b9b900"/>
<path d="M727.3 518.5L739.1 519L738.1 528.5L726.4 528.1z" fill="#b1b100"/>
<path d="M726.4 528.1L738.1 528.5L737.1 538L725.6 537.8z" fill="#a7a700"/>
<path d="M725.6 537.8L737.1 538L736.1 547.5L724.7 547.4z" fill="#9e9e00"/>
<path d="M724.7 547.4L736.1 547.5L735.1 557.1L723.8 557z" fill="#949400"/>
<path d="M723.8 557L735.1 557.1L734.1 566.6L723 566.6z" fill="#898900"/>
<path d="M723 566.6L734.1 566.6L733 576.1L722.1 576.2z" fill="#7f7f00"/>
<path d="M722.1 576.2L733 576.1L732 585.6L721.2 585.9z" fill="#747400"/>
<path d="M744.2 471.4L756.8 472.3L755.6 481.7L743.2 480.9z" fill="#cdcd00"/>
<path d="M743.2 480.9L755.6 481.7L754.5 491.1L742.2 490.4z" fill="#c8c800"/>
<path d="M742.2 490.4L754.5 491.1L753.3 500.6L741.2 499.9z" fill="#c1c100"/>
<path d="M741.2 499.9L753.3 500.6L752.1 510L740.2 509.4z" fill="#bbbb00"/>
<path d="M740.2 509.4L752.1 510L751 519.4L739.1 519z" fill="#b3b300"/>
<path d="M739.1 519L751 519.4L749.8 528.9L738.1 528.5z" fill="#abab00"/>
<path d="M738.1 528.5L749.8 528.9L748.6 538.3L737.1 538z" fill="#a2a200"/>
<path d="M737.1 538L748.6 538.3L747.5 547.7L736.1 547.5z" fill="#999900"/>
<path d="M736.1 547.5L747.5 547.7L746.3 557.1L735.1 557.1z" fill="#8f8f00"/>
<path d="M735.1 557.1L746.3 557.1L745.1 566.5L734.1 566.6z" fill="#868600"/>
<path d="M734.1 566.6L745.1 566.5L744 576L733 576.1z" fill="#7c7c00"/>
<path d="M733 576.1L744 576L742.8 585.4L732 585.6z" fill="#727200"/>
<path d="M756.8 472.3L760.6 468.3L759.4 477.8L755.6 481.7z" fill="#b7b700"/>
<path d="M755.6 481.7L759.4 477.8L758.2 487.3L754.5 491.1z" fill="#b2b200"/>
<path d="M754.5 491.1L758.2 487.3L757 496.7L753.3 500.6z" fill="#adad00"/>
<path d="M753.3 500.6L757 496.7L755.9 506.2L752.1 510z" fill="#a7a700"/>
<path d="M752.1 510L755.9 506.2L754.6 515.7L751 519.4z" fill="#a1a100"/>
<path d="M751 519.4L754.6 515.7L753.5 525.2L749.8 528.9z" fill="#9a9a00"/>
<path d="M749.8 528.9L753.5 525.2L752.2 534.7L748.6 538.3z" fill="#939300"/>
<path d="M748.6 538.3L752.2 534.7L751 544.2L747.5 547.7z" fill="#8b8b00"/>
<path d="M747.5 547.7L751 544.2L749.9 553.7L746.3 557.1z" fill="#838300"/>
<path d="M746.3 557.1L749.9 553.7L748.6 563.2L745.1 566.5z" fill="#7b7b00"/>
<path d="M745.1 566.5L748.6 563.2L747.5 572.7L744 576z" fill="#727200"/>
<path d="M744 576L747.5 572.7L746.2 582.2L742.8 585.4z" fill="#6a6a00"/>
<path d="M760.6 468.3L764.5 464.2L763.3 473.8L759.4 477.8z" fill="#b0b000"/>
<path d="M759.4 477.8L763.3 473.8L762 483.4L758.2 487.3z" fill="#abab00"/>
<path d="M758.2 487.3L762 483.4L760.8 492.9L757 496.7z" fill="#a5a500"/>
<path d="M757 496.7L760.8 492.9L759.6 502.5L755.9 506.2z" fill="#9f9f00"/>
<path d="M755.9 506.2L759.6 502.5L758.3 512L754.6 515.7z" fill="#989800"/>
<path d="M754.6 515.7L758.3 512L757.1 521.6L753.5 525.2z" fill="#919100"/>
<path d="M753.5 525.2L757.1 521.6L755.9 531.1L752.2 534.7z" fill="#8a8a00"/>
<path d="M752.2 534.7L755.9 531.1L754.6 540.7L751 544.2z" fill="#828200"/>
<path d="M751 544.2L754.6 540.7L753.4 550.2L749.9 553.7z" fill="#797900"/>
<path d="M749.9 553.7L753.4 550.2L752.2 559.8L748.6 563.2z" fill="#717100"/>
<path d="M748.6 563.2L752.2 559.8L750.9 569.4L747.5 572.7z" fill="#686800"/>
<path d="M747.5 572.7L750.9 569.4L749.7 578.9L746.2 582.2z" fill="#5f5f00"/>
<path d="M764.5 464.2L768.3 460.2L767.1 469.8L763.3 473.8z" fill="#a8a800"/>
<path d="M763.3 473.8L767.1 469.8L765.8 479.5L762 483.4z" fill="#a3a300"/>
<path d="M762 483.4L765.8 479.5L764.5 489.1L760.8 492.9z" fill="#9d9d00"/>
<path d="M760.8 492.9L764.5 489.1L763.3 498.7L759.6 502.5z" fill="#979700"/>
<path d="M759.6 502.5L763.3 498.7L762 508.3L758.3 512z" fill="#909000"/>
<path d="M758.3 512L762 508.3L760.8 518L757.1 521.6z" fill="#888800"/>
<path d="M757.1 521.6L760.8 518L759.5 527.6L755.9 531.1z" fill="#808000"/>
<path d="M755.9 531.1L759.5 527.6L758.2 537.2L754.6 540.7z" fill="#787800"/>
<path d="M754.6 540.7L758.2 537.2L756.9 546.8L753.4 550.2z" fill="#6f6f00"/>
<path d="M753.4 550.2L756.9 546.8L755.7 556.4L752.2 559.8z" fill="#666600"/>
<path d="M752.2 559.8L755.7 556.4L754.4 566.1L750.9 569.4z" fill="#5d5d00"/>
<path d="M750.9 569.4L754.4 566.1L753.1 575.7L749.7 578.9z" fill="#545400"/>
<path d="M768.3 460.2L772.2 456.2L770.9 465.9L767.1 469.8z" fill="#a0a000"/>
<path d="M767.1 469.8L770.9 465.9L769.6 475.6L765.8 479.5z" fill="#9a9a00"/>
<path d="M765.8 479.5L769.6 475.6L768.3 485.3L764.5 489.1z" fill="#949400"/>
<path d="M764.5 489.1L768.3 485.3L767 494.9L763.3 498.7z" fill="#8d8d00"/>
<path d="M763.3 498.7L767 494.9L765.7 504.6L762 508.3z" fill="#868600"/>
<path d="M762 508.3L765.7 504.6L764.4 514.3L760.8 518z" fill="#7e7e00"/>
<path d="M760.8 518L764.4 514.3L763.1 524L759.5 527.6z" fill="#767600"/>
<path d="M759.5 527.6L763.1 524L761.8 533.7L758.2 537.2z" fill="#6d6d00"/>
<path d="M758.2 537.2L761.8 533.7L760.5 543.4L756.9 546.8z" fill="#646400"/>
<path d="M756.9 546.8L760.5 543.4L759.2 553.1L755.7 556.4z" fill="#5b5b00"/>
<path d="M755.7 556.4L759.2 553.1L757.9 562.7L754.4 566.1z" fill="#515100"/>
<path d="M754.4 566.1L757.9 562.7L756.6 572.4L753.1 575.7z" fill="#484800"/>
<path d="M772.2 456.2L776 452.2L774.7 461.9L770.9 465.9z" fill="#979700"/>
<path d="M770.9 465.9L774.7 461.9L773.4 471.7L769.6 475.6z" fill="#919100"/>
<path d="M769.6 475.6L773.4 471.7L772 481.4L768.3 485.3z" fill="#8b8b00"/>
<path d="M768.3 485.3L772 481.4L770.7 491.2L767 494.9z" fill="#848400"/>
<path d="M767 494.9L770.7 491.2L769.4 500.9L765.7 504.6z" fill="#7c7c00"/>
<path d="M765.7 504.6L769.4 500.9L768 510.7L764.4 514.3z" fill="#747400"/>
<path d="M764.4 514.3L768 510.7L766.7 520.4L763.1 524z" fill="#6b6b00"/>
<path d="M763.1 524L766.7 520.4L765.4 530.2L761.8 533.7z" fill="#626200"/>
<path d="M761.8 533.7L765.4 530.2L764 539.9L760.5 543.4z" fill="#585800"/>
<path d="M760.5 543.4L764 539.9L762.7 549.7L759.2 553.1z" fill="#4f4f00"/>
<path d="M759.2 553.1L762.7 549.7L761.4 559.4L757.9 562.7z" fill="#454500"/>
<path d="M757.9 562.7L761.4 559.4L760 569.2L756.6 572.4z" fill="#3c3c00"/>
<path d="M776 452.2L779.9 448.1L778.5 458L774.7 461.9z" fill="#8e8e00"/>
<path d="M774.7 461.9L778.5 458L777.2 467.8L773.4 471.7z" fill="#878700"/>
<path d="M773.4 471.7L777.2 467.8L775.8 477.6L772 481.4z" fill="#818100"/>
<path d="M772 481.4L775.8 477.6L774.4 487.4L770.7 491.2z" fill="#797900"/>
<path d="M770.7 491.2L774.4 487.4L773.1 497.2L769.4 500.9z" fill="#717100"/>
<path d="M769.4 500.9L773.1 497.2L771.7 507.1L768 510.7z" fill="#686800"/>
<path d="M768 510.7L771.7 507.1L770.3 516.9L766.7 520.4z" fill="#5f5f00"/>
<path d="M766.7 520.4L770.3 516.9L769 526.7L765.4 530.2z" fill="#565600"/>
<path d="M765.4 530.2L769 526.7L767.6 536.5L764 539.9z" fill="#4c4c00"/>
<path d="M764 539.9L767.6 536.5L766.2 546.3L762.7 549.7z" fill="#434300"/>
<path d="M762.7 549.7L766.2 546.3L764.9 556.1L761.4 559.4z" fill="#393900"/>
<path d="M761.4 559.4L764.9 556.1L763.5 566L760 569.2z" fill="#2f2f00"/>
<path d="M779.9 448.1L783.8 444.1L782.4 454L778.5 458z" fill="#848400"/>
<path d="M778.5 458L782.4 454L781 463.9L777.2 467.8z" fill="#7d7d00"/>
<path d="M777.2 467.8L781 463.9L779.5 473.8L775.8 477.6z" fill="#767600"/>
<path d="M775.8 477.6L779.5 473.8L778.1 483.7L774.4 487.4z" fill="#6e6e00"/>
<path d="M774.4 487.4L778.1 483.7L776.8 493.5L773.1 497.2z" fill="#666600"/>
<path d="M773.1 497.2L776.8 493.5L775.4 503.4L771.7 507.1z" fill="#5d5d00"/>
<path d="M771.7 507.1L775.4 503.4L774 513.3L770.3 516.9z" fill="#545400"/>
<path d="M770.3 516.9L774 513.3L772.6 523.2L769 526.7z" fill="#4a4a00"/>
<path d="M769 526.7L772.6 523.2L771.2 533.1L767.6 536.5z" fill="#404000"/>
<path d="M767.6 536.5L771.2 533.1L769.8 542.9L766.2 546.3z" fill="#363600"/>
<path d="M766.2 546.3L769.8 542.9L768.4 552.8L764.9 556.1z" fill="#2c2c00"/>
<path d="M764.9 556.1L768.4 552.8L767 562.7L763.5 566z" fill="#232300"/>
<path d="M783.8 444.1L787.6 440.1L786.2 450L782.4 454z" fill="#797900"/>
<path d="M782.4 454L786.2 450L784.7 460L781 463.9z" fill="#727200"/>
<path d="M781 463.9L784.7 460L783.3 469.9L779.5 473.8z" fill="#6b6b00"/>
<path d="M779.5 473.8L783.3 469.9L781.9 479.9L778.1 483.7z" fill="#636300"/>
<path d="M778.1 483.7L781.9 479.9L780.4 489.8L776.8 493.5z" fill="#5a5a00"/>
<path d="M776.8 493.5L780.4 489.8L779 499.8L775.4 503.4z" fill="#515100"/>
<path d="M775.4 503.4L779 499.8L777.6 509.7L774 513.3z" fill="#474700"/>
<path d="M774 513.3L777.6 509.7L776.1 519.7L772.6 523.2z" fill="#3d3d00"/>
<path d="M772.6 523.2L776.1 519.7L774.7 529.6L771.2 533.1z" fill="#333300"/>
<path d="M771.2 533.1L774.7 529.6L773.3 539.6L769.8 542.9z" fill="#292900"/>
<path d="M769.8 542.9L773.3 539.6L771.8 549.5L768.4 552.8z" fill="#1f1f00"/>
<path d="M768.4 552.8L771.8 549.5L770.4 559.5L767 562.7z" fill="#161600"/>
<path d="M787.6 440.1L791.5 436.1L790 446.1L786.2 450z" fill="#6f6f00"/>
<path d="M786.2 450L790 446.1L788.5 456.1L784.7 460z" fill="#676700"/>
<path d="M784.7 460L788.5 456.1L787.1 466.1L783.3 469.9z" fill="#606000"/>
<path d="M783.3 469.9L787.1 466.1L785.6 476.1L781.9 479.9z" fill="#575700"/>
<path d="M781.9 479.9L785.6 476.1L784.1 486.1L780.4 489.8z" fill="#4e4e00"/>
<path d="M780.4 489.8L784.1 486.1L782.7 496.1L779 499.8z" fill="#454500"/>
<path d="M779 499.8L782.7 496.1L781.2 506.2L777.6 509.7z" fill="#3b3b00"/>
<path d="M777.6 509.7L781.2 506.2L779.7 516.2L776.1 519.7z" fill="#313100"/>
<path d="M776.1 519.7L779.7 516.2L778.2 526.2L774.7 529.6z" fill="#272700"/>
<path d="M774.7 529.6L778.2 526.2L776.8 536.2L773.3 539.6z" fill="#1d1d00"/>
<path d="M773.3 539.6L776.8 536.2L775.3 546.2L771.8 549.5z" fill="#131300"/>
<path d="M771.8 549.5L775.3 546.2L773.9 556.2L770.4 559.5z" fill="#090900"/>
<path d="M791.5 436.1L795.3 432.1L793.8 442.1L790 446.1z" fill="#646400"/>
<path d="M790 446.1L793.8 442.1L792.3 452.2L788.5 456.1z" fill="#5c5c00"/>
<path d="M788.5 456.1L792.3 452.2L790.8 462.3L787.1 466.1z" fill="#545400"/>
<path d="M787.1 466.1L790.8 462.3L789.3 472.4L785.6 476.1z" fill="#4b4b00"/>
<path d="M785.6 476.1L789.3 472.4L787.8 482.4L784.1 486.1z" fill="#424200"/>
<path d="M784.1 486.1L787.8 482.4L786.3 492.5L782.7 496.1z" fill="#383800"/>
<path d="M782.7 496.1L786.3 492.5L784.8 502.6L781.2 506.2z" fill="#2e2e00"/>
<path d="M781.2 506.2L784.8 502.6L783.3 512.7L779.7 516.2z" fill="#242400"/>
<path d="M779.7 516.2L783.3 512.7L781.8 522.8L778.2 526.2z" fill="#1a1a00"/>
<path d="M778.2 526.2L781.8 522.8L780.3 532.8L776.8 536.2z" fill="#101000"/>
<path d="M776.8 536.2L780.3 532.8L778.8 542.9L775.3 546.2z" fill="#060600"/>
<path d="M775.3 546.2L778.8 542.9L777.3 553L773.9 556.2z" fill="#000000"/>
<path d="M795.3 432.1L799.1 428L797.6 438.2L793.8 442.1z" fill="#595900"/>
<path d="M793.8 442.1L797.6 438.2L796.1 448.3L792.3 452.2z" fill="#515100"/>
<path d="M792.3 452.2L796.1 448.3L794.5 458.5L790.8 462.3z" fill="#494900"/>
<path d="M790.8 462.3L794.5 458.5L793 468.6L789.3 472.4z" fill="#404000"/>
<path d="M789.3 472.4L793 468.6L791.5 478.7L787.8 482.4z" fill="#363600"/>
<path d="M787.8 482.4L791.5 478.7L790 488.9L786.3 492.5z" fill="#2c2c00"/>
<path d="M786.3 492.5L790 488.9L788.4 499L784.8 502.6z" fill="#222200"/>
<path d="M784.8 502.6L788.4 499L786.9 509.2L783.3 512.7z" fill="#181800"/>
<path d="M783.3 512.7L786.9 509.2L785.4 519.3L781.8 522.8z" fill="#0d0d00"/>
<path d="M781.8 522.8L785.4 519.3L783.8 529.5L780.3 532.8z" fill="#030300"/>
<path d="M780.3 532.8L783.8 529.5L782.3 539.6L778.8 542.9z" fill="#000000"/>
<path d="M778.8 542.9L782.3 539.6L780.8 549.7L777.3 553z" fill="#000000"/>
<path d="M799.1 428L803 424L801.4 434.2L797.6 438.2z" fill="#4e4e00"/>
<path d="M797.6 438.2L801.4 434.2L799.9 444.4L796.1 448.3z" fill="#464600"/>
<path d="M796.1 448.3L799.9 444.4L798.3 454.6L794.5 458.5z" fill="#3d3d00"/>
<path d="M794.5 458.5L798.3 454.6L796.7 464.8L793 468.6z" fill="#343400"/>
<path d="M793 468.6L796.7 464.8L795.2 475L791.5 478.7z" fill="#2a2a00"/>
<path d="M791.5 478.7L795.2 475L793.6 485.2L790 488.9z" fill="#202000"/>
<path d="M790 488.9L793.6 485.2L792 495.5L788.4 499z" fill="#161600"/>
<path d="M788.4 499L792 495.5L790.5 505.7L786.9 509.2z" fill="#0b0b00"/>
<path d="M786.9 509.2L790.5 505.7L788.9 515.9L785.4 519.3z" fill="#010100"/>
<path d="M785.4 519.3L788.9 515.9L787.3 526.1L783.8 529.5z" fill="#000000"/>
<path d="M783.8 529.5L787.3 526.1L785.8 536.3L782.3 539.6z" fill="#000000"/>
<path d="M782.3 539.6L785.8 536.3L784.2 546.5L780.8 549.7z" fill="#000000"/>
</g></g>
<path d="M527.6 265.0L582.0 255.4L693.6 249.0L656.3 261.5z" fill="#000"/>
<g stroke="#2b2c44" stroke-width="1.7" stroke-linecap="round" fill="none">
<path d="M488.5 308.3L608.6 310.1"/>
<path d="M608.6 310.1L656.3 261.5"/>
<path d="M527.6 265.0L656.3 261.5"/>
<path d="M656.3 261.5L793.1 288.1"/>
<path d="M608.6 310.1L739.4 341.8"/>
<path d="M739.4 341.8L793.1 288.1"/>
<path d="M739.4 341.8L756.8 472.3"/>
<path d="M756.8 472.3L803.0 424.0"/>
<path d="M756.8 472.3L742.8 585.4"/>
<path d="M605.9 461.0L756.8 472.3"/>
<path d="M605.9 461.0L608.6 310.1"/>
<path d="M605.9 461.0L473.6 439.8"/>
<path d="M605.9 461.0L613.4 588.2"/>
<path d="M793.1 288.1L803.0 424.0"/>
<path d="M656.3 261.5L693.6 249.0"/>
</g>
<g stroke="#3e3e42" stroke-width="1.3" stroke-linecap="round" fill="none">
<path d="M693.6 249.0L803.3 273.8"/>
<path d="M803.3 273.8L793.1 288.1"/>
<path d="M813.2 381.2L803.0 424.0"/>
<path d="M784.2 546.5L742.8 585.4"/>
</g>
<path d="M803.0 424.0L784.2 546.5" stroke="#3c3c40" stroke-width="2.1" stroke-linecap="round"/>
<g stroke="#34343a" stroke-width="1.2" stroke-linecap="round" fill="none">
<path d="M527.6 265.0L582.0 255.4"/>
<path d="M582.0 255.4L693.6 249.0"/>
</g>
<g fill="url(#cy)">
<circle cx="486.0" cy="309.0" r="2.9"/>
<circle cx="525.3" cy="264.1" r="2.7"/>
<circle cx="656.3" cy="261.3" r="2.9"/>
<circle cx="694.7" cy="247.7" r="2.6"/>
<circle cx="804.1" cy="272.6" r="2.6"/>
<circle cx="793.2" cy="288.0" r="2.9"/>
<circle cx="608.6" cy="310.1" r="3.1"/>
<circle cx="803.2" cy="424.0" r="2.7"/>
<circle cx="756.8" cy="472.3" r="3.1"/>
<circle cx="784.7" cy="547.3" r="2.6"/>
<circle cx="743.5" cy="586.9" r="2.8"/>
<circle cx="613.4" cy="590.1" r="2.8"/>
<circle cx="497.7" cy="554.7" r="2.8"/>
<circle cx="471.9" cy="439.7" r="3.0"/>
<circle cx="605.9" cy="461.1" r="3.1"/>
</g>
<circle cx="739.4" cy="341.8" r="3.0" fill="url(#rd)"/>
</svg>
  </div>
  <div id="bbar" class="abs"></div>
  <div id="vsplit" class="abs"></div>

  <div id="dock" class="abs"></div>
  <div id="dtitle" class="abs"><span id="dtxt">Model Explorer</span></div>
  <div id="hdr" class="abs"></div>
  <div id="tree" class="abs"></div>
  <div id="row" class="abs"></div>
  <div id="row2" class="abs"></div>
  <div id="panel" class="abs"></div>
  <svg class="abs" style="left:1453px;top:39px" width="34" height="12" viewBox="0 0 34 12"><rect x="0.8" y="1" width="4.2" height="8" fill="#b08c6e"/><rect x="0.8" y="7.6" width="4.2" height="1.4" fill="#e8e8e8"/><circle cx="2.6" cy="4.6" r="1.3" fill="#111"/><rect x="26.9" y="0.2" width="4.2" height="10.8" fill="#169af2"/><rect x="27.3" y="2.6" width="3.8" height="1.2" fill="#fff"/><rect x="27.3" y="6.8" width="3.8" height="1.2" fill="#fff"/><rect x="30.1" y="5.5" width="1" height="3.6" fill="#fff"/></svg>
  <!-- tree content -->
  <svg class="abs" style="left:1169.5px;top:68.4px" width="10" height="6" viewBox="0 0 10 6"><path d="M0.5 0.5 L8.5 0.5 L4.5 4.9 Z" fill="#5e5e5e"/></svg>
  <div class="abs" id="meshes" style="left:1189px;top:62px;font-size:15px;font-weight:bold;color:#000;line-height:18px;white-space:nowrap">Meshes (1)</div>
  <svg class="abs" style="left:1209px;top:85.9px" width="14" height="14" viewBox="0 0 14 14"><defs><linearGradient id="dg" x1="0" y1="0" x2="0" y2="1"><stop offset="0" stop-color="#44a0f2"/><stop offset="1" stop-color="#257cdc"/></linearGradient></defs><path d="M7 0.3 L13.7 7 L7 13.7 L0.3 7 Z" fill="url(#dg)"/></svg>
  <div class="abs" id="meshrow" style="left:1227px;top:84px;letter-spacing:.06px;font-size:15px;color:#fff;line-height:18px;white-space:nowrap">Mesh 50004 (OBJ Import)</div>
  <div class="abs" id="entsel" style="left:1168px;top:166px;font-size:10.3px;color:#9e9e9e;line-height:13px;white-space:nowrap">1 entity selected</div>
  <div class="abs" style="left:1336px;top:184px;width:17px;height:1px;background:repeating-linear-gradient(90deg,#9c9c9c 0 2px,transparent 2px 3px)"></div>

  <!-- Mesh operations -->
  <div class="abs" id="mops" style="left:1172px;top:196px;font-family:'DejaVu Sans',sans-serif;font-size:16px;font-weight:bold;color:#000;line-height:22px;white-space:nowrap">Mesh Operations</div>

  <div class="abs grp" style="top:232px;height:82px"></div>
  <div class="abs gtitle" id="g1" style="left:1183px;top:224px;letter-spacing:.31px">Vertex Selection</div>
  <div class="abs btn" id="b1" style="top:250px;height:31px;line-height:31px;background:#2979ff">Hide Vertices</div>
  <div class="abs lbl" id="l1" style="left:1182px;top:287px">Mesh 50004 selected</div>

  <div class="abs grp" style="top:330px;height:82px"></div>
  <div class="abs gtitle" id="g2" style="left:1182px;top:322px;letter-spacing:.26px">Smooth Selected Vertex</div>
  <div class="abs lbl" id="l2" style="left:1182px;top:348px;letter-spacing:.15px">Smoothing:</div>
  <div class="abs track" style="top:352.8px"></div>
  <div class="abs knob" style="left:1284.6px;top:348px"></div>
  <div class="abs lbl" id="v1" style="left:1474px;top:348px">0.10</div>
  <div class="abs btn" id="b2" style="top:371.4px;height:30px;line-height:31px;background:#2d2d2d;color:#6e6e6e;letter-spacing:-.05px">Smooth Vertex</div>

  <div class="abs grp" style="top:428px;height:136px"></div>
  <div class="abs gtitle" id="g3" style="left:1182px;top:420px;letter-spacing:.1px">Smooth Entire Mesh</div>
  <div class="abs lbl" id="l3" style="left:1182px;top:452px;letter-spacing:.3px">Iterations:</div>
  <div class="abs spin" style="top:447px"><span>5</span><i></i><svg width="9" height="15" viewBox="0 0 9 15"><path d="M0.6 4.6 L4.5 0.6 L8.4 4.6 Z M0.6 10.6 L8.4 10.6 L4.5 14.4 Z" fill="#4a4a4a"/></svg></div>
  <div class="abs lbl" id="l4" style="left:1182px;top:480px;letter-spacing:.15px">Smoothing:</div>
  <div class="abs track" style="top:484.8px"></div>
  <div class="abs knob" style="left:1284.6px;top:480.2px"></div>
  <div class="abs lbl" id="v2" style="left:1474px;top:480px">0.10</div>
  <div class="abs btn" id="b3" style="top:503.4px;height:30.2px;line-height:31px;background:#454545">Smooth All Vertices</div>
  <div class="abs" id="warn" style="left:1198px;top:539px;font-size:13px;font-weight:bold;color:#ff9800;line-height:15px;white-space:nowrap;transform:scaleX(.893);transform-origin:0 50%">High smoothing values cause volume loss</div>

  <svg class="abs" style="left:1182px;top:540px" width="14" height="14" viewBox="0 0 14 14"><path d="M6.5 1 L12.4 12.8 L0.6 12.8 Z" fill="#ffd21c" stroke="#f5c400" stroke-width=".6" stroke-linejoin="round"/><path d="M6.5 4.3 L6.5 9.2" stroke="#333" stroke-width="1.3" stroke-linecap="round"/><circle cx="6.5" cy="11" r=".8" fill="#333"/></svg>
  <svg class="abs" style="left:1183px;top:704px" width="12" height="12" viewBox="0 0 12 12"><defs><linearGradient id="ig" x1="0" y1="0" x2="0" y2="1"><stop offset="0" stop-color="#22acf0"/><stop offset="1" stop-color="#0a86d6"/></linearGradient></defs><rect x="0" y="0.2" width="11" height="11.3" rx="1" fill="url(#ig)"/><circle cx="5.5" cy="2.7" r=".9" fill="#fff"/><path d="M5.5 5 L5.5 9.8" stroke="#fff" stroke-width="1.4" stroke-linecap="round"/></svg>
  <div class="abs grp" style="top:580px;height:147px"></div>
  <div class="abs gtitle" id="g4" style="left:1183px;top:572px;letter-spacing:-.04px">Triangle <span style="font-family:'DejaVu Sans',sans-serif;font-size:13.5px;letter-spacing:0;display:inline-block;width:13px;text-align:center;position:relative;top:-.5px">&#8596;</span> Quad Conversion</div>
  <div class="abs lbl" id="l5" style="left:1182px;top:604px;letter-spacing:.15px">Planarity:</div>
  <div class="abs spin" style="top:599px"><span>0.030</span><i></i><svg width="9" height="15" viewBox="0 0 9 15"><path d="M0.6 4.6 L4.5 0.6 L8.4 4.6 Z M0.6 10.6 L8.4 10.6 L4.5 14.4 Z" fill="#4a4a4a"/></svg></div>
  <div class="abs lbl" id="l6" style="left:1182px;top:638px">Aspect Ratio:</div>
  <div class="abs spin" style="top:633px"><span>3.0</span><i></i><svg width="9" height="15" viewBox="0 0 9 15"><path d="M0.6 4.6 L4.5 0.6 L8.4 4.6 Z M0.6 10.6 L8.4 10.6 L4.5 14.4 Z" fill="#4a4a4a"/></svg></div>
  <div class="abs btn" id="b4" style="top:666px;height:31px;line-height:31px;background:#4d4d4d;letter-spacing:-.32px">Convert to Quads</div>
  <div class="abs" id="info" style="left:1198px;top:702px;font-size:13px;color:#4a9cf5;line-height:15px;white-space:nowrap;transform:scaleX(.932);transform-origin:0 50%">Analyzes triangle pairs for quad conversion</div>

  <div id="tabs" class="abs"></div>
  <div class="abs tabbg" style="left:1163px;width:50.5px;border-radius:0 4px 4px 0"></div>
  <div class="abs tabbg" style="left:1215.5px;width:96px"></div>
  <div class="abs tabbg" style="left:1313.5px;width:82px"></div>
  <div class="abs tabbg" style="left:1397.5px;width:93px;background:#fff"></div>
  <div class="abs tabbg" style="left:1492.5px;width:20px;background:#efefef"></div>
  <div class="abs tab" id="t1" style="left:1163px">erties</div>
  <div class="abs tab" id="t2" style="left:1229px">Geometry</div>
  <div class="abs tab" id="t3" style="left:1326px">Analysis</div>
  <div class="abs tab" id="t4" style="left:1410px;top:738px;color:#1a1a1a">Mesh Ops</div>
  <svg class="abs" style="left:1497px;top:747px" width="6" height="9" viewBox="0 0 6 9"><path d="M5 0.5 L5 8.5 L0.8 4.5 Z" fill="#555"/></svg>
</div>
</body>
</html>
